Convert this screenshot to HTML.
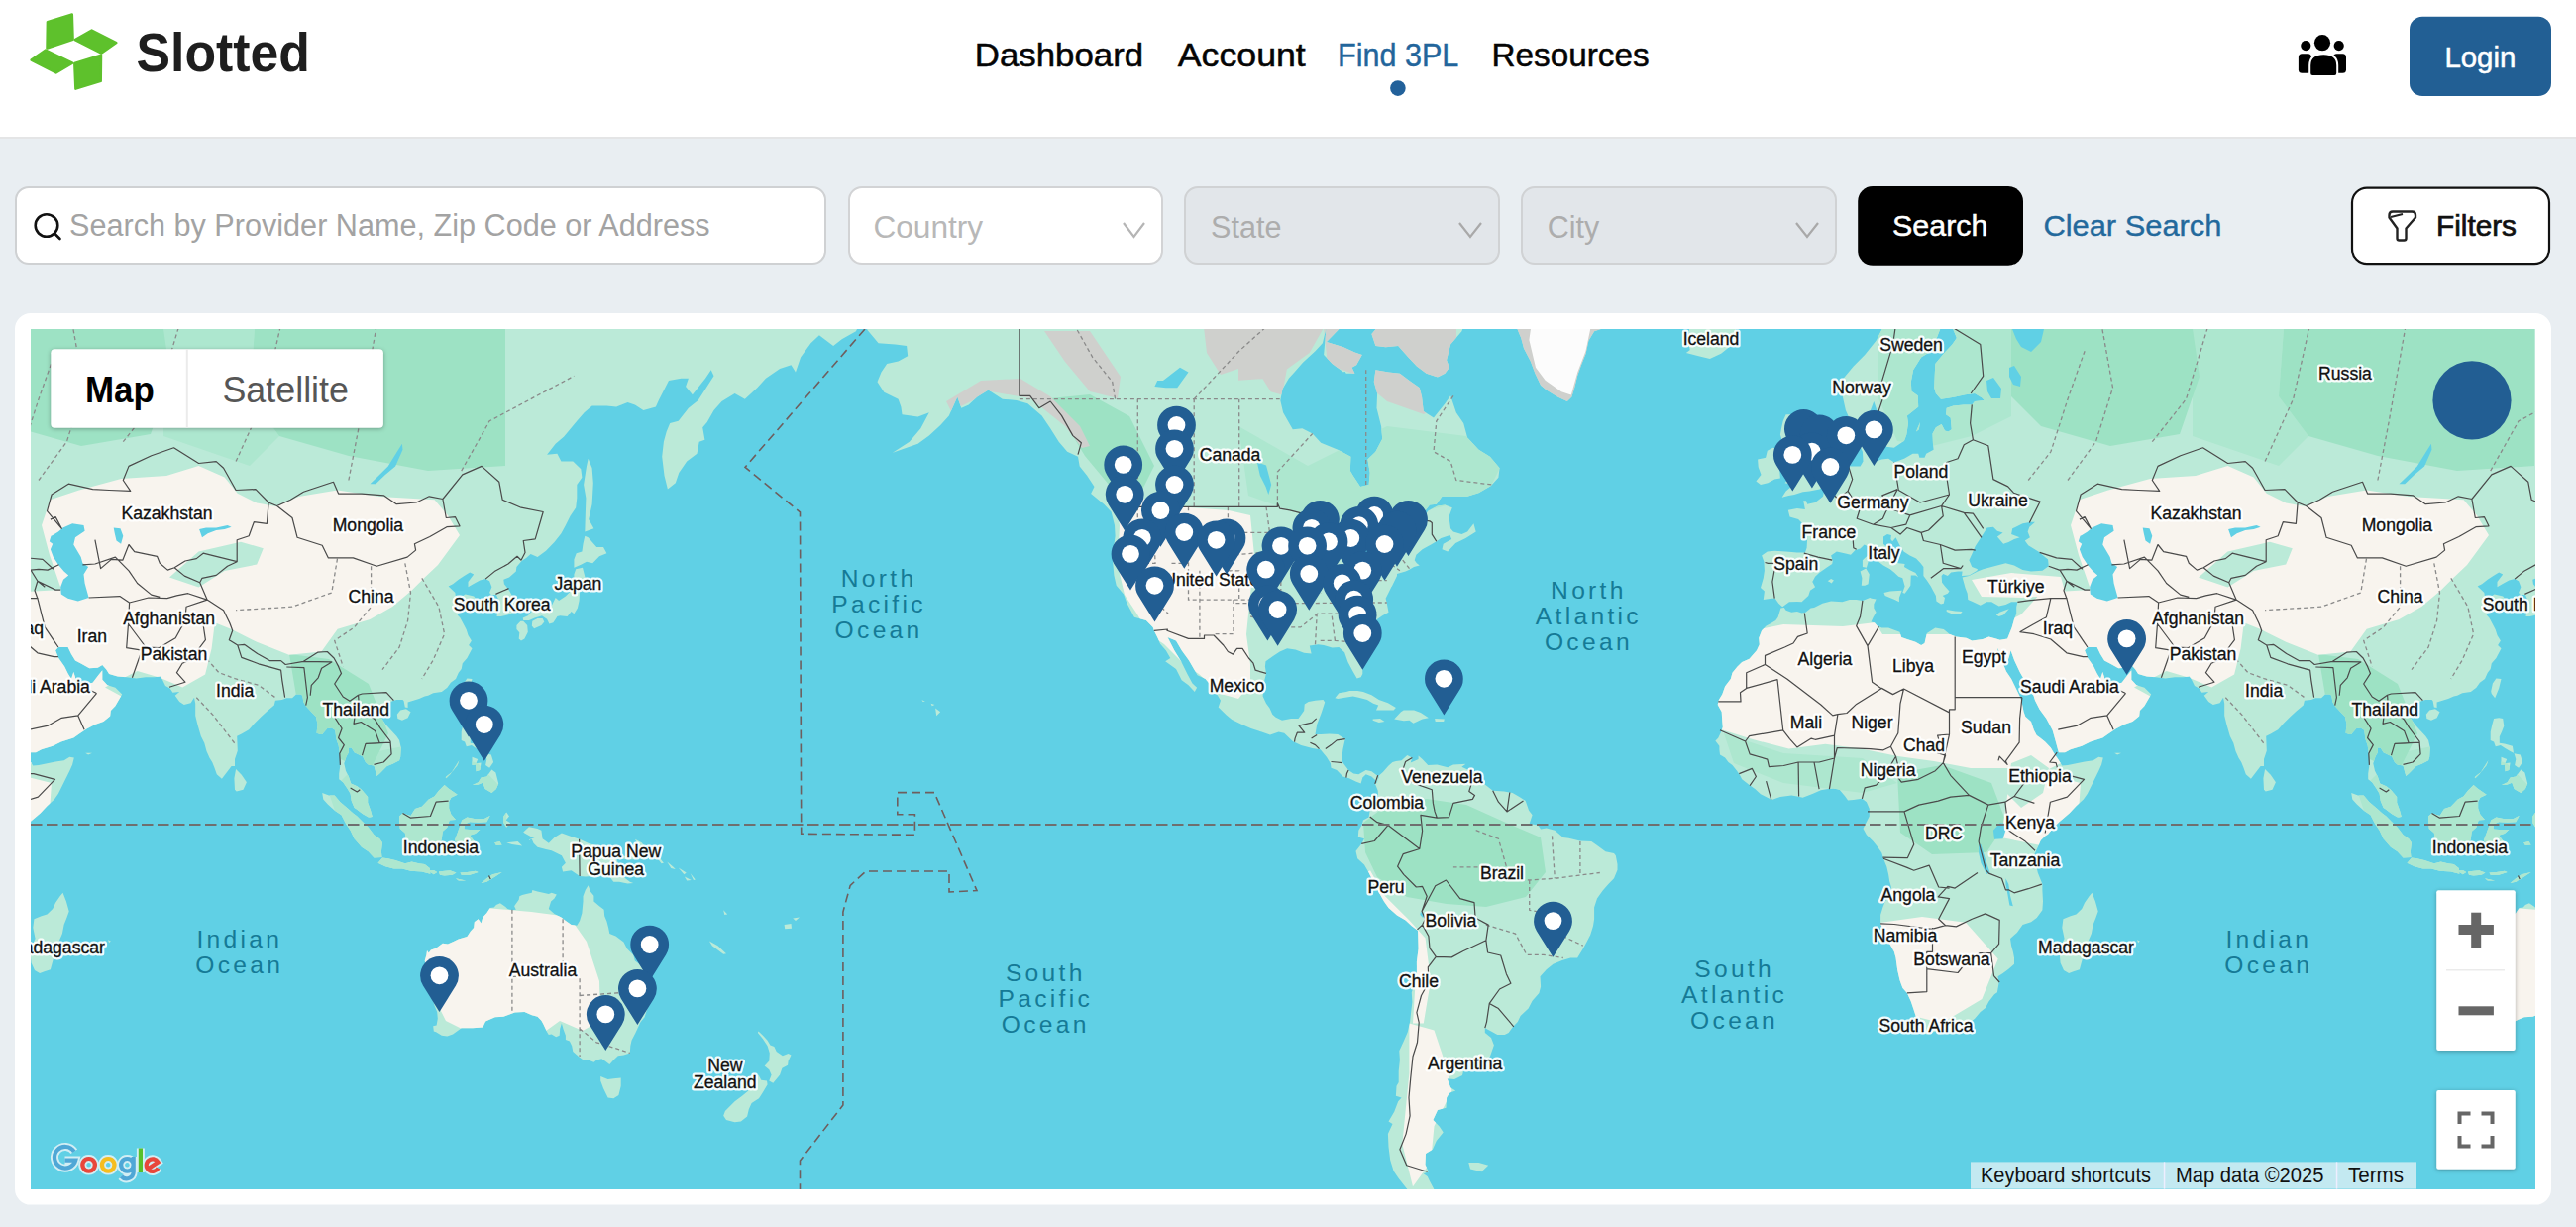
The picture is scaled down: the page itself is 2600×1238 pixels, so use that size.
<!DOCTYPE html>
<html><head><meta charset="utf-8">
<style>
*{box-sizing:border-box;margin:0;padding:0}
html,body{width:2600px;height:1238px;overflow:hidden;background:#e9eef2;font-family:"Liberation Sans",sans-serif}
svg{position:absolute;left:0;top:0}
.map{position:absolute;left:31px;top:332px;width:2528px;height:868px;overflow:hidden;background:#60d0e5}
text{font-family:"Liberation Sans",sans-serif}
@media (max-width:1400px){html{zoom:0.5}}
</style></head><body>
<svg width="2600" height="1238" viewBox="0 0 2600 1238"><rect x="0" y="0" width="2600" height="138" fill="#fff"/><rect x="0" y="138" width="2600" height="2" fill="#e4e5e6"/><g fill="#5ec12c" stroke="#5ec12c" stroke-width="2.5" stroke-linejoin="round"><path d="M47.5 48.5L47.9 22.1L72.8 14.5L73.6 39.8Z"/><path d="M75.8 40.2L92.6 30.6L117.3 43.1L102.4 53.6Z"/><path d="M102.0 55.6L101.7 81.9L76.4 89.6L75.3 63.9Z"/><path d="M73.1 63.6L56.6 73.5L31.6 60.6L46.0 50.6Z"/></g><text x="137.5" y="72.0" font-size="55.0" font-weight="bold" fill="#1e1e1e" textLength="175.5" lengthAdjust="spacingAndGlyphs">Slotted</text><text x="983.8" y="67.0" font-size="33.0" font-weight="normal" fill="#050505" textLength="170.3" lengthAdjust="spacingAndGlyphs" stroke="#050505" stroke-width="0.5">Dashboard</text><text x="1188.8" y="67.0" font-size="33.0" font-weight="normal" fill="#050505" textLength="129.0" lengthAdjust="spacingAndGlyphs" stroke="#050505" stroke-width="0.5">Account</text><text x="1350.0" y="67.0" font-size="33.0" font-weight="normal" fill="#22659b" textLength="122.3" lengthAdjust="spacingAndGlyphs" stroke="#22659b" stroke-width="0.4">Find 3PL</text><text x="1505.6" y="67.0" font-size="33.0" font-weight="normal" fill="#050505" textLength="159.0" lengthAdjust="spacingAndGlyphs" stroke="#050505" stroke-width="0.5">Resources</text><circle cx="1410.9" cy="89.1" r="7.8" fill="#22619a"/><g fill="#000"><circle cx="2344" cy="43.2" r="8.1"/><circle cx="2327.3" cy="46.1" r="5.1"/><circle cx="2360.7" cy="46.1" r="5.1"/><rect x="2319.9" y="54.3" width="13" height="19.5" rx="3.5"/><rect x="2355" y="54.3" width="13" height="19.5" rx="3.5"/><path d="M2331.2 66Q2331.2 54.3 2345.2 54.3Q2359.2 54.3 2359.2 66L2359.2 74Q2359.2 76.9 2356.3 76.9L2334.1 76.9Q2331.2 76.9 2331.2 74Z" stroke="#fff" stroke-width="2"/></g><rect x="2432" y="16.8" width="143" height="80.2" rx="13" fill="#225f94"/><text x="2467.4" y="67.5" font-size="29.0" font-weight="normal" fill="#fff" textLength="72.0" lengthAdjust="spacingAndGlyphs" stroke="#fff" stroke-width="0.5">Login</text><rect x="16" y="189" width="817" height="77" rx="13" fill="#fff" stroke="#cfd1d3" stroke-width="2"/><circle cx="47" cy="227.5" r="11.3" fill="none" stroke="#111" stroke-width="2.6"/><path d="M55.5 236L60.5 241" stroke="#111" stroke-width="2.6" stroke-linecap="round"/><text x="70.0" y="238.3" font-size="31.0" font-weight="normal" fill="#a3a3a3" textLength="646.6" lengthAdjust="spacingAndGlyphs">Search by Provider Name, Zip Code or Address</text><rect x="857" y="189" width="316" height="77" rx="13" fill="#fff" stroke="#d2d3d5" stroke-width="2"/><text x="881.4" y="239.5" font-size="31.0" font-weight="normal" fill="#b8b8b8" textLength="110.8" lengthAdjust="spacingAndGlyphs">Country</text><path d="M1134 225L1144.5 239L1155 225" fill="none" stroke="#b5b5b5" stroke-width="2.2"/><rect x="1196" y="189" width="317" height="77" rx="13" fill="#e2e6ea" stroke="#d0d2d4" stroke-width="2"/><text x="1222.0" y="239.5" font-size="31.0" font-weight="normal" fill="#adadad" textLength="71.4" lengthAdjust="spacingAndGlyphs">State</text><path d="M1473 225L1484 239L1495 225" fill="none" stroke="#a9a9a9" stroke-width="2.2"/><rect x="1536" y="189" width="317" height="77" rx="13" fill="#e2e6ea" stroke="#d0d2d4" stroke-width="2"/><text x="1561.7" y="239.5" font-size="31.0" font-weight="normal" fill="#adadad" textLength="52.5" lengthAdjust="spacingAndGlyphs">City</text><path d="M1813 225L1824 239L1835 225" fill="none" stroke="#a9a9a9" stroke-width="2.2"/><rect x="1875.2" y="188" width="166.8" height="79.8" rx="15" fill="#000"/><text x="1910.0" y="238.0" font-size="30.0" font-weight="normal" fill="#fff" textLength="96.5" lengthAdjust="spacingAndGlyphs" stroke="#fff" stroke-width="0.5">Search</text><text x="2062.4" y="238.0" font-size="30.0" font-weight="normal" fill="#23699c" textLength="180.0" lengthAdjust="spacingAndGlyphs" stroke="#23699c" stroke-width="0.4">Clear Search</text><rect x="2374" y="189.6" width="199" height="76.6" rx="15" fill="#fff" stroke="#111" stroke-width="2.2"/><path d="M2411.5 217Q2411.5 213.5 2415 213.5L2434.5 213.5Q2438 213.5 2438 217L2438 219.5L2428.5 230.5L2428.5 240.5Q2428.5 242.5 2426.5 242.5L2421.5 242.5Q2419.5 242.5 2419.5 240.5L2419.5 230.5L2411.5 219.5Z" fill="none" stroke="#222" stroke-width="2.4" stroke-linejoin="round"/><path d="M2413 219L2425 216" stroke="#222" stroke-width="2"/><text x="2459.0" y="237.7" font-size="29.0" font-weight="normal" fill="#111" textLength="81.0" lengthAdjust="spacingAndGlyphs" stroke="#111" stroke-width="0.7">Filters</text><rect x="15" y="316" width="2560" height="899.6" rx="16" fill="#fff"/></svg>
<div class="map"><svg width="2528" height="868" viewBox="0 0 2528 868" style="position:absolute;left:0;top:0"><defs><clipPath id="lc"><path d="M844.3 0.8L855.6 14.3L872.7 15.6L884.1 17.0L885.2 27.3L875.6 32.4L864.2 34.9L858.5 43.6L854.5 53.3L861.3 63.8L875.6 70.7L878.4 78.6L879.5 86.3L895.5 88.5L906.8 84.2L898.3 100.3L886.9 113.7L869.9 124.8L884.1 119.8L895.5 115.8L906.8 107.6L918.2 97.1L926.8 87.4L935.3 68.5L939.3 79.7L946.7 76.4L955.2 68.5L966.6 61.5L980.8 70.7L995.0 71.9L1006.4 75.3L1020.6 87.4L1029.2 100.3L1037.7 113.7L1046.2 123.8L1057.0 128.7L1058.7 138.4L1066.1 147.8L1073.5 158.9L1070.1 166.1L1083.2 176.7L1090.6 184.5L1094.0 198.0L1094.6 208.7L1091.7 230.1L1093.4 248.4L1095.7 258.7L1103.1 267.4L1106.5 276.7L1113.9 290.7L1125.9 294.1L1132.7 300.9L1133.8 304.3L1137.2 311.0L1140.1 317.7L1145.8 324.2L1150.3 332.0L1145.2 335.3L1156.0 342.9L1161.7 354.3L1168.5 359.3L1174.8 366.1L1177.1 361.8L1172.5 357.4L1167.4 348.0L1161.1 335.3L1154.3 324.2L1147.5 311.0L1156.0 314.4L1161.7 324.2L1169.1 334.6L1177.6 349.3L1185.6 353.0L1194.7 364.3L1201.0 374.7L1198.7 381.4L1206.6 389.3L1212.3 394.1L1222.6 398.9L1231.7 403.0L1242.5 406.6L1251.0 409.5L1259.6 406.6L1265.2 407.8L1273.8 416.0L1282.3 420.1L1293.7 423.1L1301.7 424.2L1307.9 431.8L1311.9 438.2L1312.5 442.8L1318.2 445.1L1324.4 451.5L1330.7 453.2L1337.5 456.6L1342.6 458.4L1344.3 452.6L1347.7 449.2L1353.4 451.5L1356.3 454.3L1359.1 457.2L1360.8 451.5L1358.0 449.7L1353.4 446.3L1347.7 445.1L1340.3 449.2L1335.2 448.6L1330.1 445.1L1324.4 437.6L1323.3 434.1L1324.4 424.2L1326.7 413.7L1319.3 409.0L1310.8 408.4L1302.2 409.0L1296.5 409.0L1298.2 398.9L1300.5 392.9L1302.8 386.9L1306.2 376.5L1304.5 374.1L1296.5 374.7L1289.7 375.9L1285.7 378.4L1285.2 385.0L1279.5 392.9L1272.1 392.9L1263.0 394.7L1256.7 391.7L1253.3 388.7L1250.5 382.6L1247.0 377.8L1243.6 370.4L1244.2 362.4L1245.3 354.3L1247.0 347.4L1245.9 340.4L1246.5 335.3L1253.9 330.1L1260.7 325.5L1268.1 322.3L1276.6 323.6L1285.2 326.8L1292.6 327.5L1290.8 319.6L1299.4 318.3L1305.1 319.0L1313.6 321.6L1320.4 321.0L1326.1 326.2L1329.5 335.9L1334.6 345.5L1338.6 352.4L1342.6 351.2L1344.3 348.0L1344.3 341.7L1341.5 330.7L1337.5 321.0L1336.9 315.0L1339.2 307.7L1345.5 303.0L1350.6 297.5L1356.3 294.8L1364.2 289.3L1370.5 285.8L1368.8 276.7L1367.6 271.7L1370.5 266.0L1373.3 260.2L1373.9 259.4L1379.0 249.1L1379.0 246.9L1387.6 244.6L1391.0 243.1L1396.1 240.1L1401.8 238.5L1398.9 236.3L1396.7 233.2L1398.4 227.8L1404.6 222.3L1413.2 217.5L1418.8 214.3L1423.4 211.1L1432.5 207.9L1434.2 211.9L1425.7 216.7L1424.5 222.3L1430.2 224.6L1438.2 215.9L1448.4 211.1L1458.7 204.6L1456.4 196.3L1450.1 204.6L1444.4 207.1L1435.9 204.6L1433.1 201.3L1431.4 189.6L1434.8 180.2L1427.4 177.6L1420.0 178.5L1410.3 183.6L1402.9 194.7L1398.9 195.5L1404.6 187.1L1412.0 177.6L1418.8 176.7L1424.5 168.8L1435.9 168.8L1450.1 168.8L1461.5 165.2L1474.0 158.0L1481.4 149.7L1482.6 140.3L1472.9 128.7L1461.5 121.8L1450.1 109.6L1446.2 95.0L1438.8 84.2L1433.1 67.3L1427.4 75.3L1416.0 89.6L1405.8 83.1L1404.1 68.5L1401.8 59.2L1391.5 52.1L1381.9 44.8L1370.5 43.6L1357.4 41.2L1355.7 53.3L1359.1 65.0L1358.5 79.7L1363.1 98.2L1364.2 110.7L1357.4 123.8L1349.4 131.6L1351.7 145.0L1350.6 157.1L1342.0 158.9L1334.6 147.8L1331.8 143.1L1332.4 128.7L1319.3 121.8L1302.2 114.7L1293.7 105.5L1283.4 100.3L1273.8 101.3L1264.1 84.2L1261.3 71.9L1263.5 60.4L1269.8 49.7L1275.5 43.6L1284.0 33.7L1296.5 22.2L1303.9 14.3L1309.0 -7.6L1310.8 -65.7L1231.1 -234.3L1003.6 -234.3L832.9 -160.9L844.3 0.8ZM1450.1 -13.2L1444.4 2.2L1433.1 15.6L1429.1 31.2L1431.9 38.7L1427.4 44.8L1420.0 48.5L1408.6 44.8L1398.9 37.4L1390.4 28.6L1380.2 17.0L1367.6 18.3L1357.4 17.0L1353.4 4.9L1367.6 -11.8L1379.0 -33.9L1447.3 -65.7L1450.1 -13.2ZM1307.9 13.0L1325.0 18.3L1336.4 23.5L1343.8 26.1L1338.1 36.2L1325.0 43.6L1313.6 34.9L1305.1 26.1L1307.9 -4.7L1327.8 -7.6L1307.9 13.0ZM1322.1 36.2L1333.5 38.7L1336.4 44.8L1327.8 44.8L1322.1 36.2ZM1487.1 -33.9L1495.6 -19.0L1498.5 -4.7L1504.2 9.0L1507.0 19.6L1513.8 32.4L1518.4 44.8L1524.1 56.8L1529.8 61.5L1541.2 68.5L1550.8 73.0L1555.4 68.5L1558.2 59.2L1561.1 47.3L1565.0 36.2L1569.6 24.8L1572.4 11.7L1578.1 2.2L1586.7 -0.6L1595.2 -3.4L1606.6 -19.0L1629.3 -49.4L1686.2 -160.9L1487.1 -234.3L1487.1 -33.9ZM1674.8 -11.8L1717.5 -11.8L1722.6 6.3L1715.8 17.0L1706.1 24.8L1694.8 29.9L1683.4 27.3L1670.9 24.1L1674.8 20.9L1673.1 14.3L1674.8 -11.8ZM1316.4 372.3L1320.4 367.3L1327.8 366.1L1331.2 364.9L1339.2 364.9L1344.9 366.1L1353.4 369.2L1360.8 374.1L1369.9 377.2L1377.9 382.0L1375.6 384.4L1358.0 384.4L1360.2 379.6L1355.1 377.8L1348.9 374.1L1340.3 371.7L1334.6 370.4L1326.7 371.7L1319.3 372.9L1316.4 372.3ZM1376.2 393.5L1383.0 386.3L1385.8 384.4L1396.1 384.4L1402.9 386.9L1410.9 392.3L1404.6 393.5L1395.5 397.7L1391.5 394.7L1385.8 395.3L1376.2 393.5ZM1354.6 393.5L1362.0 392.9L1366.5 395.9L1360.8 397.1L1354.6 394.7ZM1417.1 392.9L1426.8 393.5L1426.2 395.9L1417.7 395.9ZM1360.2 450.9L1364.8 446.9L1370.5 440.5L1374.5 437.0L1377.9 435.9L1383.6 435.3L1389.3 430.1L1394.4 432.4L1392.7 437.6L1396.1 435.9L1400.6 434.1L1400.6 430.6L1404.6 434.1L1410.3 439.9L1419.4 439.4L1430.2 442.2L1435.9 439.4L1448.4 438.8L1444.4 441.7L1453.0 445.7L1455.8 451.5L1461.5 454.9L1470.0 461.2L1475.7 465.8L1487.1 466.4L1495.6 468.1L1502.5 472.1L1508.7 476.1L1512.1 485.8L1515.6 490.3L1512.7 498.9L1521.2 500.6L1524.1 504.6L1529.8 503.4L1538.3 505.7L1546.8 513.1L1552.5 513.7L1563.9 516.5L1575.3 517.1L1581.0 521.1L1589.5 527.3L1598.0 529.1L1599.8 531.3L1601.5 539.9L1601.5 545.7L1598.0 554.3L1592.4 560.1L1586.7 566.4L1581.0 574.6L1578.1 583.4L1578.1 595.2L1577.0 602.3L1574.2 611.3L1570.7 618.0L1566.8 625.3L1561.1 634.5L1554.2 634.5L1545.7 637.0L1536.6 640.7L1529.8 646.3L1523.5 653.3L1524.1 663.5L1522.4 669.9L1515.6 677.7L1511.6 685.6L1503.6 693.0L1500.8 699.1L1495.6 704.5L1491.7 710.0L1487.7 712.1L1480.3 712.1L1474.0 708.6L1467.8 705.2L1467.8 710.0L1474.0 714.9L1476.9 722.6L1472.9 734.0L1465.5 739.1L1453.0 740.6L1445.6 739.8L1446.2 747.9L1445.0 753.1L1437.0 756.9L1429.7 756.2L1433.1 765.3L1438.2 768.4L1431.9 770.7L1429.1 775.4L1428.5 785.7L1420.0 788.1L1415.4 797.9L1421.7 804.5L1425.7 810.4L1418.8 818.9L1414.9 827.7L1408.0 832.1L1407.5 842.9L1410.9 850.3L1405.8 852.2L1409.7 855.0L1412.0 859.7L1416.6 868.4L1428.5 873.3L1421.7 876.2L1410.3 879.2L1398.9 876.2L1390.4 869.3L1380.7 856.9L1375.6 849.4L1372.2 838.4L1370.5 825.0L1369.9 812.1L1374.5 802.0L1370.5 799.5L1376.2 789.7L1380.2 779.3L1383.6 775.4L1377.9 773.8L1378.5 763.7L1380.7 759.9L1380.7 748.7L1381.9 737.6L1381.3 728.3L1385.8 718.4L1389.8 709.3L1392.1 699.1L1393.2 689.0L1394.4 679.0L1393.8 669.3L1396.7 660.9L1398.9 650.1L1398.9 638.2L1400.6 625.3L1400.1 607.1L1393.8 602.3L1387.6 596.4L1379.0 591.6L1370.5 584.0L1365.9 577.5L1361.4 569.4L1356.3 560.1L1350.6 548.5L1346.0 540.5L1339.2 534.2L1337.5 526.8L1343.2 519.4L1346.0 514.2L1339.8 512.5L1340.3 505.7L1343.8 500.0L1344.9 495.4L1350.6 492.6L1351.7 485.8L1359.1 480.1L1360.2 474.4L1359.7 465.8L1356.8 458.4L1359.1 457.2L1360.2 450.9ZM1451.3 841.1L1461.5 841.1L1471.2 843.8L1464.4 850.3L1453.0 847.5ZM-219.6 -160.9L-171.2 -26.4L-176.9 -4.7L-185.4 11.7L-196.8 26.1L-208.2 37.4L-218.4 49.7L-219.6 66.2L-216.1 81.9L-212.7 89.6L-207.0 92.8L-199.6 89.6L-191.1 81.9L-187.7 73.0L-184.3 83.1L-184.3 88.5L-180.9 96.0L-176.3 108.6L-175.2 118.8L-167.2 119.8L-157.0 112.7L-154.7 106.5L-153.0 95.0L-154.1 87.4L-142.8 78.6L-143.3 67.3L-149.6 62.7L-150.2 53.3L-147.9 41.2L-139.9 28.6L-129.7 22.2L-125.7 13.0L-120.0 -2.0L-108.6 -2.0L-104.1 9.0L-108.6 15.6L-117.2 24.8L-125.7 34.9L-126.3 47.3L-126.8 59.2L-125.1 65.0L-120.0 70.7L-111.5 69.6L-105.8 68.5L-95.5 66.2L-85.9 65.0L-78.5 69.6L-76.2 71.9L-85.9 73.0L-88.7 76.4L-97.2 76.4L-107.5 77.5L-114.3 79.7L-114.9 86.3L-110.3 89.6L-109.2 101.3L-112.6 103.4L-116.0 102.4L-119.4 96.0L-125.1 99.2L-128.5 105.5L-128.0 116.8L-127.4 121.8L-134.8 125.8L-136.5 129.7L-141.6 129.7L-142.8 125.8L-148.4 125.8L-157.0 130.7L-167.2 134.5L-172.9 130.7L-179.7 131.6L-185.4 133.6L-186.6 130.7L-191.1 126.7L-191.1 118.8L-188.3 111.7L-189.4 105.5L-187.7 96.0L-194.0 101.3L-201.4 105.5L-201.9 108.6L-201.4 118.8L-199.1 123.8L-198.5 133.6L-201.4 138.4L-208.2 138.4L-213.9 138.4L-220.7 143.1L-221.8 147.8L-224.7 152.5L-228.7 158.0L-233.8 160.7L-237.8 162.5L-238.9 168.8L-242.3 171.5L-246.9 175.0L-254.8 176.7L-256.0 173.2L-258.8 173.2L-257.1 181.9L-265.1 181.1L-274.2 182.8L-272.5 189.6L-263.9 192.1L-260.5 195.5L-254.8 203.0L-254.8 210.3L-255.4 220.7L-257.1 225.4L-265.1 225.4L-276.4 224.6L-287.8 223.8L-295.2 224.6L-300.9 228.5L-298.6 234.7L-298.1 243.8L-299.2 251.3L-302.0 260.9L-298.1 264.5L-299.2 273.1L-290.7 271.7L-287.3 271.7L-283.8 276.7L-279.9 280.2L-273.0 275.3L-265.1 274.9L-260.5 275.3L-253.7 268.9L-252.0 263.8L-246.9 260.2L-249.7 255.0L-246.9 249.8L-242.9 246.1L-235.5 240.8L-229.8 237.0L-229.2 234.0L-230.9 228.5L-225.2 224.6L-217.3 226.2L-211.0 227.8L-206.5 223.1L-201.4 221.5L-197.4 217.5L-192.2 219.9L-188.3 228.5L-184.9 233.2L-178.0 238.5L-171.2 242.3L-167.2 245.4L-162.7 249.8L-158.7 251.3L-156.4 259.4L-158.7 266.0L-156.4 266.7L-153.6 263.1L-150.7 258.7L-150.2 248.4L-145.6 248.4L-142.8 250.6L-145.6 246.1L-151.9 243.1L-157.0 240.1L-156.4 237.0L-162.7 236.3L-167.2 232.4L-171.2 223.8L-178.0 216.7L-178.0 209.5L-174.0 207.1L-170.1 207.9L-170.6 211.9L-168.9 214.3L-165.5 210.3L-161.5 218.3L-157.5 224.6L-151.3 228.5L-145.0 231.6L-140.5 236.3L-137.6 240.1L-137.6 249.1L-134.2 253.6L-130.2 259.4L-128.0 263.8L-125.1 268.9L-124.6 274.6L-120.0 277.4L-117.2 276.7L-116.0 271.0L-118.3 268.9L-113.2 266.7L-111.5 264.5L-116.0 259.4L-118.9 255.8L-119.4 249.1L-117.7 246.9L-113.2 249.1L-109.8 245.4L-102.9 244.6L-98.4 244.6L-99.0 249.1L-91.6 248.4L-83.6 243.8L-83.0 242.3L-88.7 240.1L-91.6 233.2L-88.7 227.0L-85.3 219.1L-79.6 210.3L-73.4 200.5L-67.1 199.7L-63.1 203.8L-57.4 205.4L-63.1 209.5L-56.9 216.7L-51.7 215.1L-46.0 211.9L-40.4 210.3L-48.9 207.1L-47.8 201.3L-37.5 196.3L-29.0 194.7L-25.0 194.7L-30.7 199.7L-32.4 204.6L-30.1 210.3L-35.2 213.5L-31.8 218.3L-21.6 224.6L-11.9 232.4L-11.3 239.3L-17.6 243.8L-29.0 244.6L-37.5 243.1L-46.0 238.5L-54.6 236.3L-66.0 239.3L-77.3 242.3L-83.0 244.6L-91.6 249.1L-98.4 250.6L-96.7 256.5L-95.5 260.9L-93.3 266.7L-92.7 273.1L-87.6 275.3L-80.2 278.8L-73.9 275.3L-68.8 275.3L-61.4 279.5L-54.6 278.1L-48.9 275.3L-42.6 275.3L-43.8 280.2L-43.8 287.2L-46.0 292.7L-48.3 300.9L-51.2 308.3L-52.9 312.4L-49.5 324.2L-46.0 334.0L-40.4 346.1L-36.4 353.0L-29.0 361.8L-25.0 374.7L-20.4 383.8L-13.6 392.9L-7.4 404.8L-4.5 414.9L-2.2 423.6L-1.1 427.2L5.2 427.2L10.8 424.2L22.2 420.7L30.8 416.6L43.3 412.5L49.0 408.4L56.4 403.6L64.9 398.9L73.4 395.9L80.2 390.5L80.8 385.0L85.4 380.2L92.2 368.6L85.4 361.8L77.4 359.3L72.3 353.7L72.3 344.2L67.7 349.9L62.6 356.8L53.5 358.7L45.5 357.4L45.0 351.2L43.3 346.1L41.0 353.0L37.6 347.4L34.2 340.4L27.9 331.4L25.1 324.2L27.9 321.0L33.6 321.0L37.6 321.0L41.0 328.1L45.0 334.6L51.2 337.8L59.2 342.3L67.7 341.7L72.3 339.1L76.3 343.6L79.1 348.0L87.6 350.5L96.7 351.2L106.4 352.4L116.1 351.2L124.6 351.2L130.9 350.5L133.2 354.3L136.0 359.9L140.6 362.4L143.4 366.7L150.2 366.1L145.7 369.8L150.2 375.9L154.8 379.0L161.6 377.2L165.0 371.7L166.2 377.8L166.2 389.9L168.4 398.9L171.8 410.7L175.3 417.8L177.5 426.0L180.4 432.4L183.2 437.0L185.5 442.8L187.8 449.2L192.9 453.8L196.9 448.6L202.6 441.1L206.0 441.1L206.0 434.1L208.8 425.4L208.2 410.7L212.8 408.4L220.2 404.2L225.9 397.7L232.7 391.1L238.4 385.7L245.8 379.6L246.9 374.7L253.8 374.1L258.3 372.3L264.0 372.3L268.0 368.6L272.5 368.6L274.2 369.8L275.4 376.5L277.7 380.2L283.9 386.9L287.9 391.1L289.6 398.9L288.5 407.8L292.4 409.0L294.2 409.0L299.3 403.0L303.8 402.4L307.2 404.8L308.4 413.7L310.6 420.1L312.4 431.2L312.4 439.9L311.2 448.6L311.2 454.3L315.2 457.2L319.8 464.1L322.6 468.7L323.7 476.1L326.6 482.9L328.9 484.6L335.1 489.2L340.8 492.6L342.5 492.6L344.8 492.0L343.1 485.8L340.2 477.8L340.2 472.1L334.0 464.7L329.4 461.2L323.2 458.4L320.9 451.5L318.0 445.7L316.3 438.2L318.6 431.2L320.9 427.2L320.9 422.5L323.7 422.5L326.6 427.2L332.3 430.1L335.1 431.2L338.0 437.0L340.8 439.4L346.5 440.5L349.3 450.9L352.2 448.6L359.6 441.1L365.3 438.8L372.1 435.3L373.2 431.8L373.8 422.5L372.1 414.9L369.2 410.7L363.6 404.8L358.4 398.9L353.9 392.3L353.3 388.7L356.2 383.8L359.0 379.6L363.6 375.9L366.4 374.7L369.2 374.1L375.5 374.1L376.6 375.3L377.8 381.4L380.6 382.0L380.6 376.5L386.3 374.7L392.0 372.9L397.7 370.4L401.1 369.8L406.2 367.3L414.8 366.1L420.4 361.8L423.9 356.8L429.0 353.0L431.8 346.7L434.7 342.9L435.8 337.2L440.4 332.0L445.5 322.3L442.1 319.0L444.9 314.4L441.5 309.0L439.8 303.6L437.5 298.9L433.5 291.4L430.7 288.6L436.4 280.9L439.8 277.4L448.9 271.7L447.2 269.6L438.6 267.4L431.8 271.7L429.0 271.0L428.4 266.0L421.6 259.4L426.1 257.2L431.8 252.8L437.5 249.1L443.2 245.4L447.2 247.6L441.5 255.0L441.5 260.2L446.6 257.2L453.4 253.6L459.1 252.1L463.1 254.3L465.4 260.2L463.1 266.0L464.8 268.1L469.9 268.1L472.2 273.1L471.6 280.2L470.5 290.0L474.5 290.0L483.0 287.9L487.6 285.8L488.7 280.2L488.1 273.1L483.0 263.8L477.9 257.2L477.3 252.8L483.0 250.6L489.8 244.6L490.4 240.1L495.5 234.0L500.1 230.9L504.6 227.0L511.5 230.1L520.0 223.8L528.5 215.1L535.4 206.2L539.9 198.0L544.5 188.8L550.2 180.2L551.3 170.6L551.3 157.1L556.4 149.7L555.3 141.2L547.3 133.6L535.4 133.6L531.4 125.8L521.1 126.7L529.7 115.8L538.2 108.6L551.3 92.8L558.7 84.2L566.6 77.5L581.4 77.5L591.1 78.6L602.5 74.1L609.9 76.4L618.4 81.9L630.9 78.6L633.8 71.9L644.0 52.1L656.5 49.7L663.9 49.7L661.1 58.0L667.9 66.2L681.0 49.7L686.7 41.2L689.5 47.3L680.4 61.5L673.6 71.9L663.9 79.7L653.7 92.8L645.2 95.0L641.7 103.4L638.9 113.7L637.2 128.7L639.5 147.8L642.9 161.6L650.8 155.2L654.3 145.0L662.2 133.6L672.5 125.8L674.7 113.7L680.4 111.7L678.2 99.2L682.7 93.9L689.5 81.9L697.5 73.0L710.6 65.0L720.8 70.7L733.3 59.2L741.9 49.7L756.1 39.9L767.5 36.2L772.0 43.6L777.1 28.6L787.4 14.3L795.9 6.3L810.1 17.0L818.7 10.3L832.9 2.2L838.6 -9.0L838.6 -160.9L-219.6 -160.9ZM1828.4 -160.9L1876.8 -26.4L1871.1 -4.7L1862.6 11.7L1851.2 26.1L1839.8 37.4L1829.6 49.7L1828.4 66.2L1831.9 81.9L1835.3 89.6L1841.0 92.8L1848.4 89.6L1856.9 81.9L1860.3 73.0L1863.7 83.1L1863.7 88.5L1867.1 96.0L1871.7 108.6L1872.8 118.8L1880.8 119.8L1891.0 112.7L1893.3 106.5L1895.0 95.0L1893.9 87.4L1905.2 78.6L1904.7 67.3L1898.4 62.7L1897.8 53.3L1900.1 41.2L1908.1 28.6L1918.3 22.2L1922.3 13.0L1928.0 -2.0L1939.4 -2.0L1943.9 9.0L1939.4 15.6L1930.8 24.8L1922.3 34.9L1921.7 47.3L1921.2 59.2L1922.9 65.0L1928.0 70.7L1936.5 69.6L1942.2 68.5L1952.5 66.2L1962.1 65.0L1969.5 69.6L1971.8 71.9L1962.1 73.0L1959.3 76.4L1950.8 76.4L1940.5 77.5L1933.7 79.7L1933.1 86.3L1937.7 89.6L1938.8 101.3L1935.4 103.4L1932.0 102.4L1928.6 96.0L1922.9 99.2L1919.5 105.5L1920.0 116.8L1920.6 121.8L1913.2 125.8L1911.5 129.7L1906.4 129.7L1905.2 125.8L1899.6 125.8L1891.0 130.7L1880.8 134.5L1875.1 130.7L1868.3 131.6L1862.6 133.6L1861.4 130.7L1856.9 126.7L1856.9 118.8L1859.7 111.7L1858.6 105.5L1860.3 96.0L1854.0 101.3L1846.6 105.5L1846.1 108.6L1846.6 118.8L1848.9 123.8L1849.5 133.6L1846.6 138.4L1839.8 138.4L1834.1 138.4L1827.3 143.1L1826.2 147.8L1823.3 152.5L1819.3 158.0L1814.2 160.7L1810.2 162.5L1809.1 168.8L1805.7 171.5L1801.1 175.0L1793.2 176.7L1792.0 173.2L1789.2 173.2L1790.9 181.9L1782.9 181.1L1773.8 182.8L1775.5 189.6L1784.1 192.1L1787.5 195.5L1793.2 203.0L1793.2 210.3L1792.6 220.7L1790.9 225.4L1782.9 225.4L1771.6 224.6L1760.2 223.8L1752.8 224.6L1747.1 228.5L1749.4 234.7L1749.9 243.8L1748.8 251.3L1746.0 260.9L1749.9 264.5L1748.8 273.1L1757.3 271.7L1760.7 271.7L1764.2 276.7L1768.1 280.2L1775.0 275.3L1782.9 274.9L1787.5 275.3L1794.3 268.9L1796.0 263.8L1801.1 260.2L1798.3 255.0L1801.1 249.8L1805.1 246.1L1812.5 240.8L1818.2 237.0L1818.8 234.0L1817.1 228.5L1822.8 224.6L1830.7 226.2L1837.0 227.8L1841.5 223.1L1846.6 221.5L1850.6 217.5L1855.8 219.9L1859.7 228.5L1863.1 233.2L1870.0 238.5L1876.8 242.3L1880.8 245.4L1885.3 249.8L1889.3 251.3L1891.6 259.4L1889.3 266.0L1891.6 266.7L1894.4 263.1L1897.3 258.7L1897.8 248.4L1902.4 248.4L1905.2 250.6L1902.4 246.1L1896.1 243.1L1891.0 240.1L1891.6 237.0L1885.3 236.3L1880.8 232.4L1876.8 223.8L1870.0 216.7L1870.0 209.5L1874.0 207.1L1877.9 207.9L1877.4 211.9L1879.1 214.3L1882.5 210.3L1886.5 218.3L1890.5 224.6L1896.7 228.5L1903.0 231.6L1907.5 236.3L1910.4 240.1L1910.4 249.1L1913.8 253.6L1917.8 259.4L1920.0 263.8L1922.9 268.9L1923.4 274.6L1928.0 277.4L1930.8 276.7L1932.0 271.0L1929.7 268.9L1934.8 266.7L1936.5 264.5L1932.0 259.4L1929.1 255.8L1928.6 249.1L1930.3 246.9L1934.8 249.1L1938.2 245.4L1945.1 244.6L1949.6 244.6L1949.0 249.1L1956.4 248.4L1964.4 243.8L1965.0 242.3L1959.3 240.1L1956.4 233.2L1959.3 227.0L1962.7 219.1L1968.4 210.3L1974.6 200.5L1980.9 199.7L1984.9 203.8L1990.6 205.4L1984.9 209.5L1991.1 216.7L1996.3 215.1L2002.0 211.9L2007.6 210.3L1999.1 207.1L2000.2 201.3L2010.5 196.3L2019.0 194.7L2023.0 194.7L2017.3 199.7L2015.6 204.6L2017.9 210.3L2012.8 213.5L2016.2 218.3L2026.4 224.6L2036.1 232.4L2036.7 239.3L2030.4 243.8L2019.0 244.6L2010.5 243.1L2002.0 238.5L1993.4 236.3L1982.0 239.3L1970.7 242.3L1965.0 244.6L1956.4 249.1L1949.6 250.6L1951.3 256.5L1952.5 260.9L1954.7 266.7L1955.3 273.1L1960.4 275.3L1967.8 278.8L1974.1 275.3L1979.2 275.3L1986.6 279.5L1993.4 278.1L1999.1 275.3L2005.4 275.3L2004.2 280.2L2004.2 287.2L2002.0 292.7L1999.7 300.9L1996.8 308.3L1995.1 312.4L1998.5 324.2L2002.0 334.0L2007.6 346.1L2011.6 353.0L2019.0 361.8L2023.0 374.7L2027.6 383.8L2034.4 392.9L2040.6 404.8L2043.5 414.9L2045.8 423.6L2046.9 427.2L2053.2 427.2L2058.8 424.2L2070.2 420.7L2078.8 416.6L2091.3 412.5L2097.0 408.4L2104.4 403.6L2112.9 398.9L2121.4 395.9L2128.2 390.5L2128.8 385.0L2133.4 380.2L2140.2 368.6L2133.4 361.8L2125.4 359.3L2120.3 353.7L2120.3 344.2L2115.7 349.9L2110.6 356.8L2101.5 358.7L2093.5 357.4L2093.0 351.2L2091.3 346.1L2089.0 353.0L2085.6 347.4L2082.2 340.4L2075.9 331.4L2073.1 324.2L2075.9 321.0L2081.6 321.0L2085.6 321.0L2089.0 328.1L2093.0 334.6L2099.2 337.8L2107.2 342.3L2115.7 341.7L2120.3 339.1L2124.3 343.6L2127.1 348.0L2135.6 350.5L2144.7 351.2L2154.4 352.4L2164.1 351.2L2172.6 351.2L2178.9 350.5L2181.2 354.3L2184.0 359.9L2188.6 362.4L2191.4 366.7L2198.2 366.1L2193.7 369.8L2198.2 375.9L2202.8 379.0L2209.6 377.2L2213.0 371.7L2214.2 377.8L2214.2 389.9L2216.4 398.9L2219.8 410.7L2223.3 417.8L2225.5 426.0L2228.4 432.4L2231.2 437.0L2233.5 442.8L2235.8 449.2L2240.9 453.8L2244.9 448.6L2250.6 441.1L2254.0 441.1L2254.0 434.1L2256.8 425.4L2256.2 410.7L2260.8 408.4L2268.2 404.2L2273.9 397.7L2280.7 391.1L2286.4 385.7L2293.8 379.6L2294.9 374.7L2301.8 374.1L2306.3 372.3L2312.0 372.3L2316.0 368.6L2320.5 368.6L2322.2 369.8L2323.4 376.5L2325.7 380.2L2331.9 386.9L2335.9 391.1L2337.6 398.9L2336.5 407.8L2340.4 409.0L2342.2 409.0L2347.3 403.0L2351.8 402.4L2355.2 404.8L2356.4 413.7L2358.6 420.1L2360.4 431.2L2360.4 439.9L2359.2 448.6L2359.2 454.3L2363.2 457.2L2367.8 464.1L2370.6 468.7L2371.7 476.1L2374.6 482.9L2376.9 484.6L2383.1 489.2L2388.8 492.6L2390.5 492.6L2392.8 492.0L2391.1 485.8L2388.2 477.8L2388.2 472.1L2382.0 464.7L2377.4 461.2L2371.2 458.4L2368.9 451.5L2366.0 445.7L2364.3 438.2L2366.6 431.2L2368.9 427.2L2368.9 422.5L2371.7 422.5L2374.6 427.2L2380.3 430.1L2383.1 431.2L2386.0 437.0L2388.8 439.4L2394.5 440.5L2397.3 450.9L2400.2 448.6L2407.6 441.1L2413.3 438.8L2420.1 435.3L2421.2 431.8L2421.8 422.5L2420.1 414.9L2417.2 410.7L2411.6 404.8L2406.4 398.9L2401.9 392.3L2401.3 388.7L2404.2 383.8L2407.0 379.6L2411.6 375.9L2414.4 374.7L2417.2 374.1L2423.5 374.1L2424.6 375.3L2425.8 381.4L2428.6 382.0L2428.6 376.5L2434.3 374.7L2440.0 372.9L2445.7 370.4L2449.1 369.8L2454.2 367.3L2462.8 366.1L2468.4 361.8L2471.9 356.8L2477.0 353.0L2479.8 346.7L2482.7 342.9L2483.8 337.2L2488.4 332.0L2493.5 322.3L2490.1 319.0L2492.9 314.4L2489.5 309.0L2487.8 303.6L2485.5 298.9L2481.5 291.4L2478.7 288.6L2484.4 280.9L2487.8 277.4L2496.9 271.7L2495.2 269.6L2486.6 267.4L2479.8 271.7L2477.0 271.0L2476.4 266.0L2469.6 259.4L2474.1 257.2L2479.8 252.8L2485.5 249.1L2491.2 245.4L2495.2 247.6L2489.5 255.0L2489.5 260.2L2494.6 257.2L2501.4 253.6L2507.1 252.1L2511.1 254.3L2513.4 260.2L2511.1 266.0L2512.8 268.1L2517.9 268.1L2520.2 273.1L2519.6 280.2L2518.5 290.0L2522.5 290.0L2531.0 287.9L2535.6 285.8L2536.7 280.2L2536.1 273.1L2531.0 263.8L2525.9 257.2L2525.3 252.8L2531.0 250.6L2537.8 244.6L2538.4 240.1L2543.5 234.0L2548.1 230.9L2552.6 227.0L2559.5 230.1L2568.0 223.8L2576.5 215.1L2583.4 206.2L2587.9 198.0L2592.5 188.8L2598.2 180.2L2599.3 170.6L2599.3 157.1L2604.4 149.7L2603.3 141.2L2595.3 133.6L2583.4 133.6L2579.4 125.8L2569.1 126.7L2577.7 115.8L2586.2 108.6L2599.3 92.8L2606.7 84.2L2614.6 77.5L2629.4 77.5L2639.1 78.6L2650.5 74.1L2657.9 76.4L2666.4 81.9L2678.9 78.6L2681.8 71.9L2692.0 52.1L2704.5 49.7L2711.9 49.7L2709.1 58.0L2715.9 66.2L2729.0 49.7L2734.7 41.2L2737.5 47.3L2728.4 61.5L2721.6 71.9L2711.9 79.7L2701.7 92.8L2693.2 95.0L2689.7 103.4L2686.9 113.7L2685.2 128.7L2687.5 147.8L2690.9 161.6L2698.8 155.2L2702.3 145.0L2710.2 133.6L2720.5 125.8L2722.7 113.7L2728.4 111.7L2726.2 99.2L2730.7 93.9L2737.5 81.9L2745.5 73.0L2758.6 65.0L2768.8 70.7L2781.3 59.2L2789.9 49.7L2804.1 39.9L2815.5 36.2L2820.0 43.6L2825.1 28.6L2835.4 14.3L2843.9 6.3L2858.1 17.0L2866.7 10.3L2880.9 2.2L2886.6 -9.0L2886.6 -160.9L1828.4 -160.9ZM1767.6 169.7L1774.4 167.9L1780.1 167.0L1788.6 164.3L1795.4 163.4L1805.7 161.6L1808.0 158.9L1804.6 155.2L1809.7 146.9L1807.4 143.1L1801.7 139.3L1799.4 131.6L1796.6 128.7L1792.6 124.8L1790.9 117.8L1785.8 113.7L1784.1 109.6L1788.6 103.4L1789.8 97.1L1781.8 96.0L1777.2 93.9L1782.4 86.3L1771.6 86.3L1768.7 92.8L1767.0 100.3L1765.9 106.5L1768.1 113.7L1772.1 118.8L1771.6 125.8L1779.5 124.8L1781.8 132.6L1782.9 139.3L1777.2 140.3L1773.3 145.0L1776.1 149.7L1770.4 155.2L1776.1 156.2L1782.4 158.0L1776.1 159.8L1771.6 163.4L1767.6 169.7ZM1765.9 150.6L1765.3 143.1L1764.7 134.5L1768.1 128.7L1766.4 121.8L1758.5 119.8L1752.8 122.8L1751.1 129.7L1743.1 131.6L1743.7 139.3L1746.5 146.9L1741.4 153.4L1746.0 157.1L1753.4 155.2L1760.2 151.6L1765.9 150.6ZM1846.6 244.6L1852.3 241.6L1855.8 247.6L1854.6 257.2L1851.2 258.7L1847.8 258.7L1848.4 251.3ZM1848.9 240.1L1852.9 240.8L1854.6 234.7L1854.0 228.5L1848.9 233.2ZM1870.5 266.0L1876.8 264.5L1888.7 263.8L1885.9 271.0L1885.9 275.3L1881.4 273.1L1871.7 268.9ZM1933.7 283.0L1942.2 284.4L1949.6 285.1L1947.9 287.2L1939.4 287.6L1933.7 285.1ZM1983.8 288.6L1987.2 285.8L1996.8 282.3L1992.9 286.5L1991.1 288.6L1986.6 290.0ZM1813.7 254.3L1817.1 252.1L1819.9 253.6L1817.6 256.5L1815.4 255.0ZM1855.8 118.8L1861.4 117.8L1859.7 123.8L1856.3 122.8ZM1862.6 119.8L1865.4 114.7L1871.1 112.7L1870.5 120.8L1867.1 123.8ZM1903.0 103.4L1907.0 93.9L1905.8 101.3ZM559.3 204.6L568.4 201.3L563.2 192.1L566.6 176.7L567.8 155.2L566.6 140.3L562.7 130.7L561.0 138.4L558.1 157.1L560.4 170.6L559.8 187.9ZM548.4 240.8L555.3 237.8L561.0 234.7L567.2 236.3L574.0 229.3L581.4 226.2L578.0 219.9L571.2 219.9L562.7 210.3L559.3 208.7L557.5 216.7L556.4 224.6L550.7 226.2L548.4 232.4L548.4 240.8ZM557.0 240.8L559.3 249.8L559.8 255.0L557.0 261.6L554.1 263.8L553.6 273.9L551.9 281.6L548.4 287.2L545.6 285.1L541.6 290.0L534.2 289.3L531.4 290.0L530.2 292.0L527.4 296.2L523.4 297.5L521.1 292.7L516.0 289.3L508.6 291.4L502.9 294.1L497.2 294.1L496.7 291.4L501.8 289.3L506.9 283.7L514.3 283.7L522.8 283.0L526.3 278.1L529.7 271.0L533.1 273.9L539.9 269.6L545.6 263.8L548.4 255.0L548.4 247.6L550.2 242.3L557.0 240.8ZM505.8 299.6L508.1 302.3L515.4 298.9L518.3 295.5L516.6 292.0L511.5 292.0L506.3 294.8ZM490.4 298.9L494.4 294.8L497.2 294.8L501.2 298.9L501.8 305.7L498.4 312.4L495.0 314.4L492.7 312.4L493.3 306.3L490.4 303.0ZM435.2 365.5L436.9 357.4L440.4 352.4L445.5 353.0L443.2 362.4L439.2 372.3L435.8 368.0ZM2483.2 365.5L2484.9 357.4L2488.4 352.4L2493.5 353.0L2491.2 362.4L2487.2 372.3L2483.8 368.0ZM369.8 388.7L373.2 384.4L378.9 383.2L383.5 386.3L380.6 392.3L374.9 394.7L370.4 392.9ZM2417.8 388.7L2421.2 384.4L2426.9 383.2L2431.5 386.3L2428.6 392.3L2422.9 394.7L2418.4 392.9ZM206.0 464.7L205.4 453.2L207.1 444.0L212.8 449.7L217.9 457.2L214.5 464.7L207.7 466.4ZM2254.0 464.7L2253.4 453.2L2255.1 444.0L2260.8 449.7L2265.9 457.2L2262.5 464.7L2255.7 466.4ZM434.7 406.6L436.4 398.9L438.1 392.9L443.2 392.3L447.2 392.9L448.3 400.6L446.0 406.6L443.8 411.3L443.8 417.8L448.9 418.4L456.9 420.7L458.0 427.7L454.6 426.0L449.5 423.1L444.9 420.1L439.8 421.3L438.1 416.6L434.7 414.9ZM2482.7 406.6L2484.4 398.9L2486.1 392.9L2491.2 392.3L2495.2 392.9L2496.3 400.6L2494.0 406.6L2491.8 411.3L2491.8 417.8L2496.9 418.4L2504.9 420.7L2506.0 427.7L2502.6 426.0L2497.5 423.1L2492.9 420.1L2487.8 421.3L2486.1 416.6L2482.7 414.9ZM446.0 460.1L451.7 457.2L454.6 452.6L460.3 451.5L465.4 444.6L469.4 447.4L472.2 458.4L469.9 464.1L465.4 468.1L458.6 464.1L456.3 457.8L450.6 460.1ZM2494.0 460.1L2499.7 457.2L2502.6 452.6L2508.3 451.5L2513.4 444.6L2517.4 447.4L2520.2 458.4L2517.9 464.1L2513.4 468.1L2506.6 464.1L2504.3 457.8L2498.6 460.1ZM458.6 428.3L464.8 429.5L467.1 437.0L463.1 442.8L459.1 439.9L460.3 434.1ZM2506.6 428.3L2512.8 429.5L2515.1 437.0L2511.1 442.8L2507.1 439.9L2508.3 434.1ZM445.5 431.8L451.2 434.1L448.9 439.4L445.5 439.9ZM2493.5 431.8L2499.2 434.1L2496.9 439.4L2493.5 439.9ZM448.9 438.2L454.6 437.6L453.4 445.1L449.5 446.3ZM2496.9 438.2L2502.6 437.6L2501.4 445.1L2497.5 446.3ZM418.7 452.0L425.0 446.9L432.4 435.3L430.7 439.9L423.3 449.2L419.3 453.2ZM2466.7 452.0L2473.0 446.9L2480.4 435.3L2478.7 439.9L2471.3 449.2L2467.3 453.2ZM372.1 491.5L375.5 488.6L383.5 490.9L388.0 484.1L394.8 481.8L401.7 474.4L407.4 471.5L411.9 465.8L417.6 460.1L421.6 463.5L430.7 469.8L424.4 472.7L422.2 476.7L422.2 483.5L424.4 489.8L429.0 494.9L422.7 495.4L420.4 502.8L415.9 506.8L414.8 514.2L413.0 522.2L403.9 522.8L394.8 518.2L389.2 519.4L383.5 517.1L378.9 516.5L377.8 508.5L372.7 504.0L372.1 497.2ZM2420.1 491.5L2423.5 488.6L2431.5 490.9L2436.0 484.1L2442.8 481.8L2449.7 474.4L2455.4 471.5L2459.9 465.8L2465.6 460.1L2469.6 463.5L2478.7 469.8L2472.4 472.7L2470.2 476.7L2470.2 483.5L2472.4 489.8L2477.0 494.9L2470.7 495.4L2468.4 502.8L2463.9 506.8L2462.8 514.2L2461.0 522.2L2451.9 522.8L2442.8 518.2L2437.2 519.4L2431.5 517.1L2426.9 516.5L2425.8 508.5L2420.7 504.0L2420.1 497.2ZM294.2 468.1L301.0 470.4L306.7 470.4L312.4 477.2L319.8 483.5L325.4 488.6L329.4 491.5L335.1 497.2L340.8 502.8L346.5 510.2L352.2 514.2L355.0 518.2L353.9 527.3L354.5 533.1L346.5 533.6L340.8 527.3L334.0 522.8L326.6 514.2L322.6 505.7L318.0 498.9L313.5 490.3L306.7 485.8L299.8 479.5L295.3 474.4ZM2342.2 468.1L2349.0 470.4L2354.7 470.4L2360.4 477.2L2367.8 483.5L2373.4 488.6L2377.4 491.5L2383.1 497.2L2388.8 502.8L2394.5 510.2L2400.2 514.2L2403.0 518.2L2401.9 527.3L2402.5 533.1L2394.5 533.6L2388.8 527.3L2382.0 522.8L2374.6 514.2L2370.6 505.7L2366.0 498.9L2361.5 490.3L2354.7 485.8L2347.8 479.5L2343.3 474.4ZM350.5 538.8L355.0 533.6L360.7 534.2L368.1 535.9L377.8 539.3L384.6 537.6L392.0 539.3L397.7 539.9L402.8 543.9L403.4 549.7L394.8 547.4L383.5 546.8L374.9 544.5L366.4 544.5L357.9 542.2L351.6 539.3ZM2398.5 538.8L2403.0 533.6L2408.7 534.2L2416.1 535.9L2425.8 539.3L2432.6 537.6L2440.0 539.3L2445.7 539.9L2450.8 543.9L2451.4 549.7L2442.8 547.4L2431.5 546.8L2422.9 544.5L2414.4 544.5L2405.9 542.2L2399.6 539.3ZM402.8 546.2L407.4 546.2L410.2 548.0L406.8 550.3L403.4 548.0ZM2450.8 546.2L2455.4 546.2L2458.2 548.0L2454.8 550.3L2451.4 548.0ZM411.9 547.4L417.6 546.8L423.3 546.2L429.5 548.5L425.6 550.8L417.6 551.4L413.0 550.8ZM2459.9 547.4L2465.6 546.8L2471.3 546.2L2477.5 548.5L2473.6 550.8L2465.6 551.4L2461.0 550.8ZM433.5 548.5L440.4 548.0L448.9 546.8L451.7 548.0L443.2 550.8L434.7 550.8ZM2481.5 548.5L2488.4 548.0L2496.9 546.8L2499.7 548.0L2491.2 550.8L2482.7 550.8ZM429.0 554.3L439.2 556.6L431.8 556.6ZM2477.0 554.3L2487.2 556.6L2479.8 556.6ZM454.6 558.9L460.3 554.3L466.0 550.3L475.6 548.0L468.8 552.6L460.3 557.8ZM2502.6 558.9L2508.3 554.3L2514.0 550.3L2523.6 548.0L2516.8 552.6L2508.3 557.8ZM431.3 531.3L432.4 522.8L431.3 519.4L427.8 515.9L430.7 508.5L433.5 500.6L435.2 495.4L440.4 492.6L448.9 494.3L457.4 494.3L463.7 490.9L460.3 497.2L451.7 497.7L443.2 497.2L438.1 499.4L437.5 504.6L443.2 505.1L453.4 505.1L448.9 509.1L443.2 510.8L447.8 517.1L448.9 526.8L444.3 527.3L440.4 517.1L437.5 515.9L437.5 531.3ZM2479.3 531.3L2480.4 522.8L2479.3 519.4L2475.8 515.9L2478.7 508.5L2481.5 500.6L2483.2 495.4L2488.4 492.6L2496.9 494.3L2505.4 494.3L2511.7 490.9L2508.3 497.2L2499.7 497.7L2491.2 497.2L2486.1 499.4L2485.5 504.6L2491.2 505.1L2501.4 505.1L2496.9 509.1L2491.2 510.8L2495.8 517.1L2496.9 526.8L2492.3 527.3L2488.4 517.1L2485.5 515.9L2485.5 531.3ZM477.3 491.5L480.2 487.5L483.0 491.5L479.6 495.4L484.2 498.3L480.2 502.8L477.3 498.3ZM2525.3 491.5L2528.2 487.5L2531.0 491.5L2527.6 495.4L2532.2 498.3L2528.2 502.8L2525.3 498.3ZM480.2 518.2L491.6 517.1L496.1 521.6L485.9 519.9ZM2528.2 518.2L2539.6 517.1L2544.1 521.6L2533.9 519.9ZM468.2 518.2L473.4 517.1L475.6 520.5L469.9 521.1ZM2516.2 518.2L2521.4 517.1L2523.6 520.5L2517.9 521.1ZM497.2 507.4L502.9 502.3L511.5 504.0L515.4 505.7L516.6 514.2L522.8 518.8L528.5 513.1L535.9 508.5L545.6 511.9L554.1 514.8L562.7 518.8L571.2 521.6L576.9 526.2L581.4 529.6L585.4 534.2L591.1 534.8L592.8 538.8L588.3 541.6L585.4 544.5L591.1 548.5L595.1 550.3L599.6 553.7L604.8 557.8L608.2 558.9L602.5 559.5L594.0 557.8L588.3 557.8L582.6 550.3L574.0 543.9L568.4 546.8L567.2 552.0L559.8 552.6L554.1 552.0L545.6 546.2L537.1 547.4L535.9 542.8L539.9 538.8L535.9 531.3L525.7 526.2L520.0 525.1L511.5 522.8L507.5 518.8L505.8 514.8L501.2 515.9L509.8 512.5L504.6 511.9L498.4 508.5ZM595.7 532.5L602.5 531.3L608.2 529.6L613.9 527.3L618.4 523.9L616.7 531.3L609.9 535.3L602.5 535.3L596.2 534.2ZM609.9 514.8L616.7 518.2L622.4 525.6L619.6 526.8L612.7 519.4ZM631.5 529.6L638.9 538.8L636.6 539.3L632.1 533.6ZM642.3 537.6L648.0 542.2L650.8 545.1L646.3 543.9ZM653.7 543.4L661.7 548.5L659.4 550.3ZM659.9 552.6L666.8 556.0L662.2 556.6ZM665.6 549.1L670.8 555.4L669.0 556.0ZM699.2 586.3L703.2 590.5L700.3 591.0ZM685.0 617.4L693.5 622.2L702.0 630.2L699.2 630.8L687.8 622.2ZM760.6 601.1L767.5 599.9L768.0 604.7L761.2 605.3ZM769.2 594.6L776.0 593.4L772.0 597.0ZM400.0 627.1L401.7 629.6L403.9 626.5L409.1 624.7L415.9 619.8L421.0 620.4L426.7 618.0L431.8 615.6L440.4 613.1L443.8 607.7L447.2 604.1L447.8 598.2L451.7 595.2L454.6 599.4L456.3 593.4L460.3 589.3L463.7 584.0L467.7 583.4L469.9 581.0L473.9 579.3L479.0 582.8L481.3 585.1L485.9 586.3L489.8 585.7L488.1 582.2L492.7 575.8L493.3 572.3L496.1 571.1L500.1 569.9L505.8 568.8L506.3 565.9L511.5 567.6L517.2 568.8L522.8 569.9L525.7 568.8L530.8 570.5L528.5 574.6L525.1 577.5L522.8 585.1L528.5 589.9L535.4 593.4L539.9 597.0L545.6 601.1L551.3 601.7L554.1 597.0L556.4 589.3L557.5 577.5L557.5 572.3L559.8 565.9L562.7 561.2L564.9 567.6L568.4 571.7L568.4 577.5L574.0 582.2L578.6 585.7L579.2 592.2L581.4 597.6L583.1 604.1L584.3 610.1L590.5 612.5L598.5 618.6L601.9 625.3L608.2 631.4L609.9 637.6L615.0 641.3L619.6 647.0L623.0 650.1L623.0 656.4L623.5 662.8L625.8 669.9L625.2 675.8L623.0 681.0L622.4 685.6L619.6 694.3L615.6 699.1L612.7 705.2L610.5 710.0L606.5 717.7L605.3 723.3L604.8 730.4L598.5 732.6L592.8 733.3L588.3 737.6L584.3 742.0L579.7 738.4L576.3 736.2L571.2 737.6L568.4 739.8L561.5 736.9L557.0 736.9L553.0 734.0L547.3 729.0L546.2 723.3L543.9 718.4L539.9 717.0L539.9 712.8L537.6 706.6L535.9 700.4L534.2 705.9L533.7 712.8L530.2 714.2L525.7 711.4L522.8 712.1L521.1 709.3L517.2 701.1L515.4 697.7L511.5 693.7L505.8 692.3L498.4 689.0L488.7 689.6L477.3 693.7L468.8 694.3L459.1 698.4L456.3 704.5L446.0 705.2L434.7 705.2L426.1 711.4L420.4 713.5L414.8 712.8L409.1 709.3L406.8 708.6L406.2 703.2L409.6 702.5L410.8 695.7L410.2 689.0L407.4 682.3L405.7 675.8L403.9 670.6L401.1 662.8L397.7 657.1L396.6 652.0L399.4 643.8L397.7 637.6L399.4 631.4ZM2448.0 627.1L2449.7 629.6L2451.9 626.5L2457.1 624.7L2463.9 619.8L2469.0 620.4L2474.7 618.0L2479.8 615.6L2488.4 613.1L2491.8 607.7L2495.2 604.1L2495.8 598.2L2499.7 595.2L2502.6 599.4L2504.3 593.4L2508.3 589.3L2511.7 584.0L2515.7 583.4L2517.9 581.0L2521.9 579.3L2527.0 582.8L2529.3 585.1L2533.9 586.3L2537.8 585.7L2536.1 582.2L2540.7 575.8L2541.3 572.3L2544.1 571.1L2548.1 569.9L2553.8 568.8L2554.3 565.9L2559.5 567.6L2565.2 568.8L2570.8 569.9L2573.7 568.8L2578.8 570.5L2576.5 574.6L2573.1 577.5L2570.8 585.1L2576.5 589.9L2583.4 593.4L2587.9 597.0L2593.6 601.1L2599.3 601.7L2602.1 597.0L2604.4 589.3L2605.5 577.5L2605.5 572.3L2607.8 565.9L2610.7 561.2L2612.9 567.6L2616.4 571.7L2616.4 577.5L2622.0 582.2L2626.6 585.7L2627.2 592.2L2629.4 597.6L2631.1 604.1L2632.3 610.1L2638.5 612.5L2646.5 618.6L2649.9 625.3L2656.2 631.4L2657.9 637.6L2663.0 641.3L2667.6 647.0L2671.0 650.1L2671.0 656.4L2671.5 662.8L2673.8 669.9L2673.2 675.8L2671.0 681.0L2670.4 685.6L2667.6 694.3L2663.6 699.1L2660.7 705.2L2658.5 710.0L2654.5 717.7L2653.3 723.3L2652.8 730.4L2646.5 732.6L2640.8 733.3L2636.3 737.6L2632.3 742.0L2627.7 738.4L2624.3 736.2L2619.2 737.6L2616.4 739.8L2609.5 736.9L2605.0 736.9L2601.0 734.0L2595.3 729.0L2594.2 723.3L2591.9 718.4L2587.9 717.0L2587.9 712.8L2585.6 706.6L2583.9 700.4L2582.2 705.9L2581.7 712.8L2578.2 714.2L2573.7 711.4L2570.8 712.1L2569.1 709.3L2565.2 701.1L2563.4 697.7L2559.5 693.7L2553.8 692.3L2546.4 689.0L2536.7 689.6L2525.3 693.7L2516.8 694.3L2507.1 698.4L2504.3 704.5L2494.0 705.2L2482.7 705.2L2474.1 711.4L2468.4 713.5L2462.8 712.8L2457.1 709.3L2454.8 708.6L2454.2 703.2L2457.6 702.5L2458.8 695.7L2458.2 689.0L2455.4 682.3L2453.7 675.8L2451.9 670.6L2449.1 662.8L2445.7 657.1L2444.6 652.0L2447.4 643.8L2445.7 637.6L2447.4 631.4ZM575.2 753.9L582.6 756.9L588.3 756.2L595.7 755.4L595.7 763.7L593.4 773.0L588.3 776.2L582.6 775.4L578.0 766.0L575.2 758.4ZM734.5 708.6L739.0 712.8L743.6 717.7L746.4 722.6L750.4 724.0L752.7 729.0L758.9 733.3L764.6 731.1L767.5 732.6L764.6 738.4L764.1 742.8L758.4 745.7L756.1 752.4L749.3 760.7L745.3 758.4L747.6 752.4L745.3 747.2L740.7 743.5L745.3 738.4L745.8 730.4L743.6 723.3L739.0 716.3L733.9 710.0ZM734.5 752.4L737.3 757.7L743.0 758.4L743.6 762.2L739.0 769.9L735.0 776.2L727.6 780.9L724.8 787.3L723.1 794.6L716.8 799.5L710.6 800.3L702.0 797.9L699.2 793.8L700.9 788.9L706.6 783.3L710.6 779.3L718.0 773.8L723.7 769.1L727.1 762.2L731.1 755.4ZM-281.6 281.6L-284.4 290.7L-286.7 294.1L-291.2 296.8L-296.4 299.6L-300.9 304.3L-303.8 311.7L-303.2 318.3L-306.0 324.2L-313.4 332.7L-320.8 335.9L-325.4 340.4L-330.5 346.7L-332.2 353.0L-337.9 360.5L-340.7 368.6L-344.1 374.1L-345.3 379.0L-341.3 386.3L-340.7 395.9L-340.2 401.8L-341.9 406.6L-344.7 412.5L-347.6 415.4L-343.6 420.7L-343.6 424.2L-343.0 429.5L-337.9 432.4L-334.5 437.0L-330.5 439.9L-325.9 445.7L-323.1 449.7L-320.8 454.3L-313.4 460.1L-307.7 464.1L-302.0 469.2L-290.7 474.9L-282.1 472.1L-270.8 470.4L-265.1 471.5L-259.4 472.7L-249.1 468.7L-241.2 465.2L-233.8 464.1L-228.7 463.5L-222.4 464.7L-216.7 471.5L-213.9 475.5L-208.2 474.9L-199.6 473.8L-195.1 477.2L-192.2 484.1L-192.2 491.5L-195.1 497.2L-197.4 501.7L-198.5 504.0L-195.1 510.2L-188.3 517.1L-183.7 522.8L-179.7 528.5L-178.0 534.2L-174.6 542.8L-172.9 550.3L-171.8 557.2L-170.1 563.0L-170.6 567.6L-171.8 572.3L-176.3 577.5L-178.6 583.4L-180.9 591.0L-180.9 599.9L-176.9 608.9L-172.3 619.2L-167.2 628.3L-165.5 634.5L-163.8 647.0L-161.5 657.1L-158.7 664.7L-154.1 669.9L-150.2 678.4L-146.7 689.0L-143.9 697.7L-143.3 705.2L-142.8 708.0L-138.2 710.0L-134.2 711.4L-125.7 708.6L-120.0 705.9L-111.5 706.6L-102.4 705.9L-97.2 704.5L-91.6 700.4L-85.9 695.7L-80.2 689.0L-75.1 685.0L-71.6 678.4L-66.0 671.2L-63.1 669.3L-61.4 659.6L-62.5 653.3L-57.4 650.1L-51.7 645.7L-46.0 640.7L-46.0 634.5L-47.2 628.3L-48.9 622.2L-50.0 615.0L-43.2 608.9L-37.5 601.1L-29.0 598.2L-23.3 594.0L-17.6 586.3L-17.0 577.5L-17.6 565.9L-17.6 560.1L-22.2 548.5L-24.4 538.8L-26.1 531.3L-22.2 522.8L-19.3 515.9L-14.8 511.4L-11.9 509.7L-6.2 502.8L-0.5 497.2L9.7 488.6L16.5 481.2L23.9 474.4L27.9 468.7L33.6 457.2L39.3 445.7L42.1 439.4L43.8 432.4L39.3 431.8L33.6 435.3L25.1 436.5L16.5 438.2L8.0 439.9L2.3 440.5L-1.7 434.1L-5.7 428.3L-9.1 422.5L-14.8 416.6L-20.4 411.9L-23.3 410.1L-26.1 404.8L-29.0 395.9L-34.7 391.1L-36.4 386.3L-38.1 377.8L-40.4 370.4L-45.5 359.9L-48.9 353.0L-54.0 345.5L-56.9 338.5L-62.0 328.8L-63.1 321.6L-59.1 330.1L-56.3 335.3L-52.9 335.9L-51.2 330.7L-49.5 324.2L-52.9 312.4L-60.3 313.7L-64.2 312.4L-71.6 310.4L-77.9 313.0L-88.7 314.4L-94.4 311.7L-104.6 310.4L-111.5 307.7L-117.2 303.0L-125.7 301.6L-134.2 307.0L-136.5 317.0L-139.9 319.0L-145.6 315.7L-154.1 313.0L-159.8 311.0L-161.5 305.7L-172.9 301.6L-179.7 301.6L-184.3 299.6L-187.1 296.2L-190.5 295.5L-188.3 290.7L-185.4 285.8L-187.7 281.6L-187.7 277.4L-185.4 272.4L-190.0 271.7L-191.7 271.0L-199.1 273.9L-205.3 273.1L-212.2 273.1L-219.6 275.3L-230.9 274.6L-239.5 276.7L-248.0 280.9L-251.4 281.6L-256.5 285.8L-260.5 286.5L-265.1 285.1L-270.8 285.8L-276.4 283.7L-278.2 280.9ZM1766.4 281.6L1763.6 290.7L1761.3 294.1L1756.8 296.8L1751.6 299.6L1747.1 304.3L1744.2 311.7L1744.8 318.3L1742.0 324.2L1734.6 332.7L1727.2 335.9L1722.6 340.4L1717.5 346.7L1715.8 353.0L1710.1 360.5L1707.3 368.6L1703.9 374.1L1702.7 379.0L1706.7 386.3L1707.3 395.9L1707.8 401.8L1706.1 406.6L1703.3 412.5L1700.4 415.4L1704.4 420.7L1704.4 424.2L1705.0 429.5L1710.1 432.4L1713.5 437.0L1717.5 439.9L1722.1 445.7L1724.9 449.7L1727.2 454.3L1734.6 460.1L1740.3 464.1L1746.0 469.2L1757.3 474.9L1765.9 472.1L1777.2 470.4L1782.9 471.5L1788.6 472.7L1798.9 468.7L1806.8 465.2L1814.2 464.1L1819.3 463.5L1825.6 464.7L1831.3 471.5L1834.1 475.5L1839.8 474.9L1848.4 473.8L1852.9 477.2L1855.8 484.1L1855.8 491.5L1852.9 497.2L1850.6 501.7L1849.5 504.0L1852.9 510.2L1859.7 517.1L1864.3 522.8L1868.3 528.5L1870.0 534.2L1873.4 542.8L1875.1 550.3L1876.2 557.2L1877.9 563.0L1877.4 567.6L1876.2 572.3L1871.7 577.5L1869.4 583.4L1867.1 591.0L1867.1 599.9L1871.1 608.9L1875.7 619.2L1880.8 628.3L1882.5 634.5L1884.2 647.0L1886.5 657.1L1889.3 664.7L1893.9 669.9L1897.8 678.4L1901.3 689.0L1904.1 697.7L1904.7 705.2L1905.2 708.0L1909.8 710.0L1913.8 711.4L1922.3 708.6L1928.0 705.9L1936.5 706.6L1945.6 705.9L1950.8 704.5L1956.4 700.4L1962.1 695.7L1967.8 689.0L1972.9 685.0L1976.4 678.4L1982.0 671.2L1984.9 669.3L1986.6 659.6L1985.5 653.3L1990.6 650.1L1996.3 645.7L2002.0 640.7L2002.0 634.5L2000.8 628.3L1999.1 622.2L1998.0 615.0L2004.8 608.9L2010.5 601.1L2019.0 598.2L2024.7 594.0L2030.4 586.3L2031.0 577.5L2030.4 565.9L2030.4 560.1L2025.8 548.5L2023.6 538.8L2021.9 531.3L2025.8 522.8L2028.7 515.9L2033.2 511.4L2036.1 509.7L2041.8 502.8L2047.5 497.2L2057.7 488.6L2064.5 481.2L2071.9 474.4L2075.9 468.7L2081.6 457.2L2087.3 445.7L2090.1 439.4L2091.8 432.4L2087.3 431.8L2081.6 435.3L2073.1 436.5L2064.5 438.2L2056.0 439.9L2050.3 440.5L2046.3 434.1L2042.3 428.3L2038.9 422.5L2033.2 416.6L2027.6 411.9L2024.7 410.1L2021.9 404.8L2019.0 395.9L2013.3 391.1L2011.6 386.3L2009.9 377.8L2007.6 370.4L2002.5 359.9L1999.1 353.0L1994.0 345.5L1991.1 338.5L1986.0 328.8L1984.9 321.6L1988.9 330.1L1991.7 335.3L1995.1 335.9L1996.8 330.7L1998.5 324.2L1995.1 312.4L1987.7 313.7L1983.8 312.4L1976.4 310.4L1970.1 313.0L1959.3 314.4L1953.6 311.7L1943.4 310.4L1936.5 307.7L1930.8 303.0L1922.3 301.6L1913.8 307.0L1911.5 317.0L1908.1 319.0L1902.4 315.7L1893.9 313.0L1888.2 311.0L1886.5 305.7L1875.1 301.6L1868.3 301.6L1863.7 299.6L1860.9 296.2L1857.5 295.5L1859.7 290.7L1862.6 285.8L1860.3 281.6L1860.3 277.4L1862.6 272.4L1858.0 271.7L1856.3 271.0L1848.9 273.9L1842.7 273.1L1835.8 273.1L1828.4 275.3L1817.1 274.6L1808.5 276.7L1800.0 280.9L1796.6 281.6L1791.5 285.8L1787.5 286.5L1782.9 285.1L1777.2 285.8L1771.6 283.7L1769.8 280.9ZM32.5 568.8L35.9 577.5L38.7 587.5L36.4 594.0L33.6 601.1L31.9 610.1L27.9 619.2L23.9 631.4L19.9 646.3L13.7 648.2L9.1 650.1L4.0 647.0L0.6 639.5L-0.5 628.3L1.2 622.2L4.6 615.0L2.3 604.1L3.4 595.2L10.8 592.2L16.5 590.5L22.2 585.1L25.1 578.7L29.6 572.3ZM2080.5 568.8L2083.9 577.5L2086.7 587.5L2084.4 594.0L2081.6 601.1L2079.9 610.1L2075.9 619.2L2071.9 631.4L2067.9 646.3L2061.7 648.2L2057.1 650.1L2052.0 647.0L2048.6 639.5L2047.5 628.3L2049.2 622.2L2052.6 615.0L2050.3 604.1L2051.4 595.2L2058.8 592.2L2064.5 590.5L2070.2 585.1L2073.1 578.7L2077.6 572.3ZM55.2 427.7L62.0 427.7L58.1 429.5ZM2103.2 427.7L2110.0 427.7L2106.1 429.5ZM78.0 616.2L80.8 617.4L79.1 619.2ZM2126.0 616.2L2128.8 617.4L2127.1 619.2ZM66.0 622.2L69.4 622.8L67.7 624.7ZM2114.0 622.2L2117.4 622.8L2115.7 624.7ZM913.1 382.6L918.2 386.3L914.2 390.2ZM908.6 377.8L912.5 379.0L909.7 380.2ZM899.4 374.1L902.9 375.9L900.6 375.9Z"/></clipPath></defs><path fill="#bbead8" d="M844.3 0.8L855.6 14.3L872.7 15.6L884.1 17.0L885.2 27.3L875.6 32.4L864.2 34.9L858.5 43.6L854.5 53.3L861.3 63.8L875.6 70.7L878.4 78.6L879.5 86.3L895.5 88.5L906.8 84.2L898.3 100.3L886.9 113.7L869.9 124.8L884.1 119.8L895.5 115.8L906.8 107.6L918.2 97.1L926.8 87.4L935.3 68.5L939.3 79.7L946.7 76.4L955.2 68.5L966.6 61.5L980.8 70.7L995.0 71.9L1006.4 75.3L1020.6 87.4L1029.2 100.3L1037.7 113.7L1046.2 123.8L1057.0 128.7L1058.7 138.4L1066.1 147.8L1073.5 158.9L1070.1 166.1L1083.2 176.7L1090.6 184.5L1094.0 198.0L1094.6 208.7L1091.7 230.1L1093.4 248.4L1095.7 258.7L1103.1 267.4L1106.5 276.7L1113.9 290.7L1125.9 294.1L1132.7 300.9L1133.8 304.3L1137.2 311.0L1140.1 317.7L1145.8 324.2L1150.3 332.0L1145.2 335.3L1156.0 342.9L1161.7 354.3L1168.5 359.3L1174.8 366.1L1177.1 361.8L1172.5 357.4L1167.4 348.0L1161.1 335.3L1154.3 324.2L1147.5 311.0L1156.0 314.4L1161.7 324.2L1169.1 334.6L1177.6 349.3L1185.6 353.0L1194.7 364.3L1201.0 374.7L1198.7 381.4L1206.6 389.3L1212.3 394.1L1222.6 398.9L1231.7 403.0L1242.5 406.6L1251.0 409.5L1259.6 406.6L1265.2 407.8L1273.8 416.0L1282.3 420.1L1293.7 423.1L1301.7 424.2L1307.9 431.8L1311.9 438.2L1312.5 442.8L1318.2 445.1L1324.4 451.5L1330.7 453.2L1337.5 456.6L1342.6 458.4L1344.3 452.6L1347.7 449.2L1353.4 451.5L1356.3 454.3L1359.1 457.2L1360.8 451.5L1358.0 449.7L1353.4 446.3L1347.7 445.1L1340.3 449.2L1335.2 448.6L1330.1 445.1L1324.4 437.6L1323.3 434.1L1324.4 424.2L1326.7 413.7L1319.3 409.0L1310.8 408.4L1302.2 409.0L1296.5 409.0L1298.2 398.9L1300.5 392.9L1302.8 386.9L1306.2 376.5L1304.5 374.1L1296.5 374.7L1289.7 375.9L1285.7 378.4L1285.2 385.0L1279.5 392.9L1272.1 392.9L1263.0 394.7L1256.7 391.7L1253.3 388.7L1250.5 382.6L1247.0 377.8L1243.6 370.4L1244.2 362.4L1245.3 354.3L1247.0 347.4L1245.9 340.4L1246.5 335.3L1253.9 330.1L1260.7 325.5L1268.1 322.3L1276.6 323.6L1285.2 326.8L1292.6 327.5L1290.8 319.6L1299.4 318.3L1305.1 319.0L1313.6 321.6L1320.4 321.0L1326.1 326.2L1329.5 335.9L1334.6 345.5L1338.6 352.4L1342.6 351.2L1344.3 348.0L1344.3 341.7L1341.5 330.7L1337.5 321.0L1336.9 315.0L1339.2 307.7L1345.5 303.0L1350.6 297.5L1356.3 294.8L1364.2 289.3L1370.5 285.8L1368.8 276.7L1367.6 271.7L1370.5 266.0L1373.3 260.2L1373.9 259.4L1379.0 249.1L1379.0 246.9L1387.6 244.6L1391.0 243.1L1396.1 240.1L1401.8 238.5L1398.9 236.3L1396.7 233.2L1398.4 227.8L1404.6 222.3L1413.2 217.5L1418.8 214.3L1423.4 211.1L1432.5 207.9L1434.2 211.9L1425.7 216.7L1424.5 222.3L1430.2 224.6L1438.2 215.9L1448.4 211.1L1458.7 204.6L1456.4 196.3L1450.1 204.6L1444.4 207.1L1435.9 204.6L1433.1 201.3L1431.4 189.6L1434.8 180.2L1427.4 177.6L1420.0 178.5L1410.3 183.6L1402.9 194.7L1398.9 195.5L1404.6 187.1L1412.0 177.6L1418.8 176.7L1424.5 168.8L1435.9 168.8L1450.1 168.8L1461.5 165.2L1474.0 158.0L1481.4 149.7L1482.6 140.3L1472.9 128.7L1461.5 121.8L1450.1 109.6L1446.2 95.0L1438.8 84.2L1433.1 67.3L1427.4 75.3L1416.0 89.6L1405.8 83.1L1404.1 68.5L1401.8 59.2L1391.5 52.1L1381.9 44.8L1370.5 43.6L1357.4 41.2L1355.7 53.3L1359.1 65.0L1358.5 79.7L1363.1 98.2L1364.2 110.7L1357.4 123.8L1349.4 131.6L1351.7 145.0L1350.6 157.1L1342.0 158.9L1334.6 147.8L1331.8 143.1L1332.4 128.7L1319.3 121.8L1302.2 114.7L1293.7 105.5L1283.4 100.3L1273.8 101.3L1264.1 84.2L1261.3 71.9L1263.5 60.4L1269.8 49.7L1275.5 43.6L1284.0 33.7L1296.5 22.2L1303.9 14.3L1309.0 -7.6L1310.8 -65.7L1231.1 -234.3L1003.6 -234.3L832.9 -160.9L844.3 0.8ZM1450.1 -13.2L1444.4 2.2L1433.1 15.6L1429.1 31.2L1431.9 38.7L1427.4 44.8L1420.0 48.5L1408.6 44.8L1398.9 37.4L1390.4 28.6L1380.2 17.0L1367.6 18.3L1357.4 17.0L1353.4 4.9L1367.6 -11.8L1379.0 -33.9L1447.3 -65.7L1450.1 -13.2ZM1307.9 13.0L1325.0 18.3L1336.4 23.5L1343.8 26.1L1338.1 36.2L1325.0 43.6L1313.6 34.9L1305.1 26.1L1307.9 -4.7L1327.8 -7.6L1307.9 13.0ZM1322.1 36.2L1333.5 38.7L1336.4 44.8L1327.8 44.8L1322.1 36.2ZM1487.1 -33.9L1495.6 -19.0L1498.5 -4.7L1504.2 9.0L1507.0 19.6L1513.8 32.4L1518.4 44.8L1524.1 56.8L1529.8 61.5L1541.2 68.5L1550.8 73.0L1555.4 68.5L1558.2 59.2L1561.1 47.3L1565.0 36.2L1569.6 24.8L1572.4 11.7L1578.1 2.2L1586.7 -0.6L1595.2 -3.4L1606.6 -19.0L1629.3 -49.4L1686.2 -160.9L1487.1 -234.3L1487.1 -33.9ZM1674.8 -11.8L1717.5 -11.8L1722.6 6.3L1715.8 17.0L1706.1 24.8L1694.8 29.9L1683.4 27.3L1670.9 24.1L1674.8 20.9L1673.1 14.3L1674.8 -11.8ZM1316.4 372.3L1320.4 367.3L1327.8 366.1L1331.2 364.9L1339.2 364.9L1344.9 366.1L1353.4 369.2L1360.8 374.1L1369.9 377.2L1377.9 382.0L1375.6 384.4L1358.0 384.4L1360.2 379.6L1355.1 377.8L1348.9 374.1L1340.3 371.7L1334.6 370.4L1326.7 371.7L1319.3 372.9L1316.4 372.3ZM1376.2 393.5L1383.0 386.3L1385.8 384.4L1396.1 384.4L1402.9 386.9L1410.9 392.3L1404.6 393.5L1395.5 397.7L1391.5 394.7L1385.8 395.3L1376.2 393.5ZM1354.6 393.5L1362.0 392.9L1366.5 395.9L1360.8 397.1L1354.6 394.7ZM1417.1 392.9L1426.8 393.5L1426.2 395.9L1417.7 395.9ZM1360.2 450.9L1364.8 446.9L1370.5 440.5L1374.5 437.0L1377.9 435.9L1383.6 435.3L1389.3 430.1L1394.4 432.4L1392.7 437.6L1396.1 435.9L1400.6 434.1L1400.6 430.6L1404.6 434.1L1410.3 439.9L1419.4 439.4L1430.2 442.2L1435.9 439.4L1448.4 438.8L1444.4 441.7L1453.0 445.7L1455.8 451.5L1461.5 454.9L1470.0 461.2L1475.7 465.8L1487.1 466.4L1495.6 468.1L1502.5 472.1L1508.7 476.1L1512.1 485.8L1515.6 490.3L1512.7 498.9L1521.2 500.6L1524.1 504.6L1529.8 503.4L1538.3 505.7L1546.8 513.1L1552.5 513.7L1563.9 516.5L1575.3 517.1L1581.0 521.1L1589.5 527.3L1598.0 529.1L1599.8 531.3L1601.5 539.9L1601.5 545.7L1598.0 554.3L1592.4 560.1L1586.7 566.4L1581.0 574.6L1578.1 583.4L1578.1 595.2L1577.0 602.3L1574.2 611.3L1570.7 618.0L1566.8 625.3L1561.1 634.5L1554.2 634.5L1545.7 637.0L1536.6 640.7L1529.8 646.3L1523.5 653.3L1524.1 663.5L1522.4 669.9L1515.6 677.7L1511.6 685.6L1503.6 693.0L1500.8 699.1L1495.6 704.5L1491.7 710.0L1487.7 712.1L1480.3 712.1L1474.0 708.6L1467.8 705.2L1467.8 710.0L1474.0 714.9L1476.9 722.6L1472.9 734.0L1465.5 739.1L1453.0 740.6L1445.6 739.8L1446.2 747.9L1445.0 753.1L1437.0 756.9L1429.7 756.2L1433.1 765.3L1438.2 768.4L1431.9 770.7L1429.1 775.4L1428.5 785.7L1420.0 788.1L1415.4 797.9L1421.7 804.5L1425.7 810.4L1418.8 818.9L1414.9 827.7L1408.0 832.1L1407.5 842.9L1410.9 850.3L1405.8 852.2L1409.7 855.0L1412.0 859.7L1416.6 868.4L1428.5 873.3L1421.7 876.2L1410.3 879.2L1398.9 876.2L1390.4 869.3L1380.7 856.9L1375.6 849.4L1372.2 838.4L1370.5 825.0L1369.9 812.1L1374.5 802.0L1370.5 799.5L1376.2 789.7L1380.2 779.3L1383.6 775.4L1377.9 773.8L1378.5 763.7L1380.7 759.9L1380.7 748.7L1381.9 737.6L1381.3 728.3L1385.8 718.4L1389.8 709.3L1392.1 699.1L1393.2 689.0L1394.4 679.0L1393.8 669.3L1396.7 660.9L1398.9 650.1L1398.9 638.2L1400.6 625.3L1400.1 607.1L1393.8 602.3L1387.6 596.4L1379.0 591.6L1370.5 584.0L1365.9 577.5L1361.4 569.4L1356.3 560.1L1350.6 548.5L1346.0 540.5L1339.2 534.2L1337.5 526.8L1343.2 519.4L1346.0 514.2L1339.8 512.5L1340.3 505.7L1343.8 500.0L1344.9 495.4L1350.6 492.6L1351.7 485.8L1359.1 480.1L1360.2 474.4L1359.7 465.8L1356.8 458.4L1359.1 457.2L1360.2 450.9ZM1451.3 841.1L1461.5 841.1L1471.2 843.8L1464.4 850.3L1453.0 847.5ZM-219.6 -160.9L-171.2 -26.4L-176.9 -4.7L-185.4 11.7L-196.8 26.1L-208.2 37.4L-218.4 49.7L-219.6 66.2L-216.1 81.9L-212.7 89.6L-207.0 92.8L-199.6 89.6L-191.1 81.9L-187.7 73.0L-184.3 83.1L-184.3 88.5L-180.9 96.0L-176.3 108.6L-175.2 118.8L-167.2 119.8L-157.0 112.7L-154.7 106.5L-153.0 95.0L-154.1 87.4L-142.8 78.6L-143.3 67.3L-149.6 62.7L-150.2 53.3L-147.9 41.2L-139.9 28.6L-129.7 22.2L-125.7 13.0L-120.0 -2.0L-108.6 -2.0L-104.1 9.0L-108.6 15.6L-117.2 24.8L-125.7 34.9L-126.3 47.3L-126.8 59.2L-125.1 65.0L-120.0 70.7L-111.5 69.6L-105.8 68.5L-95.5 66.2L-85.9 65.0L-78.5 69.6L-76.2 71.9L-85.9 73.0L-88.7 76.4L-97.2 76.4L-107.5 77.5L-114.3 79.7L-114.9 86.3L-110.3 89.6L-109.2 101.3L-112.6 103.4L-116.0 102.4L-119.4 96.0L-125.1 99.2L-128.5 105.5L-128.0 116.8L-127.4 121.8L-134.8 125.8L-136.5 129.7L-141.6 129.7L-142.8 125.8L-148.4 125.8L-157.0 130.7L-167.2 134.5L-172.9 130.7L-179.7 131.6L-185.4 133.6L-186.6 130.7L-191.1 126.7L-191.1 118.8L-188.3 111.7L-189.4 105.5L-187.7 96.0L-194.0 101.3L-201.4 105.5L-201.9 108.6L-201.4 118.8L-199.1 123.8L-198.5 133.6L-201.4 138.4L-208.2 138.4L-213.9 138.4L-220.7 143.1L-221.8 147.8L-224.7 152.5L-228.7 158.0L-233.8 160.7L-237.8 162.5L-238.9 168.8L-242.3 171.5L-246.9 175.0L-254.8 176.7L-256.0 173.2L-258.8 173.2L-257.1 181.9L-265.1 181.1L-274.2 182.8L-272.5 189.6L-263.9 192.1L-260.5 195.5L-254.8 203.0L-254.8 210.3L-255.4 220.7L-257.1 225.4L-265.1 225.4L-276.4 224.6L-287.8 223.8L-295.2 224.6L-300.9 228.5L-298.6 234.7L-298.1 243.8L-299.2 251.3L-302.0 260.9L-298.1 264.5L-299.2 273.1L-290.7 271.7L-287.3 271.7L-283.8 276.7L-279.9 280.2L-273.0 275.3L-265.1 274.9L-260.5 275.3L-253.7 268.9L-252.0 263.8L-246.9 260.2L-249.7 255.0L-246.9 249.8L-242.9 246.1L-235.5 240.8L-229.8 237.0L-229.2 234.0L-230.9 228.5L-225.2 224.6L-217.3 226.2L-211.0 227.8L-206.5 223.1L-201.4 221.5L-197.4 217.5L-192.2 219.9L-188.3 228.5L-184.9 233.2L-178.0 238.5L-171.2 242.3L-167.2 245.4L-162.7 249.8L-158.7 251.3L-156.4 259.4L-158.7 266.0L-156.4 266.7L-153.6 263.1L-150.7 258.7L-150.2 248.4L-145.6 248.4L-142.8 250.6L-145.6 246.1L-151.9 243.1L-157.0 240.1L-156.4 237.0L-162.7 236.3L-167.2 232.4L-171.2 223.8L-178.0 216.7L-178.0 209.5L-174.0 207.1L-170.1 207.9L-170.6 211.9L-168.9 214.3L-165.5 210.3L-161.5 218.3L-157.5 224.6L-151.3 228.5L-145.0 231.6L-140.5 236.3L-137.6 240.1L-137.6 249.1L-134.2 253.6L-130.2 259.4L-128.0 263.8L-125.1 268.9L-124.6 274.6L-120.0 277.4L-117.2 276.7L-116.0 271.0L-118.3 268.9L-113.2 266.7L-111.5 264.5L-116.0 259.4L-118.9 255.8L-119.4 249.1L-117.7 246.9L-113.2 249.1L-109.8 245.4L-102.9 244.6L-98.4 244.6L-99.0 249.1L-91.6 248.4L-83.6 243.8L-83.0 242.3L-88.7 240.1L-91.6 233.2L-88.7 227.0L-85.3 219.1L-79.6 210.3L-73.4 200.5L-67.1 199.7L-63.1 203.8L-57.4 205.4L-63.1 209.5L-56.9 216.7L-51.7 215.1L-46.0 211.9L-40.4 210.3L-48.9 207.1L-47.8 201.3L-37.5 196.3L-29.0 194.7L-25.0 194.7L-30.7 199.7L-32.4 204.6L-30.1 210.3L-35.2 213.5L-31.8 218.3L-21.6 224.6L-11.9 232.4L-11.3 239.3L-17.6 243.8L-29.0 244.6L-37.5 243.1L-46.0 238.5L-54.6 236.3L-66.0 239.3L-77.3 242.3L-83.0 244.6L-91.6 249.1L-98.4 250.6L-96.7 256.5L-95.5 260.9L-93.3 266.7L-92.7 273.1L-87.6 275.3L-80.2 278.8L-73.9 275.3L-68.8 275.3L-61.4 279.5L-54.6 278.1L-48.9 275.3L-42.6 275.3L-43.8 280.2L-43.8 287.2L-46.0 292.7L-48.3 300.9L-51.2 308.3L-52.9 312.4L-49.5 324.2L-46.0 334.0L-40.4 346.1L-36.4 353.0L-29.0 361.8L-25.0 374.7L-20.4 383.8L-13.6 392.9L-7.4 404.8L-4.5 414.9L-2.2 423.6L-1.1 427.2L5.2 427.2L10.8 424.2L22.2 420.7L30.8 416.6L43.3 412.5L49.0 408.4L56.4 403.6L64.9 398.9L73.4 395.9L80.2 390.5L80.8 385.0L85.4 380.2L92.2 368.6L85.4 361.8L77.4 359.3L72.3 353.7L72.3 344.2L67.7 349.9L62.6 356.8L53.5 358.7L45.5 357.4L45.0 351.2L43.3 346.1L41.0 353.0L37.6 347.4L34.2 340.4L27.9 331.4L25.1 324.2L27.9 321.0L33.6 321.0L37.6 321.0L41.0 328.1L45.0 334.6L51.2 337.8L59.2 342.3L67.7 341.7L72.3 339.1L76.3 343.6L79.1 348.0L87.6 350.5L96.7 351.2L106.4 352.4L116.1 351.2L124.6 351.2L130.9 350.5L133.2 354.3L136.0 359.9L140.6 362.4L143.4 366.7L150.2 366.1L145.7 369.8L150.2 375.9L154.8 379.0L161.6 377.2L165.0 371.7L166.2 377.8L166.2 389.9L168.4 398.9L171.8 410.7L175.3 417.8L177.5 426.0L180.4 432.4L183.2 437.0L185.5 442.8L187.8 449.2L192.9 453.8L196.9 448.6L202.6 441.1L206.0 441.1L206.0 434.1L208.8 425.4L208.2 410.7L212.8 408.4L220.2 404.2L225.9 397.7L232.7 391.1L238.4 385.7L245.8 379.6L246.9 374.7L253.8 374.1L258.3 372.3L264.0 372.3L268.0 368.6L272.5 368.6L274.2 369.8L275.4 376.5L277.7 380.2L283.9 386.9L287.9 391.1L289.6 398.9L288.5 407.8L292.4 409.0L294.2 409.0L299.3 403.0L303.8 402.4L307.2 404.8L308.4 413.7L310.6 420.1L312.4 431.2L312.4 439.9L311.2 448.6L311.2 454.3L315.2 457.2L319.8 464.1L322.6 468.7L323.7 476.1L326.6 482.9L328.9 484.6L335.1 489.2L340.8 492.6L342.5 492.6L344.8 492.0L343.1 485.8L340.2 477.8L340.2 472.1L334.0 464.7L329.4 461.2L323.2 458.4L320.9 451.5L318.0 445.7L316.3 438.2L318.6 431.2L320.9 427.2L320.9 422.5L323.7 422.5L326.6 427.2L332.3 430.1L335.1 431.2L338.0 437.0L340.8 439.4L346.5 440.5L349.3 450.9L352.2 448.6L359.6 441.1L365.3 438.8L372.1 435.3L373.2 431.8L373.8 422.5L372.1 414.9L369.2 410.7L363.6 404.8L358.4 398.9L353.9 392.3L353.3 388.7L356.2 383.8L359.0 379.6L363.6 375.9L366.4 374.7L369.2 374.1L375.5 374.1L376.6 375.3L377.8 381.4L380.6 382.0L380.6 376.5L386.3 374.7L392.0 372.9L397.7 370.4L401.1 369.8L406.2 367.3L414.8 366.1L420.4 361.8L423.9 356.8L429.0 353.0L431.8 346.7L434.7 342.9L435.8 337.2L440.4 332.0L445.5 322.3L442.1 319.0L444.9 314.4L441.5 309.0L439.8 303.6L437.5 298.9L433.5 291.4L430.7 288.6L436.4 280.9L439.8 277.4L448.9 271.7L447.2 269.6L438.6 267.4L431.8 271.7L429.0 271.0L428.4 266.0L421.6 259.4L426.1 257.2L431.8 252.8L437.5 249.1L443.2 245.4L447.2 247.6L441.5 255.0L441.5 260.2L446.6 257.2L453.4 253.6L459.1 252.1L463.1 254.3L465.4 260.2L463.1 266.0L464.8 268.1L469.9 268.1L472.2 273.1L471.6 280.2L470.5 290.0L474.5 290.0L483.0 287.9L487.6 285.8L488.7 280.2L488.1 273.1L483.0 263.8L477.9 257.2L477.3 252.8L483.0 250.6L489.8 244.6L490.4 240.1L495.5 234.0L500.1 230.9L504.6 227.0L511.5 230.1L520.0 223.8L528.5 215.1L535.4 206.2L539.9 198.0L544.5 188.8L550.2 180.2L551.3 170.6L551.3 157.1L556.4 149.7L555.3 141.2L547.3 133.6L535.4 133.6L531.4 125.8L521.1 126.7L529.7 115.8L538.2 108.6L551.3 92.8L558.7 84.2L566.6 77.5L581.4 77.5L591.1 78.6L602.5 74.1L609.9 76.4L618.4 81.9L630.9 78.6L633.8 71.9L644.0 52.1L656.5 49.7L663.9 49.7L661.1 58.0L667.9 66.2L681.0 49.7L686.7 41.2L689.5 47.3L680.4 61.5L673.6 71.9L663.9 79.7L653.7 92.8L645.2 95.0L641.7 103.4L638.9 113.7L637.2 128.7L639.5 147.8L642.9 161.6L650.8 155.2L654.3 145.0L662.2 133.6L672.5 125.8L674.7 113.7L680.4 111.7L678.2 99.2L682.7 93.9L689.5 81.9L697.5 73.0L710.6 65.0L720.8 70.7L733.3 59.2L741.9 49.7L756.1 39.9L767.5 36.2L772.0 43.6L777.1 28.6L787.4 14.3L795.9 6.3L810.1 17.0L818.7 10.3L832.9 2.2L838.6 -9.0L838.6 -160.9L-219.6 -160.9ZM1828.4 -160.9L1876.8 -26.4L1871.1 -4.7L1862.6 11.7L1851.2 26.1L1839.8 37.4L1829.6 49.7L1828.4 66.2L1831.9 81.9L1835.3 89.6L1841.0 92.8L1848.4 89.6L1856.9 81.9L1860.3 73.0L1863.7 83.1L1863.7 88.5L1867.1 96.0L1871.7 108.6L1872.8 118.8L1880.8 119.8L1891.0 112.7L1893.3 106.5L1895.0 95.0L1893.9 87.4L1905.2 78.6L1904.7 67.3L1898.4 62.7L1897.8 53.3L1900.1 41.2L1908.1 28.6L1918.3 22.2L1922.3 13.0L1928.0 -2.0L1939.4 -2.0L1943.9 9.0L1939.4 15.6L1930.8 24.8L1922.3 34.9L1921.7 47.3L1921.2 59.2L1922.9 65.0L1928.0 70.7L1936.5 69.6L1942.2 68.5L1952.5 66.2L1962.1 65.0L1969.5 69.6L1971.8 71.9L1962.1 73.0L1959.3 76.4L1950.8 76.4L1940.5 77.5L1933.7 79.7L1933.1 86.3L1937.7 89.6L1938.8 101.3L1935.4 103.4L1932.0 102.4L1928.6 96.0L1922.9 99.2L1919.5 105.5L1920.0 116.8L1920.6 121.8L1913.2 125.8L1911.5 129.7L1906.4 129.7L1905.2 125.8L1899.6 125.8L1891.0 130.7L1880.8 134.5L1875.1 130.7L1868.3 131.6L1862.6 133.6L1861.4 130.7L1856.9 126.7L1856.9 118.8L1859.7 111.7L1858.6 105.5L1860.3 96.0L1854.0 101.3L1846.6 105.5L1846.1 108.6L1846.6 118.8L1848.9 123.8L1849.5 133.6L1846.6 138.4L1839.8 138.4L1834.1 138.4L1827.3 143.1L1826.2 147.8L1823.3 152.5L1819.3 158.0L1814.2 160.7L1810.2 162.5L1809.1 168.8L1805.7 171.5L1801.1 175.0L1793.2 176.7L1792.0 173.2L1789.2 173.2L1790.9 181.9L1782.9 181.1L1773.8 182.8L1775.5 189.6L1784.1 192.1L1787.5 195.5L1793.2 203.0L1793.2 210.3L1792.6 220.7L1790.9 225.4L1782.9 225.4L1771.6 224.6L1760.2 223.8L1752.8 224.6L1747.1 228.5L1749.4 234.7L1749.9 243.8L1748.8 251.3L1746.0 260.9L1749.9 264.5L1748.8 273.1L1757.3 271.7L1760.7 271.7L1764.2 276.7L1768.1 280.2L1775.0 275.3L1782.9 274.9L1787.5 275.3L1794.3 268.9L1796.0 263.8L1801.1 260.2L1798.3 255.0L1801.1 249.8L1805.1 246.1L1812.5 240.8L1818.2 237.0L1818.8 234.0L1817.1 228.5L1822.8 224.6L1830.7 226.2L1837.0 227.8L1841.5 223.1L1846.6 221.5L1850.6 217.5L1855.8 219.9L1859.7 228.5L1863.1 233.2L1870.0 238.5L1876.8 242.3L1880.8 245.4L1885.3 249.8L1889.3 251.3L1891.6 259.4L1889.3 266.0L1891.6 266.7L1894.4 263.1L1897.3 258.7L1897.8 248.4L1902.4 248.4L1905.2 250.6L1902.4 246.1L1896.1 243.1L1891.0 240.1L1891.6 237.0L1885.3 236.3L1880.8 232.4L1876.8 223.8L1870.0 216.7L1870.0 209.5L1874.0 207.1L1877.9 207.9L1877.4 211.9L1879.1 214.3L1882.5 210.3L1886.5 218.3L1890.5 224.6L1896.7 228.5L1903.0 231.6L1907.5 236.3L1910.4 240.1L1910.4 249.1L1913.8 253.6L1917.8 259.4L1920.0 263.8L1922.9 268.9L1923.4 274.6L1928.0 277.4L1930.8 276.7L1932.0 271.0L1929.7 268.9L1934.8 266.7L1936.5 264.5L1932.0 259.4L1929.1 255.8L1928.6 249.1L1930.3 246.9L1934.8 249.1L1938.2 245.4L1945.1 244.6L1949.6 244.6L1949.0 249.1L1956.4 248.4L1964.4 243.8L1965.0 242.3L1959.3 240.1L1956.4 233.2L1959.3 227.0L1962.7 219.1L1968.4 210.3L1974.6 200.5L1980.9 199.7L1984.9 203.8L1990.6 205.4L1984.9 209.5L1991.1 216.7L1996.3 215.1L2002.0 211.9L2007.6 210.3L1999.1 207.1L2000.2 201.3L2010.5 196.3L2019.0 194.7L2023.0 194.7L2017.3 199.7L2015.6 204.6L2017.9 210.3L2012.8 213.5L2016.2 218.3L2026.4 224.6L2036.1 232.4L2036.7 239.3L2030.4 243.8L2019.0 244.6L2010.5 243.1L2002.0 238.5L1993.4 236.3L1982.0 239.3L1970.7 242.3L1965.0 244.6L1956.4 249.1L1949.6 250.6L1951.3 256.5L1952.5 260.9L1954.7 266.7L1955.3 273.1L1960.4 275.3L1967.8 278.8L1974.1 275.3L1979.2 275.3L1986.6 279.5L1993.4 278.1L1999.1 275.3L2005.4 275.3L2004.2 280.2L2004.2 287.2L2002.0 292.7L1999.7 300.9L1996.8 308.3L1995.1 312.4L1998.5 324.2L2002.0 334.0L2007.6 346.1L2011.6 353.0L2019.0 361.8L2023.0 374.7L2027.6 383.8L2034.4 392.9L2040.6 404.8L2043.5 414.9L2045.8 423.6L2046.9 427.2L2053.2 427.2L2058.8 424.2L2070.2 420.7L2078.8 416.6L2091.3 412.5L2097.0 408.4L2104.4 403.6L2112.9 398.9L2121.4 395.9L2128.2 390.5L2128.8 385.0L2133.4 380.2L2140.2 368.6L2133.4 361.8L2125.4 359.3L2120.3 353.7L2120.3 344.2L2115.7 349.9L2110.6 356.8L2101.5 358.7L2093.5 357.4L2093.0 351.2L2091.3 346.1L2089.0 353.0L2085.6 347.4L2082.2 340.4L2075.9 331.4L2073.1 324.2L2075.9 321.0L2081.6 321.0L2085.6 321.0L2089.0 328.1L2093.0 334.6L2099.2 337.8L2107.2 342.3L2115.7 341.7L2120.3 339.1L2124.3 343.6L2127.1 348.0L2135.6 350.5L2144.7 351.2L2154.4 352.4L2164.1 351.2L2172.6 351.2L2178.9 350.5L2181.2 354.3L2184.0 359.9L2188.6 362.4L2191.4 366.7L2198.2 366.1L2193.7 369.8L2198.2 375.9L2202.8 379.0L2209.6 377.2L2213.0 371.7L2214.2 377.8L2214.2 389.9L2216.4 398.9L2219.8 410.7L2223.3 417.8L2225.5 426.0L2228.4 432.4L2231.2 437.0L2233.5 442.8L2235.8 449.2L2240.9 453.8L2244.9 448.6L2250.6 441.1L2254.0 441.1L2254.0 434.1L2256.8 425.4L2256.2 410.7L2260.8 408.4L2268.2 404.2L2273.9 397.7L2280.7 391.1L2286.4 385.7L2293.8 379.6L2294.9 374.7L2301.8 374.1L2306.3 372.3L2312.0 372.3L2316.0 368.6L2320.5 368.6L2322.2 369.8L2323.4 376.5L2325.7 380.2L2331.9 386.9L2335.9 391.1L2337.6 398.9L2336.5 407.8L2340.4 409.0L2342.2 409.0L2347.3 403.0L2351.8 402.4L2355.2 404.8L2356.4 413.7L2358.6 420.1L2360.4 431.2L2360.4 439.9L2359.2 448.6L2359.2 454.3L2363.2 457.2L2367.8 464.1L2370.6 468.7L2371.7 476.1L2374.6 482.9L2376.9 484.6L2383.1 489.2L2388.8 492.6L2390.5 492.6L2392.8 492.0L2391.1 485.8L2388.2 477.8L2388.2 472.1L2382.0 464.7L2377.4 461.2L2371.2 458.4L2368.9 451.5L2366.0 445.7L2364.3 438.2L2366.6 431.2L2368.9 427.2L2368.9 422.5L2371.7 422.5L2374.6 427.2L2380.3 430.1L2383.1 431.2L2386.0 437.0L2388.8 439.4L2394.5 440.5L2397.3 450.9L2400.2 448.6L2407.6 441.1L2413.3 438.8L2420.1 435.3L2421.2 431.8L2421.8 422.5L2420.1 414.9L2417.2 410.7L2411.6 404.8L2406.4 398.9L2401.9 392.3L2401.3 388.7L2404.2 383.8L2407.0 379.6L2411.6 375.9L2414.4 374.7L2417.2 374.1L2423.5 374.1L2424.6 375.3L2425.8 381.4L2428.6 382.0L2428.6 376.5L2434.3 374.7L2440.0 372.9L2445.7 370.4L2449.1 369.8L2454.2 367.3L2462.8 366.1L2468.4 361.8L2471.9 356.8L2477.0 353.0L2479.8 346.7L2482.7 342.9L2483.8 337.2L2488.4 332.0L2493.5 322.3L2490.1 319.0L2492.9 314.4L2489.5 309.0L2487.8 303.6L2485.5 298.9L2481.5 291.4L2478.7 288.6L2484.4 280.9L2487.8 277.4L2496.9 271.7L2495.2 269.6L2486.6 267.4L2479.8 271.7L2477.0 271.0L2476.4 266.0L2469.6 259.4L2474.1 257.2L2479.8 252.8L2485.5 249.1L2491.2 245.4L2495.2 247.6L2489.5 255.0L2489.5 260.2L2494.6 257.2L2501.4 253.6L2507.1 252.1L2511.1 254.3L2513.4 260.2L2511.1 266.0L2512.8 268.1L2517.9 268.1L2520.2 273.1L2519.6 280.2L2518.5 290.0L2522.5 290.0L2531.0 287.9L2535.6 285.8L2536.7 280.2L2536.1 273.1L2531.0 263.8L2525.9 257.2L2525.3 252.8L2531.0 250.6L2537.8 244.6L2538.4 240.1L2543.5 234.0L2548.1 230.9L2552.6 227.0L2559.5 230.1L2568.0 223.8L2576.5 215.1L2583.4 206.2L2587.9 198.0L2592.5 188.8L2598.2 180.2L2599.3 170.6L2599.3 157.1L2604.4 149.7L2603.3 141.2L2595.3 133.6L2583.4 133.6L2579.4 125.8L2569.1 126.7L2577.7 115.8L2586.2 108.6L2599.3 92.8L2606.7 84.2L2614.6 77.5L2629.4 77.5L2639.1 78.6L2650.5 74.1L2657.9 76.4L2666.4 81.9L2678.9 78.6L2681.8 71.9L2692.0 52.1L2704.5 49.7L2711.9 49.7L2709.1 58.0L2715.9 66.2L2729.0 49.7L2734.7 41.2L2737.5 47.3L2728.4 61.5L2721.6 71.9L2711.9 79.7L2701.7 92.8L2693.2 95.0L2689.7 103.4L2686.9 113.7L2685.2 128.7L2687.5 147.8L2690.9 161.6L2698.8 155.2L2702.3 145.0L2710.2 133.6L2720.5 125.8L2722.7 113.7L2728.4 111.7L2726.2 99.2L2730.7 93.9L2737.5 81.9L2745.5 73.0L2758.6 65.0L2768.8 70.7L2781.3 59.2L2789.9 49.7L2804.1 39.9L2815.5 36.2L2820.0 43.6L2825.1 28.6L2835.4 14.3L2843.9 6.3L2858.1 17.0L2866.7 10.3L2880.9 2.2L2886.6 -9.0L2886.6 -160.9L1828.4 -160.9ZM1767.6 169.7L1774.4 167.9L1780.1 167.0L1788.6 164.3L1795.4 163.4L1805.7 161.6L1808.0 158.9L1804.6 155.2L1809.7 146.9L1807.4 143.1L1801.7 139.3L1799.4 131.6L1796.6 128.7L1792.6 124.8L1790.9 117.8L1785.8 113.7L1784.1 109.6L1788.6 103.4L1789.8 97.1L1781.8 96.0L1777.2 93.9L1782.4 86.3L1771.6 86.3L1768.7 92.8L1767.0 100.3L1765.9 106.5L1768.1 113.7L1772.1 118.8L1771.6 125.8L1779.5 124.8L1781.8 132.6L1782.9 139.3L1777.2 140.3L1773.3 145.0L1776.1 149.7L1770.4 155.2L1776.1 156.2L1782.4 158.0L1776.1 159.8L1771.6 163.4L1767.6 169.7ZM1765.9 150.6L1765.3 143.1L1764.7 134.5L1768.1 128.7L1766.4 121.8L1758.5 119.8L1752.8 122.8L1751.1 129.7L1743.1 131.6L1743.7 139.3L1746.5 146.9L1741.4 153.4L1746.0 157.1L1753.4 155.2L1760.2 151.6L1765.9 150.6ZM1846.6 244.6L1852.3 241.6L1855.8 247.6L1854.6 257.2L1851.2 258.7L1847.8 258.7L1848.4 251.3ZM1848.9 240.1L1852.9 240.8L1854.6 234.7L1854.0 228.5L1848.9 233.2ZM1870.5 266.0L1876.8 264.5L1888.7 263.8L1885.9 271.0L1885.9 275.3L1881.4 273.1L1871.7 268.9ZM1933.7 283.0L1942.2 284.4L1949.6 285.1L1947.9 287.2L1939.4 287.6L1933.7 285.1ZM1983.8 288.6L1987.2 285.8L1996.8 282.3L1992.9 286.5L1991.1 288.6L1986.6 290.0ZM1813.7 254.3L1817.1 252.1L1819.9 253.6L1817.6 256.5L1815.4 255.0ZM1855.8 118.8L1861.4 117.8L1859.7 123.8L1856.3 122.8ZM1862.6 119.8L1865.4 114.7L1871.1 112.7L1870.5 120.8L1867.1 123.8ZM1903.0 103.4L1907.0 93.9L1905.8 101.3ZM559.3 204.6L568.4 201.3L563.2 192.1L566.6 176.7L567.8 155.2L566.6 140.3L562.7 130.7L561.0 138.4L558.1 157.1L560.4 170.6L559.8 187.9ZM548.4 240.8L555.3 237.8L561.0 234.7L567.2 236.3L574.0 229.3L581.4 226.2L578.0 219.9L571.2 219.9L562.7 210.3L559.3 208.7L557.5 216.7L556.4 224.6L550.7 226.2L548.4 232.4L548.4 240.8ZM557.0 240.8L559.3 249.8L559.8 255.0L557.0 261.6L554.1 263.8L553.6 273.9L551.9 281.6L548.4 287.2L545.6 285.1L541.6 290.0L534.2 289.3L531.4 290.0L530.2 292.0L527.4 296.2L523.4 297.5L521.1 292.7L516.0 289.3L508.6 291.4L502.9 294.1L497.2 294.1L496.7 291.4L501.8 289.3L506.9 283.7L514.3 283.7L522.8 283.0L526.3 278.1L529.7 271.0L533.1 273.9L539.9 269.6L545.6 263.8L548.4 255.0L548.4 247.6L550.2 242.3L557.0 240.8ZM505.8 299.6L508.1 302.3L515.4 298.9L518.3 295.5L516.6 292.0L511.5 292.0L506.3 294.8ZM490.4 298.9L494.4 294.8L497.2 294.8L501.2 298.9L501.8 305.7L498.4 312.4L495.0 314.4L492.7 312.4L493.3 306.3L490.4 303.0ZM435.2 365.5L436.9 357.4L440.4 352.4L445.5 353.0L443.2 362.4L439.2 372.3L435.8 368.0ZM2483.2 365.5L2484.9 357.4L2488.4 352.4L2493.5 353.0L2491.2 362.4L2487.2 372.3L2483.8 368.0ZM369.8 388.7L373.2 384.4L378.9 383.2L383.5 386.3L380.6 392.3L374.9 394.7L370.4 392.9ZM2417.8 388.7L2421.2 384.4L2426.9 383.2L2431.5 386.3L2428.6 392.3L2422.9 394.7L2418.4 392.9ZM206.0 464.7L205.4 453.2L207.1 444.0L212.8 449.7L217.9 457.2L214.5 464.7L207.7 466.4ZM2254.0 464.7L2253.4 453.2L2255.1 444.0L2260.8 449.7L2265.9 457.2L2262.5 464.7L2255.7 466.4ZM434.7 406.6L436.4 398.9L438.1 392.9L443.2 392.3L447.2 392.9L448.3 400.6L446.0 406.6L443.8 411.3L443.8 417.8L448.9 418.4L456.9 420.7L458.0 427.7L454.6 426.0L449.5 423.1L444.9 420.1L439.8 421.3L438.1 416.6L434.7 414.9ZM2482.7 406.6L2484.4 398.9L2486.1 392.9L2491.2 392.3L2495.2 392.9L2496.3 400.6L2494.0 406.6L2491.8 411.3L2491.8 417.8L2496.9 418.4L2504.9 420.7L2506.0 427.7L2502.6 426.0L2497.5 423.1L2492.9 420.1L2487.8 421.3L2486.1 416.6L2482.7 414.9ZM446.0 460.1L451.7 457.2L454.6 452.6L460.3 451.5L465.4 444.6L469.4 447.4L472.2 458.4L469.9 464.1L465.4 468.1L458.6 464.1L456.3 457.8L450.6 460.1ZM2494.0 460.1L2499.7 457.2L2502.6 452.6L2508.3 451.5L2513.4 444.6L2517.4 447.4L2520.2 458.4L2517.9 464.1L2513.4 468.1L2506.6 464.1L2504.3 457.8L2498.6 460.1ZM458.6 428.3L464.8 429.5L467.1 437.0L463.1 442.8L459.1 439.9L460.3 434.1ZM2506.6 428.3L2512.8 429.5L2515.1 437.0L2511.1 442.8L2507.1 439.9L2508.3 434.1ZM445.5 431.8L451.2 434.1L448.9 439.4L445.5 439.9ZM2493.5 431.8L2499.2 434.1L2496.9 439.4L2493.5 439.9ZM448.9 438.2L454.6 437.6L453.4 445.1L449.5 446.3ZM2496.9 438.2L2502.6 437.6L2501.4 445.1L2497.5 446.3ZM418.7 452.0L425.0 446.9L432.4 435.3L430.7 439.9L423.3 449.2L419.3 453.2ZM2466.7 452.0L2473.0 446.9L2480.4 435.3L2478.7 439.9L2471.3 449.2L2467.3 453.2ZM372.1 491.5L375.5 488.6L383.5 490.9L388.0 484.1L394.8 481.8L401.7 474.4L407.4 471.5L411.9 465.8L417.6 460.1L421.6 463.5L430.7 469.8L424.4 472.7L422.2 476.7L422.2 483.5L424.4 489.8L429.0 494.9L422.7 495.4L420.4 502.8L415.9 506.8L414.8 514.2L413.0 522.2L403.9 522.8L394.8 518.2L389.2 519.4L383.5 517.1L378.9 516.5L377.8 508.5L372.7 504.0L372.1 497.2ZM2420.1 491.5L2423.5 488.6L2431.5 490.9L2436.0 484.1L2442.8 481.8L2449.7 474.4L2455.4 471.5L2459.9 465.8L2465.6 460.1L2469.6 463.5L2478.7 469.8L2472.4 472.7L2470.2 476.7L2470.2 483.5L2472.4 489.8L2477.0 494.9L2470.7 495.4L2468.4 502.8L2463.9 506.8L2462.8 514.2L2461.0 522.2L2451.9 522.8L2442.8 518.2L2437.2 519.4L2431.5 517.1L2426.9 516.5L2425.8 508.5L2420.7 504.0L2420.1 497.2ZM294.2 468.1L301.0 470.4L306.7 470.4L312.4 477.2L319.8 483.5L325.4 488.6L329.4 491.5L335.1 497.2L340.8 502.8L346.5 510.2L352.2 514.2L355.0 518.2L353.9 527.3L354.5 533.1L346.5 533.6L340.8 527.3L334.0 522.8L326.6 514.2L322.6 505.7L318.0 498.9L313.5 490.3L306.7 485.8L299.8 479.5L295.3 474.4ZM2342.2 468.1L2349.0 470.4L2354.7 470.4L2360.4 477.2L2367.8 483.5L2373.4 488.6L2377.4 491.5L2383.1 497.2L2388.8 502.8L2394.5 510.2L2400.2 514.2L2403.0 518.2L2401.9 527.3L2402.5 533.1L2394.5 533.6L2388.8 527.3L2382.0 522.8L2374.6 514.2L2370.6 505.7L2366.0 498.9L2361.5 490.3L2354.7 485.8L2347.8 479.5L2343.3 474.4ZM350.5 538.8L355.0 533.6L360.7 534.2L368.1 535.9L377.8 539.3L384.6 537.6L392.0 539.3L397.7 539.9L402.8 543.9L403.4 549.7L394.8 547.4L383.5 546.8L374.9 544.5L366.4 544.5L357.9 542.2L351.6 539.3ZM2398.5 538.8L2403.0 533.6L2408.7 534.2L2416.1 535.9L2425.8 539.3L2432.6 537.6L2440.0 539.3L2445.7 539.9L2450.8 543.9L2451.4 549.7L2442.8 547.4L2431.5 546.8L2422.9 544.5L2414.4 544.5L2405.9 542.2L2399.6 539.3ZM402.8 546.2L407.4 546.2L410.2 548.0L406.8 550.3L403.4 548.0ZM2450.8 546.2L2455.4 546.2L2458.2 548.0L2454.8 550.3L2451.4 548.0ZM411.9 547.4L417.6 546.8L423.3 546.2L429.5 548.5L425.6 550.8L417.6 551.4L413.0 550.8ZM2459.9 547.4L2465.6 546.8L2471.3 546.2L2477.5 548.5L2473.6 550.8L2465.6 551.4L2461.0 550.8ZM433.5 548.5L440.4 548.0L448.9 546.8L451.7 548.0L443.2 550.8L434.7 550.8ZM2481.5 548.5L2488.4 548.0L2496.9 546.8L2499.7 548.0L2491.2 550.8L2482.7 550.8ZM429.0 554.3L439.2 556.6L431.8 556.6ZM2477.0 554.3L2487.2 556.6L2479.8 556.6ZM454.6 558.9L460.3 554.3L466.0 550.3L475.6 548.0L468.8 552.6L460.3 557.8ZM2502.6 558.9L2508.3 554.3L2514.0 550.3L2523.6 548.0L2516.8 552.6L2508.3 557.8ZM431.3 531.3L432.4 522.8L431.3 519.4L427.8 515.9L430.7 508.5L433.5 500.6L435.2 495.4L440.4 492.6L448.9 494.3L457.4 494.3L463.7 490.9L460.3 497.2L451.7 497.7L443.2 497.2L438.1 499.4L437.5 504.6L443.2 505.1L453.4 505.1L448.9 509.1L443.2 510.8L447.8 517.1L448.9 526.8L444.3 527.3L440.4 517.1L437.5 515.9L437.5 531.3ZM2479.3 531.3L2480.4 522.8L2479.3 519.4L2475.8 515.9L2478.7 508.5L2481.5 500.6L2483.2 495.4L2488.4 492.6L2496.9 494.3L2505.4 494.3L2511.7 490.9L2508.3 497.2L2499.7 497.7L2491.2 497.2L2486.1 499.4L2485.5 504.6L2491.2 505.1L2501.4 505.1L2496.9 509.1L2491.2 510.8L2495.8 517.1L2496.9 526.8L2492.3 527.3L2488.4 517.1L2485.5 515.9L2485.5 531.3ZM477.3 491.5L480.2 487.5L483.0 491.5L479.6 495.4L484.2 498.3L480.2 502.8L477.3 498.3ZM2525.3 491.5L2528.2 487.5L2531.0 491.5L2527.6 495.4L2532.2 498.3L2528.2 502.8L2525.3 498.3ZM480.2 518.2L491.6 517.1L496.1 521.6L485.9 519.9ZM2528.2 518.2L2539.6 517.1L2544.1 521.6L2533.9 519.9ZM468.2 518.2L473.4 517.1L475.6 520.5L469.9 521.1ZM2516.2 518.2L2521.4 517.1L2523.6 520.5L2517.9 521.1ZM497.2 507.4L502.9 502.3L511.5 504.0L515.4 505.7L516.6 514.2L522.8 518.8L528.5 513.1L535.9 508.5L545.6 511.9L554.1 514.8L562.7 518.8L571.2 521.6L576.9 526.2L581.4 529.6L585.4 534.2L591.1 534.8L592.8 538.8L588.3 541.6L585.4 544.5L591.1 548.5L595.1 550.3L599.6 553.7L604.8 557.8L608.2 558.9L602.5 559.5L594.0 557.8L588.3 557.8L582.6 550.3L574.0 543.9L568.4 546.8L567.2 552.0L559.8 552.6L554.1 552.0L545.6 546.2L537.1 547.4L535.9 542.8L539.9 538.8L535.9 531.3L525.7 526.2L520.0 525.1L511.5 522.8L507.5 518.8L505.8 514.8L501.2 515.9L509.8 512.5L504.6 511.9L498.4 508.5ZM595.7 532.5L602.5 531.3L608.2 529.6L613.9 527.3L618.4 523.9L616.7 531.3L609.9 535.3L602.5 535.3L596.2 534.2ZM609.9 514.8L616.7 518.2L622.4 525.6L619.6 526.8L612.7 519.4ZM631.5 529.6L638.9 538.8L636.6 539.3L632.1 533.6ZM642.3 537.6L648.0 542.2L650.8 545.1L646.3 543.9ZM653.7 543.4L661.7 548.5L659.4 550.3ZM659.9 552.6L666.8 556.0L662.2 556.6ZM665.6 549.1L670.8 555.4L669.0 556.0ZM699.2 586.3L703.2 590.5L700.3 591.0ZM685.0 617.4L693.5 622.2L702.0 630.2L699.2 630.8L687.8 622.2ZM760.6 601.1L767.5 599.9L768.0 604.7L761.2 605.3ZM769.2 594.6L776.0 593.4L772.0 597.0ZM400.0 627.1L401.7 629.6L403.9 626.5L409.1 624.7L415.9 619.8L421.0 620.4L426.7 618.0L431.8 615.6L440.4 613.1L443.8 607.7L447.2 604.1L447.8 598.2L451.7 595.2L454.6 599.4L456.3 593.4L460.3 589.3L463.7 584.0L467.7 583.4L469.9 581.0L473.9 579.3L479.0 582.8L481.3 585.1L485.9 586.3L489.8 585.7L488.1 582.2L492.7 575.8L493.3 572.3L496.1 571.1L500.1 569.9L505.8 568.8L506.3 565.9L511.5 567.6L517.2 568.8L522.8 569.9L525.7 568.8L530.8 570.5L528.5 574.6L525.1 577.5L522.8 585.1L528.5 589.9L535.4 593.4L539.9 597.0L545.6 601.1L551.3 601.7L554.1 597.0L556.4 589.3L557.5 577.5L557.5 572.3L559.8 565.9L562.7 561.2L564.9 567.6L568.4 571.7L568.4 577.5L574.0 582.2L578.6 585.7L579.2 592.2L581.4 597.6L583.1 604.1L584.3 610.1L590.5 612.5L598.5 618.6L601.9 625.3L608.2 631.4L609.9 637.6L615.0 641.3L619.6 647.0L623.0 650.1L623.0 656.4L623.5 662.8L625.8 669.9L625.2 675.8L623.0 681.0L622.4 685.6L619.6 694.3L615.6 699.1L612.7 705.2L610.5 710.0L606.5 717.7L605.3 723.3L604.8 730.4L598.5 732.6L592.8 733.3L588.3 737.6L584.3 742.0L579.7 738.4L576.3 736.2L571.2 737.6L568.4 739.8L561.5 736.9L557.0 736.9L553.0 734.0L547.3 729.0L546.2 723.3L543.9 718.4L539.9 717.0L539.9 712.8L537.6 706.6L535.9 700.4L534.2 705.9L533.7 712.8L530.2 714.2L525.7 711.4L522.8 712.1L521.1 709.3L517.2 701.1L515.4 697.7L511.5 693.7L505.8 692.3L498.4 689.0L488.7 689.6L477.3 693.7L468.8 694.3L459.1 698.4L456.3 704.5L446.0 705.2L434.7 705.2L426.1 711.4L420.4 713.5L414.8 712.8L409.1 709.3L406.8 708.6L406.2 703.2L409.6 702.5L410.8 695.7L410.2 689.0L407.4 682.3L405.7 675.8L403.9 670.6L401.1 662.8L397.7 657.1L396.6 652.0L399.4 643.8L397.7 637.6L399.4 631.4ZM2448.0 627.1L2449.7 629.6L2451.9 626.5L2457.1 624.7L2463.9 619.8L2469.0 620.4L2474.7 618.0L2479.8 615.6L2488.4 613.1L2491.8 607.7L2495.2 604.1L2495.8 598.2L2499.7 595.2L2502.6 599.4L2504.3 593.4L2508.3 589.3L2511.7 584.0L2515.7 583.4L2517.9 581.0L2521.9 579.3L2527.0 582.8L2529.3 585.1L2533.9 586.3L2537.8 585.7L2536.1 582.2L2540.7 575.8L2541.3 572.3L2544.1 571.1L2548.1 569.9L2553.8 568.8L2554.3 565.9L2559.5 567.6L2565.2 568.8L2570.8 569.9L2573.7 568.8L2578.8 570.5L2576.5 574.6L2573.1 577.5L2570.8 585.1L2576.5 589.9L2583.4 593.4L2587.9 597.0L2593.6 601.1L2599.3 601.7L2602.1 597.0L2604.4 589.3L2605.5 577.5L2605.5 572.3L2607.8 565.9L2610.7 561.2L2612.9 567.6L2616.4 571.7L2616.4 577.5L2622.0 582.2L2626.6 585.7L2627.2 592.2L2629.4 597.6L2631.1 604.1L2632.3 610.1L2638.5 612.5L2646.5 618.6L2649.9 625.3L2656.2 631.4L2657.9 637.6L2663.0 641.3L2667.6 647.0L2671.0 650.1L2671.0 656.4L2671.5 662.8L2673.8 669.9L2673.2 675.8L2671.0 681.0L2670.4 685.6L2667.6 694.3L2663.6 699.1L2660.7 705.2L2658.5 710.0L2654.5 717.7L2653.3 723.3L2652.8 730.4L2646.5 732.6L2640.8 733.3L2636.3 737.6L2632.3 742.0L2627.7 738.4L2624.3 736.2L2619.2 737.6L2616.4 739.8L2609.5 736.9L2605.0 736.9L2601.0 734.0L2595.3 729.0L2594.2 723.3L2591.9 718.4L2587.9 717.0L2587.9 712.8L2585.6 706.6L2583.9 700.4L2582.2 705.9L2581.7 712.8L2578.2 714.2L2573.7 711.4L2570.8 712.1L2569.1 709.3L2565.2 701.1L2563.4 697.7L2559.5 693.7L2553.8 692.3L2546.4 689.0L2536.7 689.6L2525.3 693.7L2516.8 694.3L2507.1 698.4L2504.3 704.5L2494.0 705.2L2482.7 705.2L2474.1 711.4L2468.4 713.5L2462.8 712.8L2457.1 709.3L2454.8 708.6L2454.2 703.2L2457.6 702.5L2458.8 695.7L2458.2 689.0L2455.4 682.3L2453.7 675.8L2451.9 670.6L2449.1 662.8L2445.7 657.1L2444.6 652.0L2447.4 643.8L2445.7 637.6L2447.4 631.4ZM575.2 753.9L582.6 756.9L588.3 756.2L595.7 755.4L595.7 763.7L593.4 773.0L588.3 776.2L582.6 775.4L578.0 766.0L575.2 758.4ZM734.5 708.6L739.0 712.8L743.6 717.7L746.4 722.6L750.4 724.0L752.7 729.0L758.9 733.3L764.6 731.1L767.5 732.6L764.6 738.4L764.1 742.8L758.4 745.7L756.1 752.4L749.3 760.7L745.3 758.4L747.6 752.4L745.3 747.2L740.7 743.5L745.3 738.4L745.8 730.4L743.6 723.3L739.0 716.3L733.9 710.0ZM734.5 752.4L737.3 757.7L743.0 758.4L743.6 762.2L739.0 769.9L735.0 776.2L727.6 780.9L724.8 787.3L723.1 794.6L716.8 799.5L710.6 800.3L702.0 797.9L699.2 793.8L700.9 788.9L706.6 783.3L710.6 779.3L718.0 773.8L723.7 769.1L727.1 762.2L731.1 755.4ZM-281.6 281.6L-284.4 290.7L-286.7 294.1L-291.2 296.8L-296.4 299.6L-300.9 304.3L-303.8 311.7L-303.2 318.3L-306.0 324.2L-313.4 332.7L-320.8 335.9L-325.4 340.4L-330.5 346.7L-332.2 353.0L-337.9 360.5L-340.7 368.6L-344.1 374.1L-345.3 379.0L-341.3 386.3L-340.7 395.9L-340.2 401.8L-341.9 406.6L-344.7 412.5L-347.6 415.4L-343.6 420.7L-343.6 424.2L-343.0 429.5L-337.9 432.4L-334.5 437.0L-330.5 439.9L-325.9 445.7L-323.1 449.7L-320.8 454.3L-313.4 460.1L-307.7 464.1L-302.0 469.2L-290.7 474.9L-282.1 472.1L-270.8 470.4L-265.1 471.5L-259.4 472.7L-249.1 468.7L-241.2 465.2L-233.8 464.1L-228.7 463.5L-222.4 464.7L-216.7 471.5L-213.9 475.5L-208.2 474.9L-199.6 473.8L-195.1 477.2L-192.2 484.1L-192.2 491.5L-195.1 497.2L-197.4 501.7L-198.5 504.0L-195.1 510.2L-188.3 517.1L-183.7 522.8L-179.7 528.5L-178.0 534.2L-174.6 542.8L-172.9 550.3L-171.8 557.2L-170.1 563.0L-170.6 567.6L-171.8 572.3L-176.3 577.5L-178.6 583.4L-180.9 591.0L-180.9 599.9L-176.9 608.9L-172.3 619.2L-167.2 628.3L-165.5 634.5L-163.8 647.0L-161.5 657.1L-158.7 664.7L-154.1 669.9L-150.2 678.4L-146.7 689.0L-143.9 697.7L-143.3 705.2L-142.8 708.0L-138.2 710.0L-134.2 711.4L-125.7 708.6L-120.0 705.9L-111.5 706.6L-102.4 705.9L-97.2 704.5L-91.6 700.4L-85.9 695.7L-80.2 689.0L-75.1 685.0L-71.6 678.4L-66.0 671.2L-63.1 669.3L-61.4 659.6L-62.5 653.3L-57.4 650.1L-51.7 645.7L-46.0 640.7L-46.0 634.5L-47.2 628.3L-48.9 622.2L-50.0 615.0L-43.2 608.9L-37.5 601.1L-29.0 598.2L-23.3 594.0L-17.6 586.3L-17.0 577.5L-17.6 565.9L-17.6 560.1L-22.2 548.5L-24.4 538.8L-26.1 531.3L-22.2 522.8L-19.3 515.9L-14.8 511.4L-11.9 509.7L-6.2 502.8L-0.5 497.2L9.7 488.6L16.5 481.2L23.9 474.4L27.9 468.7L33.6 457.2L39.3 445.7L42.1 439.4L43.8 432.4L39.3 431.8L33.6 435.3L25.1 436.5L16.5 438.2L8.0 439.9L2.3 440.5L-1.7 434.1L-5.7 428.3L-9.1 422.5L-14.8 416.6L-20.4 411.9L-23.3 410.1L-26.1 404.8L-29.0 395.9L-34.7 391.1L-36.4 386.3L-38.1 377.8L-40.4 370.4L-45.5 359.9L-48.9 353.0L-54.0 345.5L-56.9 338.5L-62.0 328.8L-63.1 321.6L-59.1 330.1L-56.3 335.3L-52.9 335.9L-51.2 330.7L-49.5 324.2L-52.9 312.4L-60.3 313.7L-64.2 312.4L-71.6 310.4L-77.9 313.0L-88.7 314.4L-94.4 311.7L-104.6 310.4L-111.5 307.7L-117.2 303.0L-125.7 301.6L-134.2 307.0L-136.5 317.0L-139.9 319.0L-145.6 315.7L-154.1 313.0L-159.8 311.0L-161.5 305.7L-172.9 301.6L-179.7 301.6L-184.3 299.6L-187.1 296.2L-190.5 295.5L-188.3 290.7L-185.4 285.8L-187.7 281.6L-187.7 277.4L-185.4 272.4L-190.0 271.7L-191.7 271.0L-199.1 273.9L-205.3 273.1L-212.2 273.1L-219.6 275.3L-230.9 274.6L-239.5 276.7L-248.0 280.9L-251.4 281.6L-256.5 285.8L-260.5 286.5L-265.1 285.1L-270.8 285.8L-276.4 283.7L-278.2 280.9ZM1766.4 281.6L1763.6 290.7L1761.3 294.1L1756.8 296.8L1751.6 299.6L1747.1 304.3L1744.2 311.7L1744.8 318.3L1742.0 324.2L1734.6 332.7L1727.2 335.9L1722.6 340.4L1717.5 346.7L1715.8 353.0L1710.1 360.5L1707.3 368.6L1703.9 374.1L1702.7 379.0L1706.7 386.3L1707.3 395.9L1707.8 401.8L1706.1 406.6L1703.3 412.5L1700.4 415.4L1704.4 420.7L1704.4 424.2L1705.0 429.5L1710.1 432.4L1713.5 437.0L1717.5 439.9L1722.1 445.7L1724.9 449.7L1727.2 454.3L1734.6 460.1L1740.3 464.1L1746.0 469.2L1757.3 474.9L1765.9 472.1L1777.2 470.4L1782.9 471.5L1788.6 472.7L1798.9 468.7L1806.8 465.2L1814.2 464.1L1819.3 463.5L1825.6 464.7L1831.3 471.5L1834.1 475.5L1839.8 474.9L1848.4 473.8L1852.9 477.2L1855.8 484.1L1855.8 491.5L1852.9 497.2L1850.6 501.7L1849.5 504.0L1852.9 510.2L1859.7 517.1L1864.3 522.8L1868.3 528.5L1870.0 534.2L1873.4 542.8L1875.1 550.3L1876.2 557.2L1877.9 563.0L1877.4 567.6L1876.2 572.3L1871.7 577.5L1869.4 583.4L1867.1 591.0L1867.1 599.9L1871.1 608.9L1875.7 619.2L1880.8 628.3L1882.5 634.5L1884.2 647.0L1886.5 657.1L1889.3 664.7L1893.9 669.9L1897.8 678.4L1901.3 689.0L1904.1 697.7L1904.7 705.2L1905.2 708.0L1909.8 710.0L1913.8 711.4L1922.3 708.6L1928.0 705.9L1936.5 706.6L1945.6 705.9L1950.8 704.5L1956.4 700.4L1962.1 695.7L1967.8 689.0L1972.9 685.0L1976.4 678.4L1982.0 671.2L1984.9 669.3L1986.6 659.6L1985.5 653.3L1990.6 650.1L1996.3 645.7L2002.0 640.7L2002.0 634.5L2000.8 628.3L1999.1 622.2L1998.0 615.0L2004.8 608.9L2010.5 601.1L2019.0 598.2L2024.7 594.0L2030.4 586.3L2031.0 577.5L2030.4 565.9L2030.4 560.1L2025.8 548.5L2023.6 538.8L2021.9 531.3L2025.8 522.8L2028.7 515.9L2033.2 511.4L2036.1 509.7L2041.8 502.8L2047.5 497.2L2057.7 488.6L2064.5 481.2L2071.9 474.4L2075.9 468.7L2081.6 457.2L2087.3 445.7L2090.1 439.4L2091.8 432.4L2087.3 431.8L2081.6 435.3L2073.1 436.5L2064.5 438.2L2056.0 439.9L2050.3 440.5L2046.3 434.1L2042.3 428.3L2038.9 422.5L2033.2 416.6L2027.6 411.9L2024.7 410.1L2021.9 404.8L2019.0 395.9L2013.3 391.1L2011.6 386.3L2009.9 377.8L2007.6 370.4L2002.5 359.9L1999.1 353.0L1994.0 345.5L1991.1 338.5L1986.0 328.8L1984.9 321.6L1988.9 330.1L1991.7 335.3L1995.1 335.9L1996.8 330.7L1998.5 324.2L1995.1 312.4L1987.7 313.7L1983.8 312.4L1976.4 310.4L1970.1 313.0L1959.3 314.4L1953.6 311.7L1943.4 310.4L1936.5 307.7L1930.8 303.0L1922.3 301.6L1913.8 307.0L1911.5 317.0L1908.1 319.0L1902.4 315.7L1893.9 313.0L1888.2 311.0L1886.5 305.7L1875.1 301.6L1868.3 301.6L1863.7 299.6L1860.9 296.2L1857.5 295.5L1859.7 290.7L1862.6 285.8L1860.3 281.6L1860.3 277.4L1862.6 272.4L1858.0 271.7L1856.3 271.0L1848.9 273.9L1842.7 273.1L1835.8 273.1L1828.4 275.3L1817.1 274.6L1808.5 276.7L1800.0 280.9L1796.6 281.6L1791.5 285.8L1787.5 286.5L1782.9 285.1L1777.2 285.8L1771.6 283.7L1769.8 280.9ZM32.5 568.8L35.9 577.5L38.7 587.5L36.4 594.0L33.6 601.1L31.9 610.1L27.9 619.2L23.9 631.4L19.9 646.3L13.7 648.2L9.1 650.1L4.0 647.0L0.6 639.5L-0.5 628.3L1.2 622.2L4.6 615.0L2.3 604.1L3.4 595.2L10.8 592.2L16.5 590.5L22.2 585.1L25.1 578.7L29.6 572.3ZM2080.5 568.8L2083.9 577.5L2086.7 587.5L2084.4 594.0L2081.6 601.1L2079.9 610.1L2075.9 619.2L2071.9 631.4L2067.9 646.3L2061.7 648.2L2057.1 650.1L2052.0 647.0L2048.6 639.5L2047.5 628.3L2049.2 622.2L2052.6 615.0L2050.3 604.1L2051.4 595.2L2058.8 592.2L2064.5 590.5L2070.2 585.1L2073.1 578.7L2077.6 572.3ZM55.2 427.7L62.0 427.7L58.1 429.5ZM2103.2 427.7L2110.0 427.7L2106.1 429.5ZM78.0 616.2L80.8 617.4L79.1 619.2ZM2126.0 616.2L2128.8 617.4L2127.1 619.2ZM66.0 622.2L69.4 622.8L67.7 624.7ZM2114.0 622.2L2117.4 622.8L2115.7 624.7ZM913.1 382.6L918.2 386.3L914.2 390.2ZM908.6 377.8L912.5 379.0L909.7 380.2ZM899.4 374.1L902.9 375.9L900.6 375.9Z"/><g clip-path="url(#lc)"><path fill="#ade7cf" d="M1864.0 0.0L1999.0 0.0L1999.0 88.0L1959.0 108.0L1919.0 118.0L1884.0 113.0L1864.0 68.0ZM1219.0 98.0L1289.0 138.0L1369.0 98.0L1449.0 108.0L1484.0 138.0L1469.0 168.0L1389.0 188.0L1299.0 193.0L1229.0 168.0ZM2389.0 428.0L2439.0 418.0L2499.0 438.0L2528.0 468.0L2528.0 568.0L2439.0 558.0L2369.0 528.0L2349.0 468.0ZM341.0 428.0L391.0 418.0L451.0 438.0L480.0 468.0L480.0 568.0L391.0 558.0L321.0 528.0L301.0 468.0ZM4437.0 428.0L4487.0 418.0L4547.0 438.0L4576.0 468.0L4576.0 568.0L4487.0 558.0L4417.0 528.0L4397.0 468.0ZM2182.0 0.0L2274.0 0.0L2269.0 68.0L2299.0 108.0L2269.0 138.0L2182.0 108.0ZM134.0 0.0L226.0 0.0L221.0 68.0L251.0 108.0L221.0 138.0L134.0 108.0ZM4230.0 0.0L4322.0 0.0L4317.0 68.0L4347.0 108.0L4317.0 138.0L4230.0 108.0ZM1709.0 408.0L1769.0 428.0L1849.0 433.0L1884.0 458.0L1849.0 468.0L1769.0 458.0L1719.0 438.0Z"/><path fill="#9de2c4" d="M1345.0 498.0L1369.0 480.0L1409.0 474.0L1449.0 480.0L1489.0 498.0L1524.0 513.0L1529.0 548.0L1509.0 573.0L1469.0 583.0L1429.0 580.0L1389.0 573.0L1359.0 553.0L1347.0 528.0ZM1999.0 0.0L2182.0 0.0L2189.0 48.0L2169.0 106.0L2099.0 118.0L2029.0 98.0L1999.0 68.0ZM-49.0 0.0L134.0 0.0L141.0 48.0L121.0 106.0L51.0 118.0L-19.0 98.0L-49.0 68.0ZM4047.0 0.0L4230.0 0.0L4237.0 48.0L4217.0 106.0L4147.0 118.0L4077.0 98.0L4047.0 68.0ZM2274.0 0.0L2527.0 0.0L2527.0 138.0L2449.0 143.0L2369.0 128.0L2299.0 108.0L2269.0 68.0ZM226.0 0.0L479.0 0.0L479.0 138.0L401.0 143.0L321.0 128.0L251.0 108.0L221.0 68.0ZM4322.0 0.0L4575.0 0.0L4575.0 138.0L4497.0 143.0L4417.0 128.0L4347.0 108.0L4317.0 68.0ZM1884.0 448.0L1929.0 440.0L1979.0 458.0L1994.0 498.0L1974.0 528.0L1919.0 530.0L1887.0 508.0ZM1029.0 70.0L1069.0 66.0L1109.0 88.0L1134.0 138.0L1119.0 168.0L1089.0 158.0L1064.0 128.0ZM2309.0 328.0L2349.0 333.0L2389.0 358.0L2409.0 408.0L2389.0 448.0L2349.0 428.0L2319.0 388.0ZM261.0 328.0L301.0 333.0L341.0 358.0L361.0 408.0L341.0 448.0L301.0 428.0L271.0 388.0ZM4357.0 328.0L4397.0 333.0L4437.0 358.0L4457.0 408.0L4437.0 448.0L4397.0 428.0L4367.0 388.0Z"/><path fill="#f8f4ee" d="M2067.6 172.3L2096.9 162.6L2139.3 151.1L2185.0 147.9L2217.5 138.1L2243.6 149.5L2256.7 165.8L2276.2 175.6L2295.8 178.9L2318.6 169.1L2357.7 162.6L2400.1 169.1L2455.6 172.3L2469.0 188.0L2481.0 208.0L2459.0 238.0L2445.8 250.6L2432.7 263.6L2413.2 279.9L2390.4 293.0L2357.7 302.8L2341.4 325.6L2308.8 328.8L2276.2 315.8L2250.2 302.8L2233.8 296.2L2230.6 322.3L2224.1 348.4L2201.2 361.4L2178.4 351.7L2155.6 345.1L2123.0 361.4L2144.0 373.0L2109.0 413.0L2059.0 433.0L2029.0 448.0L2069.0 458.0L2064.0 528.0L1989.0 513.0L1999.0 443.0L1958.0 443.0L1921.0 436.0L1884.6 431.0L1848.0 423.6L1811.3 418.8L1774.6 423.6L1738.0 414.0L1706.0 404.0L1669.0 398.0L1669.0 348.0L1709.0 323.0L1744.0 303.0L1769.0 298.0L1829.0 300.0L1862.0 296.0L1869.0 308.0L1969.0 308.0L2009.0 288.0L2029.0 266.0L2079.0 263.0L2067.0 228.0L2059.0 198.0ZM19.6 172.3L48.9 162.6L91.3 151.1L137.0 147.9L169.5 138.1L195.6 149.5L208.7 165.8L228.2 175.6L247.8 178.9L270.6 169.1L309.7 162.6L352.1 169.1L407.6 172.3L421.0 188.0L433.0 208.0L411.0 238.0L397.8 250.6L384.7 263.6L365.2 279.9L342.4 293.0L309.7 302.8L293.4 325.6L260.8 328.8L228.2 315.8L202.2 302.8L185.8 296.2L182.6 322.3L176.1 348.4L153.2 361.4L130.4 351.7L107.6 345.1L75.0 361.4L96.0 373.0L61.0 413.0L11.0 433.0L-19.0 448.0L21.0 458.0L16.0 528.0L-59.0 513.0L-49.0 443.0L-90.0 443.0L-127.0 436.0L-163.4 431.0L-200.0 423.6L-236.7 418.8L-273.4 423.6L-310.0 414.0L-342.0 404.0L-379.0 398.0L-379.0 348.0L-339.0 323.0L-304.0 303.0L-279.0 298.0L-219.0 300.0L-186.0 296.0L-179.0 308.0L-79.0 308.0L-39.0 288.0L-19.0 266.0L31.0 263.0L19.0 228.0L11.0 198.0ZM4115.6 172.3L4144.9 162.6L4187.3 151.1L4233.0 147.9L4265.5 138.1L4291.6 149.5L4304.7 165.8L4324.2 175.6L4343.8 178.9L4366.6 169.1L4405.7 162.6L4448.1 169.1L4503.6 172.3L4517.0 188.0L4529.0 208.0L4507.0 238.0L4493.8 250.6L4480.7 263.6L4461.2 279.9L4438.4 293.0L4405.7 302.8L4389.4 325.6L4356.8 328.8L4324.2 315.8L4298.2 302.8L4281.8 296.2L4278.6 322.3L4272.1 348.4L4249.2 361.4L4226.4 351.7L4203.6 345.1L4171.0 361.4L4192.0 373.0L4157.0 413.0L4107.0 433.0L4077.0 448.0L4117.0 458.0L4112.0 528.0L4037.0 513.0L4047.0 443.0L4006.0 443.0L3969.0 436.0L3932.6 431.0L3896.0 423.6L3859.3 418.8L3822.6 423.6L3786.0 414.0L3754.0 404.0L3717.0 398.0L3717.0 348.0L3757.0 323.0L3792.0 303.0L3817.0 298.0L3877.0 300.0L3910.0 296.0L3917.0 308.0L4017.0 308.0L4057.0 288.0L4077.0 266.0L4127.0 263.0L4115.0 228.0L4107.0 198.0ZM1097.0 168.0L1134.0 173.0L1169.0 180.0L1209.0 183.0L1231.0 188.0L1235.0 228.0L1231.0 268.0L1227.0 308.0L1231.0 338.0L1231.0 358.0L1219.0 373.0L1201.0 368.0L1179.0 348.0L1164.0 338.0L1144.0 318.0L1129.0 308.0L1117.0 288.0L1104.0 268.0L1097.0 238.0L1099.0 198.0L1094.0 168.0ZM1868.0 598.8L1909.0 593.0L1953.0 598.8L1985.7 635.4L1969.4 676.0L1928.8 700.3L1896.4 692.2L1872.0 635.4L1859.0 608.0ZM394.0 618.0L447.7 583.0L505.2 588.0L543.5 593.0L561.0 618.0L574.0 658.0L575.0 698.0L557.0 708.0L534.0 698.0L509.0 716.0L469.0 713.0L439.0 708.0L419.0 698.0L409.0 678.0L397.0 653.0ZM-1654.0 618.0L-1600.3 583.0L-1542.8 588.0L-1504.5 593.0L-1487.0 618.0L-1474.0 658.0L-1473.0 698.0L-1491.0 708.0L-1514.0 698.0L-1539.0 716.0L-1579.0 713.0L-1609.0 708.0L-1629.0 698.0L-1639.0 678.0L-1651.0 653.0ZM2442.0 618.0L2495.7 583.0L2553.2 588.0L2591.5 593.0L2609.0 618.0L2622.0 658.0L2623.0 698.0L2605.0 708.0L2582.0 698.0L2557.0 716.0L2517.0 713.0L2487.0 708.0L2467.0 698.0L2457.0 678.0L2445.0 653.0ZM1391.4 700.4L1416.5 707.6L1430.9 750.6L1434.4 768.5L1416.5 804.3L1413.0 840.2L1395.0 865.3L1384.3 822.3L1391.4 750.6ZM1352.0 546.3L1366.3 571.4L1391.4 596.5L1407.6 614.4L1413.0 657.4L1405.8 700.4L1395.0 700.4L1398.6 643.0L1380.7 600.0L1359.2 578.5L1344.8 549.9ZM1959.0 253.0L1999.0 246.0L2049.0 250.0L2054.0 268.0L2009.0 271.0L1969.0 270.0Z"/><path fill="#bbead8" d="M2188.0 250.6L2217.5 224.5L2260.0 214.7L2282.8 221.2L2276.2 237.5L2243.6 244.0L2217.5 260.4ZM140.0 250.6L169.5 224.5L212.0 214.7L234.8 221.2L228.2 237.5L195.6 244.0L169.5 260.4ZM4236.0 250.6L4265.5 224.5L4308.0 214.7L4330.8 221.2L4324.2 237.5L4291.6 244.0L4265.5 260.4ZM1999.0 438.0L2019.0 430.0L2037.0 443.0L2031.0 468.0L2009.0 483.0L1994.0 468.0Z"/><path fill="#cfd0cd" d="M1489.0 -12.0L1594.0 -12.0L1594.0 80.0L1489.0 80.0ZM1219.0 -2.0L1305.4 -2.0L1290.7 24.1L1267.9 40.4L1263.0 66.5L1251.6 63.2L1243.5 50.2L1219.0 51.8ZM1184.0 -2.0L1219.0 -2.0L1219.0 40.0L1201.0 46.0L1187.0 24.0ZM1023.0 2.0L1069.0 2.0L1100.0 48.0L1097.0 70.0L1069.0 63.0L1044.0 33.0ZM1305.0 -2.0L1439.0 -2.0L1439.0 48.0L1349.0 50.0L1309.0 36.0ZM1354.0 38.0L1409.0 40.0L1419.0 78.0L1406.0 86.0L1369.0 73.0L1357.0 63.0ZM924.0 73.0L959.0 52.0L999.0 50.0L1029.0 68.0L1059.0 98.0L1069.0 118.0L1061.0 120.0L1044.0 98.0L1009.0 70.0L969.0 63.0L929.0 83.0Z"/><path fill="#fcfcfc" d="M1514.0 -0.4L1574.3 -0.4L1569.4 22.5L1561.3 43.6L1554.8 66.5L1545.0 63.2L1528.7 51.8L1519.0 38.7L1512.4 11.0Z"/></g><path fill="#60d0e5" d="M22.2 207.9L27.9 204.6L32.5 200.5L42.1 196.3L53.5 198.0L54.6 203.8L45.0 210.3L43.3 217.5L50.7 230.1L52.4 236.3L58.1 240.1L53.5 247.6L54.6 256.5L58.6 271.0L47.8 274.6L37.6 271.7L30.8 267.4L30.2 260.2L33.0 252.8L38.2 248.4L33.6 244.6L27.9 237.8L22.8 230.1L19.9 222.3L22.2 216.7L18.8 214.3L20.5 208.7ZM2070.2 207.9L2075.9 204.6L2080.5 200.5L2090.1 196.3L2101.5 198.0L2102.6 203.8L2093.0 210.3L2091.3 217.5L2098.7 230.1L2100.4 236.3L2106.1 240.1L2101.5 247.6L2102.6 256.5L2106.6 271.0L2095.8 274.6L2085.6 271.7L2078.8 267.4L2078.2 260.2L2081.0 252.8L2086.2 248.4L2081.6 244.6L2075.9 237.8L2070.8 230.1L2067.9 222.3L2070.2 216.7L2066.8 214.3L2068.5 208.7ZM83.7 200.5L90.5 201.3L93.3 208.7L91.1 216.7L86.5 213.5L84.8 206.2ZM2131.7 200.5L2138.5 201.3L2141.3 208.7L2139.1 216.7L2134.5 213.5L2132.8 206.2ZM170.1 202.1L177.0 200.5L187.2 200.5L198.6 198.0L202.6 199.7L195.7 202.1L187.2 203.0L178.7 206.2L173.0 210.3ZM2218.1 202.1L2225.0 200.5L2235.2 200.5L2246.6 198.0L2250.6 199.7L2243.7 202.1L2235.2 203.0L2226.7 206.2L2221.0 210.3ZM342.5 156.2L348.2 156.2L357.9 146.9L368.1 138.4L375.5 121.8L374.9 115.8L369.8 123.8L360.7 138.4L349.3 149.7ZM2390.5 156.2L2396.2 156.2L2405.9 146.9L2416.1 138.4L2423.5 121.8L2422.9 115.8L2417.8 123.8L2408.7 138.4L2397.3 149.7ZM1276.1 198.8L1285.2 199.7L1297.7 193.8L1300.5 193.0L1307.9 200.5L1318.7 200.5L1317.0 192.1L1310.8 183.6L1296.5 184.5L1289.1 188.8ZM1300.5 238.5L1303.9 239.3L1308.5 231.6L1309.6 222.3L1314.2 212.7L1317.6 206.2L1307.9 205.4L1300.5 215.1L1300.5 228.5ZM1318.2 205.4L1325.5 206.2L1336.4 204.6L1342.0 208.7L1344.9 216.7L1337.5 214.3L1335.2 223.8L1331.2 228.5L1325.0 220.7L1326.1 212.7ZM1325.5 238.5L1336.4 238.5L1344.9 234.7L1351.1 229.3L1342.0 231.6L1330.7 236.3ZM1346.0 226.2L1356.3 225.4L1366.5 224.6L1364.8 219.1L1353.4 221.5L1347.7 223.1ZM1237.9 134.5L1247.0 137.4L1252.2 157.1L1249.3 167.0L1246.5 158.9L1240.8 147.8ZM1134.4 58.0L1145.8 59.2L1157.2 59.2L1168.5 43.6L1160.0 38.7L1142.9 52.1L1137.2 52.1ZM1980.9 505.7L1987.7 498.3L1994.0 498.9L1993.4 505.7L1990.6 514.2L1982.0 514.8ZM1966.1 519.4L1968.4 519.9L1973.5 537.1L1977.5 548.5L1974.1 549.7L1968.4 538.8L1966.1 528.5ZM1993.4 554.3L1996.3 560.1L1998.0 571.7L2000.8 582.2L1997.4 581.6L1995.1 568.8L1993.4 560.1ZM1402.9 588.1L1407.5 591.0L1405.2 594.0L1402.3 591.0ZM2000.0 0.0L2032.0 0.0L2029.0 13.0L2019.0 23.0L2009.0 18.0L2004.0 10.0ZM1974.0 52.0L1981.0 49.0L1989.0 60.0L1988.0 70.0L1979.0 70.0L1975.0 63.0ZM1997.0 39.0L2002.0 37.0L2009.0 48.0L2008.0 58.0L2001.0 56.0L1997.0 48.0Z"/><path d="M1117.3 179.3L1117.3 258.7L1148.1 287.2M1134.4 179.3L1134.4 218.3L1135.0 236.3L1093.4 236.3M1168.5 179.3L1168.5 273.1L1179.9 273.1L1214.0 273.1L1261.8 273.1M1151.5 236.3L1168.5 236.3L1168.5 212.7L1208.4 212.7L1208.4 243.8L1219.7 243.8L1219.7 273.1M1179.9 243.8L1179.9 312.4M1214.0 273.1L1214.0 307.7L1193.6 307.7M1208.4 179.3L1208.4 205.4L1250.5 205.4L1251.0 224.6L1208.4 228.5M1247.0 179.3L1250.5 205.4M1261.8 273.1L1261.8 246.9L1253.9 246.9L1219.7 251.3M1262.4 296.8L1231.1 290.0L1231.1 276.7L1214.0 276.7M1261.8 276.7L1288.0 276.7L1335.2 276.0L1368.8 276.0M1281.2 224.6L1251.0 224.6M1265.2 300.9L1281.7 300.9L1298.8 287.2L1320.4 287.2L1327.3 287.2M1296.5 318.3L1298.2 287.2M1316.4 314.4L1313.0 287.2M1301.7 314.4L1316.4 314.4L1339.2 316.3M1288.0 276.7L1281.2 246.9L1281.2 224.6M1302.2 238.5L1302.2 266.7M1317.6 238.5L1317.6 258.0M1342.0 236.3L1342.0 253.6L1368.8 253.6M1346.0 234.0L1371.6 236.3L1381.9 243.8M1383.0 212.7L1383.0 230.9L1391.5 241.6M1117.3 179.3L1117.3 70.7M1174.2 179.3L1174.2 70.7M1219.7 179.3L1219.7 70.7M1258.4 179.3L1258.4 144.1L1293.7 105.5M997.9 70.7L1219.7 70.7L1260.7 70.7M1094.6 70.7L1091.7 53.3L1071.8 28.6L1049.1 -11.8M1347.7 157.1L1347.7 41.2M1435.9 67.3L1418.8 92.8L1416.0 123.8L1433.1 133.6L1438.8 152.5L1475.2 157.1M1174.2 70.7L1219.7 22.2L1299.4 -49.4M485.9 585.7L485.9 690.3M537.1 595.2L537.1 653.3L554.1 653.3L554.1 734.0M485.9 653.3L537.1 653.3M554.1 672.5L599.6 669.3L625.2 667.3M554.1 705.9L571.2 719.8L594.0 726.9L604.8 730.4M1458.7 505.7L1481.4 514.2L1492.8 554.3L1512.7 556.0L1538.3 554.3L1561.1 551.4L1583.8 548.5M1492.8 554.3L1470.0 542.8L1435.9 542.8M1512.7 556.0L1512.7 586.3L1529.8 589.3L1541.2 610.1L1566.8 622.2M1468.9 601.1L1498.5 610.1L1509.9 631.4L1526.9 631.4L1546.8 634.5M1535.5 511.4L1538.3 554.3M1563.9 517.1L1563.9 551.4M93.3 113.7L127.5 70.7L150.2 -4.7M2141.3 113.7L2175.5 70.7L2198.2 -4.7M207.1 133.6L235.6 70.7L252.6 -4.7M2255.1 133.6L2283.6 70.7L2300.6 -4.7M320.9 152.5L332.3 92.8L349.3 -4.7M2368.9 152.5L2380.3 92.8L2397.3 -4.7M434.7 143.1L463.1 92.8L548.4 47.3M2482.7 143.1L2511.1 92.8L2596.4 47.3M8.0 152.5L36.4 113.7L53.5 59.2L42.1 -4.7M2056.0 152.5L2084.4 113.7L2101.5 59.2L2090.1 -4.7M-31.8 152.5L-9.1 123.8L8.0 70.7L25.1 22.2M2016.2 152.5L2038.9 123.8L2056.0 70.7L2073.1 22.2M309.5 231.6L303.8 266.0L264.0 280.2L207.1 283.7M2357.5 231.6L2351.8 266.0L2312.0 280.2L2255.1 283.7M343.6 239.3L343.6 280.2L326.6 300.9L306.7 314.4L315.2 340.4M2391.6 239.3L2391.6 280.2L2374.6 300.9L2354.7 314.4L2363.2 340.4M377.8 236.3L383.5 266.0L380.6 294.1L372.1 321.0L355.0 343.6M2425.8 236.3L2431.5 266.0L2428.6 294.1L2420.1 321.0L2403.0 343.6M394.8 251.3L411.9 280.2L417.6 307.7L406.2 334.0L394.8 353.0M2442.8 251.3L2459.9 280.2L2465.6 307.7L2454.2 334.0L2442.8 353.0M173.0 327.5L190.0 346.7L207.1 353.0L229.9 359.3L246.9 371.7M2221.0 327.5L2238.0 346.7L2255.1 353.0L2277.9 359.3L2294.9 371.7M167.3 371.7L184.4 389.9L195.7 404.8L207.1 419.6M2215.3 371.7L2232.4 389.9L2243.7 404.8L2255.1 419.6" stroke="#8a8a8a" stroke-width="1.3" stroke-dasharray="4 3" fill="none"/><path d="M1098.6 179.3L1258.4 179.3L1258.4 175.8L1260.7 181.1L1270.9 182.8L1290.3 187.9L1297.1 185.4L1317.0 197.2L1319.3 200.5L1324.4 203.8L1330.7 210.3L1331.2 228.5L1327.3 236.3L1330.7 238.5L1350.0 229.3L1349.4 225.4L1363.1 223.8L1366.5 219.1L1375.0 212.7L1393.2 212.7L1397.8 208.7L1401.8 198.8L1406.3 193.0L1412.0 193.8L1414.3 195.5L1414.3 207.1L1418.8 214.3M997.9 -100.6L997.9 67.3L1008.7 67.3L1017.8 79.7L1029.2 73.0L1040.5 87.4L1051.9 107.6L1060.4 114.7L1057.0 126.7M1133.8 304.3L1147.5 303.0L1146.9 304.3L1168.5 312.4L1184.5 312.4L1184.5 309.0L1194.1 309.0L1203.8 319.0L1208.4 325.5L1213.5 328.1L1217.5 322.3L1223.1 322.3L1229.4 332.0L1234.0 337.2L1236.2 344.2L1247.0 347.4M1275.5 416.6L1276.1 413.1L1278.3 407.2L1285.7 407.2L1280.0 400.1L1293.1 397.1L1297.7 392.9M1292.6 413.1L1298.2 409.5M1291.4 417.2L1296.5 419.6L1300.5 423.6M1306.8 423.6L1312.5 419.6L1318.2 414.9L1326.7 413.7M1312.5 436.5L1318.2 437.0L1323.8 437.6M1327.8 452.6L1328.4 448.6L1330.1 445.1M1356.8 458.9L1359.7 450.3M1394.4 432.4L1387.6 436.5L1385.3 443.4L1388.1 454.3L1401.2 460.1L1414.3 464.7L1415.4 478.4L1417.1 486.9L1419.4 493.2M1458.7 451.5L1454.7 457.2L1451.8 466.4L1457.5 470.4L1455.3 474.4L1435.9 478.4L1431.4 492.6L1419.4 493.2L1402.9 490.3L1404.6 506.3L1401.8 524.5L1385.3 529.6L1379.6 542.2L1385.8 550.3L1398.4 563.0L1404.6 562.4L1409.2 572.3L1404.1 587.5L1407.5 595.2L1404.6 601.1L1399.5 605.9M1404.6 601.1L1410.9 612.5L1412.0 624.7L1418.3 633.3L1410.3 643.8L1410.9 659.0L1403.5 672.5L1398.9 689.6L1401.2 699.7L1399.5 719.8L1395.0 734.0L1392.7 756.2L1391.0 775.4L1392.1 793.8L1388.1 812.1L1381.9 827.7L1388.7 843.8L1409.7 850.3M1404.1 587.5L1417.7 561.8L1428.5 556.0L1442.7 574.6L1457.0 578.7L1458.1 594.0L1471.2 601.1L1468.9 616.8L1470.6 629.0L1483.7 632.0L1489.4 650.7L1493.9 660.3L1482.6 666.0L1472.3 680.4L1481.4 685.6L1496.8 703.8M1468.9 616.8L1445.6 627.7L1434.2 633.9L1418.3 633.3M1472.3 680.4L1469.5 699.1L1467.8 705.2M1343.2 519.4L1356.3 516.5L1369.9 500.6L1359.1 497.7L1351.7 492.0M1401.8 524.5L1369.9 500.6M1475.7 465.8L1481.4 477.2L1490.0 486.9L1506.5 476.1M1492.8 467.5L1490.0 486.9M1750.5 335.9L1750.5 338.5L1772.7 353.0L1806.8 379.0L1818.8 389.9L1823.9 388.7L1833.0 387.5L1842.7 378.4L1868.3 362.4L1879.6 368.6L1890.5 363.0L1936.5 386.9L1936.5 383.8L1942.2 383.8L1942.2 371.7L2009.9 371.7M1942.2 371.7L1942.2 310.4M1854.0 319.6L1858.6 356.2L1867.7 362.4M1854.0 319.6L1865.4 300.3M1848.9 273.9L1846.6 290.0L1842.7 299.6L1854.0 319.6M1790.3 286.5L1793.2 307.0L1783.5 310.4L1779.0 317.0L1770.4 321.0L1750.5 329.4L1750.5 335.9M1703.3 375.9L1726.0 375.9L1725.5 366.7L1731.7 362.4L1731.7 346.7L1750.5 338.5M1731.7 362.4L1763.0 353.7L1768.7 404.8L1734.6 410.7L1730.6 416.0L1705.0 404.8M1768.7 404.8L1775.5 413.7M1823.9 388.7L1820.5 410.1L1801.1 414.3L1797.2 413.1L1782.9 421.9L1775.5 413.7M1820.5 410.1L1820.5 433.0L1805.1 437.0L1800.0 437.0L1784.1 437.0L1769.3 440.5L1754.5 441.7L1752.8 434.1L1735.1 428.9L1730.6 416.0M1890.5 363.0L1887.0 377.8L1884.8 407.8L1877.4 421.3L1870.0 424.8L1856.9 423.6L1844.4 423.1L1823.3 422.5L1820.5 433.0M1877.4 421.3L1882.5 431.2L1885.3 442.8L1879.6 445.7L1888.2 457.2L1905.2 454.3L1922.3 445.7L1930.3 437.6L1932.6 430.1L1924.6 427.7L1926.9 417.8L1924.6 410.1L1936.5 409.0L1936.5 386.9M1936.5 409.0L1930.3 437.6M2009.9 371.7L2007.6 392.9L2007.1 417.2L1993.4 435.9L1995.1 439.4L1987.2 431.2L1986.0 435.3M-117.7 437.6L-110.3 450.3L-91.6 470.4L-72.2 480.1L-55.1 477.2L-46.0 471.5L-37.5 460.1L-31.8 454.3L-20.4 451.5L-3.4 448.6L2.9 448.6L24.5 454.3L7.4 472.1L-9.6 477.2L-14.8 508.5M1930.3 437.6L1937.7 450.3L1956.4 470.4L1975.8 480.1L1992.9 477.2L2002.0 471.5L2010.5 460.1L2016.2 454.3L2027.6 451.5L2044.6 448.6L2050.9 448.6L2072.5 454.3L2055.4 472.1L2038.4 477.2L2033.2 508.5M-2.8 427.2L-10.2 437.0L-3.9 437.6L-1.7 445.7M2045.2 427.2L2037.8 437.0L2044.1 437.6L2046.3 445.7M2022.4 478.4L2002.0 471.5M1891.0 486.9L1905.8 480.1L1925.2 476.1L1937.7 472.1L1956.4 470.4M1854.0 486.9L1864.3 486.9L1891.0 486.9L1900.7 519.9L1894.4 533.6L1869.4 533.1M1975.8 480.1L1968.4 502.8L1966.1 517.1L1973.5 545.7L1976.4 549.1L1989.4 554.3L1993.4 565.9L1996.8 565.9L2002.0 568.8L2016.2 564.7L2029.8 560.1M1992.9 477.2L1996.3 505.7L2013.3 517.1L2023.0 526.2M1965.0 548.5L1942.2 564.1L1934.8 562.4L1925.2 572.8L1936.5 574.6L1925.7 595.2L1932.6 601.7M1870.0 534.2L1893.9 543.4L1900.7 546.2L1916.1 541.1L1925.7 563.0L1936.5 564.1M1867.1 599.9L1880.8 600.5L1918.9 605.3L1932.6 601.7L1943.4 602.9L1959.3 595.2L1972.9 589.9L1987.2 596.4L1986.6 620.4L1978.6 629.6L1967.3 629.6M1893.9 669.9L1913.8 668.6L1913.8 645.7L1913.8 628.3L1919.5 628.3L1919.5 604.1M1913.8 645.7L1945.1 649.5L1954.2 638.2L1967.3 629.6L1978.6 629.6L1981.5 652.6L1987.2 659.0M1724.3 448.6L1737.4 443.4L1741.4 451.5L1735.1 460.7M1751.6 456.1L1756.8 474.9M1784.1 437.0L1784.6 471.5M1800.0 437.0L1805.1 464.1M1815.4 464.1L1820.5 433.0M1848.4 473.8L1851.2 462.9L1862.6 460.1L1871.1 451.5L1877.4 439.9L1882.5 431.2M-40.4 305.7L-26.1 307.7L-9.1 313.0L6.9 326.8L23.4 330.7L27.9 330.7M2007.6 305.7L2021.9 307.7L2038.9 313.0L2054.9 326.8L2071.4 330.7L2075.9 330.7M2038.9 271.7L2034.4 290.7L2020.7 298.2L2007.6 305.7M-42.6 275.3L-31.8 273.9L-9.1 271.7L6.9 271.7L4.0 263.8L6.9 254.3M2005.4 275.3L2016.2 273.9L2038.9 271.7L2054.9 271.7L2052.0 263.8L2054.9 254.3M6.9 271.7L10.8 287.2L14.3 300.9L23.4 314.4L27.9 321.0M2054.9 271.7L2058.8 287.2L2062.3 300.9L2071.4 314.4L2075.9 321.0M66.6 367.3L47.8 389.9L31.3 392.3L17.7 400.1L-1.7 404.2M2114.6 367.3L2095.8 389.9L2079.3 392.3L2065.7 400.1L2046.3 404.2M47.8 389.9L54.1 404.2M2095.8 389.9L2102.1 404.2M45.5 357.4L66.0 367.3M2093.5 357.4L2114.0 367.3M6.9 254.3L25.1 263.1L30.2 263.1M2054.9 254.3L2073.1 263.1L2078.2 263.1M58.6 271.0L89.9 269.6L99.6 276.0L98.5 297.5L96.7 321.6L112.1 324.2L102.4 351.8M2106.6 271.0L2137.9 269.6L2147.6 276.0L2146.5 297.5L2144.7 321.6L2160.1 324.2L2150.4 351.8M99.6 276.0L118.9 271.0L137.7 271.7L147.4 268.9L158.8 266.7L178.1 273.1M2147.6 276.0L2166.9 271.0L2185.7 271.7L2195.4 268.9L2206.8 266.7L2226.1 273.1M98.5 297.5L116.1 321.0L129.7 321.6L146.2 311.7L155.9 294.1L157.0 280.2L178.1 273.1M2146.5 297.5L2164.1 321.0L2177.7 321.6L2194.2 311.7L2203.9 294.1L2205.0 280.2L2226.1 273.1M155.9 294.1L173.0 290.7L174.7 302.3L176.4 313.7L161.0 334.0L153.1 337.2L147.4 346.7L155.9 356.2L140.0 361.2M2203.9 294.1L2221.0 290.7L2222.7 302.3L2224.4 313.7L2209.0 334.0L2201.1 337.2L2195.4 346.7L2203.9 356.2L2188.0 361.2M1959.3 76.4L1957.6 95.0L1960.4 111.7L1975.8 117.8L1980.9 151.6L1995.7 158.9L2001.4 165.2L2017.3 170.6L2028.1 174.1L2017.3 195.5M1934.3 152.5L1933.7 134.5L1945.1 130.7L1951.3 116.8L1960.4 111.7M1934.3 152.5L1936.5 167.0L1928.6 178.5L1951.3 185.4L1960.4 186.2L1970.7 201.3M1936.5 167.0L1907.0 175.0L1885.3 162.5L1880.8 134.5M1884.2 161.6L1868.8 167.9L1878.5 181.9L1896.7 187.9L1928.6 178.5M1834.7 138.4L1838.7 151.6L1834.1 163.4L1823.9 171.5L1814.2 160.7M1834.1 163.4L1843.2 177.6L1846.6 180.2L1843.2 191.3L1859.7 197.2L1869.4 191.3L1874.0 181.1L1884.2 161.6M1859.7 197.2L1877.9 200.5L1892.7 197.2L1896.7 187.9M1838.7 204.6L1839.8 220.7L1842.7 222.3M1789.8 226.2L1804.0 230.1L1818.2 233.2M1760.2 271.7L1757.9 255.0L1761.3 236.3L1753.4 236.3L1750.5 235.5M1877.9 200.5L1887.0 207.1L1893.9 200.5L1908.1 205.4L1915.5 203.0L1930.3 188.8L1928.6 178.5M1951.3 185.4L1969.0 210.3M1927.4 217.5L1942.2 223.1L1958.7 222.3L1962.7 223.1M1908.1 205.4L1910.4 213.5L1927.4 217.5L1930.3 236.3L1947.9 241.6M1917.8 251.3L1930.8 241.6L1947.9 241.6L1950.2 238.5M1868.3 113.7L1865.4 81.9L1871.1 65.0L1868.3 53.3L1879.6 15.6L1882.5 -4.7M1920.6 -4.7L1934.8 -4.7L1967.8 15.6L1970.7 47.3L1958.2 65.0M-11.3 239.3L-0.5 243.1L8.0 242.3L17.1 243.1L28.5 237.8M2036.7 239.3L2047.5 243.1L2056.0 242.3L2065.1 243.1L2076.5 237.8M-20.4 225.4L-3.4 230.9L12.0 232.4L22.8 242.3M2027.6 225.4L2044.6 230.9L2060.0 232.4L2070.8 242.3M14.3 260.2L6.9 254.3L0.0 243.1M2062.3 260.2L2054.9 254.3L2048.0 243.1M19.9 192.1L25.1 189.6L31.3 201.3L16.5 183.6L21.1 167.0L38.2 156.2L62.6 161.6L79.1 162.5L100.7 163.4L93.3 152.5L99.0 138.4L121.8 127.7L144.5 119.8L169.6 135.5L187.2 133.6L194.6 140.3L207.1 162.5L227.0 161.6L240.1 175.0L248.6 178.5M2067.9 192.1L2073.1 189.6L2079.3 201.3L2064.5 183.6L2069.1 167.0L2086.2 156.2L2110.6 161.6L2127.1 162.5L2148.7 163.4L2141.3 152.5L2147.0 138.4L2169.8 127.7L2192.5 119.8L2217.6 135.5L2235.2 133.6L2242.6 140.3L2255.1 162.5L2275.0 161.6L2288.1 175.0L2296.6 178.5M248.6 178.5L262.3 172.3L275.4 164.3L305.5 154.3L310.6 166.1L334.0 166.1L356.7 167.9L369.2 176.7L389.2 175.0L402.2 168.8L415.9 171.5M2296.6 178.5L2310.3 172.3L2323.4 164.3L2353.5 154.3L2358.6 166.1L2382.0 166.1L2404.7 167.9L2417.2 176.7L2437.2 175.0L2450.2 168.8L2463.9 171.5M248.6 178.5L264.0 190.5L269.1 210.3L294.2 218.3L300.4 230.9L325.4 230.9L349.3 239.3L380.1 230.1L388.6 223.1L387.4 216.7L402.8 209.5L419.9 199.7L433.0 198.8L428.4 189.6L419.3 190.5L415.9 171.5M2296.6 178.5L2312.0 190.5L2317.1 210.3L2342.2 218.3L2348.4 230.9L2373.4 230.9L2397.3 239.3L2428.1 230.1L2436.6 223.1L2435.4 216.7L2450.8 209.5L2467.9 199.7L2481.0 198.8L2476.4 189.6L2467.3 190.5L2463.9 171.5M415.9 171.5L435.8 146.9L455.1 138.4L472.8 154.3L476.2 172.3L495.0 180.2L517.2 184.5L509.2 211.9L497.2 213.5L499.0 225.4L495.0 233.2M2463.9 171.5L2483.8 146.9L2503.1 138.4L2520.8 154.3L2524.2 172.3L2543.0 180.2L2565.2 184.5L2557.2 211.9L2545.2 213.5L2547.0 225.4L2543.0 233.2M459.1 252.1L468.2 244.6L481.9 237.0L491.0 229.3L495.0 233.2M2507.1 252.1L2516.2 244.6L2529.9 237.0L2539.0 229.3L2543.0 233.2M469.4 267.4L482.5 261.6M2517.4 267.4L2530.5 261.6M240.1 175.0L238.4 196.3L225.3 194.7L220.2 208.7L208.2 212.7L208.2 234.7L198.6 239.3L187.2 248.4L173.0 251.3L170.7 255.8L178.1 273.1M2288.1 175.0L2286.4 196.3L2273.3 194.7L2268.2 208.7L2256.2 212.7L2256.2 234.7L2246.6 239.3L2235.2 248.4L2221.0 251.3L2218.7 255.8L2226.1 273.1M64.9 212.7L70.6 241.6L81.4 232.4L92.8 233.2L99.0 217.5L104.7 224.6L127.5 229.3L130.3 236.3L138.3 243.1L145.1 240.8L155.9 234.0L167.3 231.6L174.1 226.2L208.2 234.7M2112.9 212.7L2118.6 241.6L2129.4 232.4L2140.8 233.2L2147.0 217.5L2152.7 224.6L2175.5 229.3L2178.3 236.3L2186.3 243.1L2193.1 240.8L2203.9 234.0L2215.3 231.6L2222.1 226.2L2256.2 234.7M52.4 237.8L64.9 237.0L85.4 230.1L99.0 243.8L107.6 256.5L121.8 268.1L130.3 270.3M2100.4 237.8L2112.9 237.0L2133.4 230.1L2147.0 243.8L2155.6 256.5L2169.8 268.1L2178.3 270.3M145.1 240.8L155.3 249.1L170.7 255.8M2193.1 240.8L2203.3 249.1L2218.7 255.8M178.1 273.1L194.6 283.7L200.9 296.8L203.7 304.3L200.3 313.7L208.8 319.0L215.6 318.3L228.7 327.5L241.2 334.6L252.6 334.6L257.2 338.5L275.4 335.3L289.6 326.2L299.3 325.5L306.1 332.0L310.6 340.4L313.5 347.4L306.7 358.0L315.2 371.0L322.0 375.3L330.6 369.2L334.5 368.0L359.0 366.7L366.4 374.7M2226.1 273.1L2242.6 283.7L2248.9 296.8L2251.7 304.3L2248.3 313.7L2256.8 319.0L2263.6 318.3L2276.7 327.5L2289.2 334.6L2300.6 334.6L2305.2 338.5L2323.4 335.3L2337.6 326.2L2347.3 325.5L2354.1 332.0L2358.6 340.4L2361.5 347.4L2354.7 358.0L2363.2 371.0L2370.0 375.3L2378.6 369.2L2382.5 368.0L2407.0 366.7L2414.4 374.7M208.8 319.0L212.8 331.4L229.9 337.8L252.6 344.2L253.8 354.3L256.6 371.7M2256.8 319.0L2260.8 331.4L2277.9 337.8L2300.6 344.2L2301.8 354.3L2304.6 371.7M258.3 341.0L275.9 341.7L279.4 371.7L277.7 379.6M2306.3 341.0L2323.9 341.7L2327.4 371.7L2325.7 379.6M275.4 335.3L303.8 335.9L293.6 342.3L290.2 351.8L283.3 359.3L282.2 369.8M2323.4 335.3L2351.8 335.9L2341.6 342.3L2338.2 351.8L2331.3 359.3L2330.2 369.8M309.5 382.6L321.5 381.4L327.7 386.9L326.0 398.3L333.4 396.5L347.6 405.4L352.2 417.8L338.0 418.4L334.5 430.1M2357.5 382.6L2369.5 381.4L2375.7 386.9L2374.0 398.3L2381.4 396.5L2395.6 405.4L2400.2 417.8L2386.0 418.4L2382.5 430.1M330.6 369.2L331.1 376.5L335.1 385.0L347.6 394.1L352.7 402.4L363.0 416.0L364.1 428.9L356.2 437.0L346.5 439.4M2378.6 369.2L2379.1 376.5L2383.1 385.0L2395.6 394.1L2400.7 402.4L2411.0 416.0L2412.1 428.9L2404.2 437.0L2394.5 439.4M338.0 418.4L363.6 417.2M2386.0 418.4L2411.6 417.2M312.4 439.9L311.8 428.3L316.3 419.6L310.6 412.5L314.1 403.0L307.2 392.3L309.5 382.6M2360.4 439.9L2359.8 428.3L2364.3 419.6L2358.6 412.5L2362.1 403.0L2355.2 392.3L2357.5 382.6M322.6 462.9L329.4 466.9L332.3 464.7M2370.6 462.9L2377.4 466.9L2380.3 464.7M375.5 488.6L383.5 493.2L403.4 491.5L409.1 477.2L421.6 476.1M2423.5 488.6L2431.5 493.2L2451.4 491.5L2457.1 477.2L2469.6 476.1M553.6 514.8L554.1 552.0M462.5 551.4L464.2 554.9M2510.5 551.4L2512.2 554.9" stroke="#4a4a4a" stroke-width="1.2" fill="none" stroke-linejoin="round"/><path d="M0 500.0H2528" stroke="#6f6f6f" stroke-width="2" stroke-dasharray="11.5 4.5" fill="none"/><path d="M842.0 0.0L721.0 139.4L776.5 184.8L777.7 509.3L892.4 510.3L892.4 489.7L874.8 489.7L874.8 467.6L912.0 467.6L955.0 566.6L927.0 568.0L927.0 547.0L842.9 547.0L827.2 561.4L819.9 588.0L819.9 783.0L776.5 839.0L776.5 878.0" stroke="#6e5e5e" stroke-width="1.6" stroke-dasharray="9 5" fill="none"/></svg></div>
<svg width="2600" height="1238" viewBox="0 0 2600 1238"><defs><clipPath id="mc"><rect x="31" y="332" width="2528" height="868"/></clipPath></defs><g clip-path="url(#mc)"><g font-size="17.6" fill="#fff" text-anchor="middle" stroke="#fff" stroke-width="5" stroke-linejoin="round" opacity="0.92"><text x="1727.0" y="347.5">Iceland</text><text x="1929.0" y="354.0">Sweden</text><text x="1879.0" y="397.0">Norway</text><text x="2367.0" y="382.5">Russia</text><text x="1241.5" y="465.0">Canada</text><text x="168.5" y="524.0">Kazakhstan</text><text x="2216.5" y="524.0">Kazakhstan</text><text x="371.4" y="536.0">Mongolia</text><text x="2419.4" y="536.0">Mongolia</text><text x="1939.0" y="481.5">Poland</text><text x="2016.6" y="510.7">Ukraine</text><text x="1890.5" y="512.7">Germany</text><text x="1846.0" y="543.0">France</text><text x="1901.5" y="564.0">Italy</text><text x="1812.7" y="575.0">Spain</text><text x="2034.8" y="597.5">Türkiye</text><text x="1227.0" y="591.0">United States</text><text x="583.4" y="595.4">Japan</text><text x="374.5" y="607.5">China</text><text x="2422.5" y="607.5">China</text><text x="506.7" y="615.6">South Korea</text><text x="2554.7" y="615.6">South Korea</text><text x="170.6" y="629.8">Afghanistan</text><text x="2218.6" y="629.8">Afghanistan</text><text x="2077.0" y="639.9">Iraq</text><text x="29.0" y="639.9">Iraq</text><text x="92.9" y="648.0">Iran</text><text x="175.6" y="666.0">Pakistan</text><text x="2223.6" y="666.0">Pakistan</text><text x="1842.0" y="671.0">Algeria</text><text x="1931.0" y="678.0">Libya</text><text x="2002.5" y="669.0">Egypt</text><text x="1248.5" y="698.4">Mexico</text><text x="2089.0" y="699.4">Saudi Arabia</text><text x="41.0" y="699.4">Saudi Arabia</text><text x="237.2" y="703.4">India</text><text x="2285.2" y="703.4">India</text><text x="359.3" y="721.6">Thailand</text><text x="2407.3" y="721.6">Thailand</text><text x="1823.0" y="734.7">Mali</text><text x="1889.5" y="734.7">Niger</text><text x="2004.5" y="739.8">Sudan</text><text x="1942.0" y="758.0">Chad</text><text x="1455.4" y="790.2">Venezuela</text><text x="2059.0" y="789.2">Ethiopia</text><text x="1905.6" y="783.0">Nigeria</text><text x="1400.0" y="815.5">Colombia</text><text x="2049.0" y="835.7">Kenya</text><text x="1962.0" y="846.8">DRC</text><text x="445.0" y="861.0">Indonesia</text><text x="2493.0" y="861.0">Indonesia</text><text x="621.7" y="865.0">Papua New</text><text x="621.7" y="883.0">Guinea</text><text x="2044.0" y="874.0">Tanzania</text><text x="1516.0" y="887.0">Brazil</text><text x="1399.0" y="901.3">Peru</text><text x="1926.0" y="909.3">Angola</text><text x="1464.5" y="934.6">Bolivia</text><text x="2105.5" y="961.8">Madagascar</text><text x="57.5" y="961.8">Madagascar</text><text x="1923.0" y="949.7">Namibia</text><text x="1970.0" y="974.0">Botswana</text><text x="548.0" y="985.0">Australia</text><text x="1432.0" y="996.0">Chile</text><text x="1944.0" y="1040.5">South Africa</text><text x="1478.6" y="1079.0">Argentina</text><text x="731.8" y="1081.0">New</text><text x="731.8" y="1098.0">Zealand</text></g><g font-size="17.6" fill="#111" text-anchor="middle" stroke="#111" stroke-width="0.3"><text x="1727.0" y="347.5">Iceland</text><text x="1929.0" y="354.0">Sweden</text><text x="1879.0" y="397.0">Norway</text><text x="2367.0" y="382.5">Russia</text><text x="1241.5" y="465.0">Canada</text><text x="168.5" y="524.0">Kazakhstan</text><text x="2216.5" y="524.0">Kazakhstan</text><text x="371.4" y="536.0">Mongolia</text><text x="2419.4" y="536.0">Mongolia</text><text x="1939.0" y="481.5">Poland</text><text x="2016.6" y="510.7">Ukraine</text><text x="1890.5" y="512.7">Germany</text><text x="1846.0" y="543.0">France</text><text x="1901.5" y="564.0">Italy</text><text x="1812.7" y="575.0">Spain</text><text x="2034.8" y="597.5">Türkiye</text><text x="1227.0" y="591.0">United States</text><text x="583.4" y="595.4">Japan</text><text x="374.5" y="607.5">China</text><text x="2422.5" y="607.5">China</text><text x="506.7" y="615.6">South Korea</text><text x="2554.7" y="615.6">South Korea</text><text x="170.6" y="629.8">Afghanistan</text><text x="2218.6" y="629.8">Afghanistan</text><text x="2077.0" y="639.9">Iraq</text><text x="29.0" y="639.9">Iraq</text><text x="92.9" y="648.0">Iran</text><text x="175.6" y="666.0">Pakistan</text><text x="2223.6" y="666.0">Pakistan</text><text x="1842.0" y="671.0">Algeria</text><text x="1931.0" y="678.0">Libya</text><text x="2002.5" y="669.0">Egypt</text><text x="1248.5" y="698.4">Mexico</text><text x="2089.0" y="699.4">Saudi Arabia</text><text x="41.0" y="699.4">Saudi Arabia</text><text x="237.2" y="703.4">India</text><text x="2285.2" y="703.4">India</text><text x="359.3" y="721.6">Thailand</text><text x="2407.3" y="721.6">Thailand</text><text x="1823.0" y="734.7">Mali</text><text x="1889.5" y="734.7">Niger</text><text x="2004.5" y="739.8">Sudan</text><text x="1942.0" y="758.0">Chad</text><text x="1455.4" y="790.2">Venezuela</text><text x="2059.0" y="789.2">Ethiopia</text><text x="1905.6" y="783.0">Nigeria</text><text x="1400.0" y="815.5">Colombia</text><text x="2049.0" y="835.7">Kenya</text><text x="1962.0" y="846.8">DRC</text><text x="445.0" y="861.0">Indonesia</text><text x="2493.0" y="861.0">Indonesia</text><text x="621.7" y="865.0">Papua New</text><text x="621.7" y="883.0">Guinea</text><text x="2044.0" y="874.0">Tanzania</text><text x="1516.0" y="887.0">Brazil</text><text x="1399.0" y="901.3">Peru</text><text x="1926.0" y="909.3">Angola</text><text x="1464.5" y="934.6">Bolivia</text><text x="2105.5" y="961.8">Madagascar</text><text x="57.5" y="961.8">Madagascar</text><text x="1923.0" y="949.7">Namibia</text><text x="1970.0" y="974.0">Botswana</text><text x="548.0" y="985.0">Australia</text><text x="1432.0" y="996.0">Chile</text><text x="1944.0" y="1040.5">South Africa</text><text x="1478.6" y="1079.0">Argentina</text><text x="731.8" y="1081.0">New</text><text x="731.8" y="1098.0">Zealand</text></g><g font-size="24.6" fill="#157a96" text-anchor="middle" letter-spacing="3.3"><text x="887.1" y="591.8">North</text><text x="887.1" y="617.6">Pacific</text><text x="887.1" y="643.5">Ocean</text><text x="1603.4" y="604.0">North</text><text x="1603.4" y="629.9">Atlantic</text><text x="1603.4" y="655.7">Ocean</text><text x="241.8" y="956.0">Indian</text><text x="241.8" y="981.9">Ocean</text><text x="2289.8" y="956.0">Indian</text><text x="2289.8" y="981.9">Ocean</text><text x="1055.3" y="990.0">South</text><text x="1055.3" y="1015.9">Pacific</text><text x="1055.3" y="1041.7">Ocean</text><text x="1750.6" y="986.0">South</text><text x="1750.6" y="1011.9">Atlantic</text><text x="1750.6" y="1037.7">Ocean</text></g><path d="M1171.0 439.3A19.4 19.4 0 1 1 1204.0 439.3L1187.5 465.7Z" fill="#225e93"/><circle cx="1187.5" cy="429.0" r="8.9" fill="#fff"/><path d="M1803.9 442.7A19.4 19.4 0 1 1 1836.9 442.7L1820.4 469.1Z" fill="#225e93"/><path d="M1874.9 443.7A19.4 19.4 0 1 1 1907.9 443.7L1891.4 470.1Z" fill="#225e93"/><circle cx="1891.4" cy="433.4" r="8.9" fill="#fff"/><path d="M1819.8 448.0A19.4 19.4 0 1 1 1852.8 448.0L1836.3 474.4Z" fill="#225e93"/><path d="M1846.8 449.6A19.4 19.4 0 1 1 1879.8 449.6L1863.3 476.0Z" fill="#225e93"/><circle cx="1863.3" cy="439.3" r="8.9" fill="#fff"/><path d="M1169.0 463.1A19.4 19.4 0 1 1 1202.0 463.1L1185.5 489.5Z" fill="#225e93"/><circle cx="1185.5" cy="452.8" r="8.9" fill="#fff"/><path d="M1812.4 466.0A19.4 19.4 0 1 1 1845.4 466.0L1828.9 492.4Z" fill="#225e93"/><circle cx="1828.9" cy="455.7" r="8.9" fill="#fff"/><path d="M1792.8 469.2A19.4 19.4 0 1 1 1825.8 469.2L1809.3 495.6Z" fill="#225e93"/><circle cx="1809.3" cy="458.9" r="8.9" fill="#fff"/><path d="M1117.2 479.2A19.4 19.4 0 1 1 1150.2 479.2L1133.7 505.6Z" fill="#225e93"/><circle cx="1133.7" cy="468.9" r="8.9" fill="#fff"/><path d="M1830.9 481.3A19.4 19.4 0 1 1 1863.9 481.3L1847.4 507.7Z" fill="#225e93"/><circle cx="1847.4" cy="471.0" r="8.9" fill="#fff"/><path d="M1169.0 499.3A19.4 19.4 0 1 1 1202.0 499.3L1185.5 525.7Z" fill="#225e93"/><circle cx="1185.5" cy="489.0" r="8.9" fill="#fff"/><path d="M1118.7 509.1A19.4 19.4 0 1 1 1151.7 509.1L1135.2 535.5Z" fill="#225e93"/><circle cx="1135.2" cy="498.8" r="8.9" fill="#fff"/><path d="M1154.9 525.3A19.4 19.4 0 1 1 1187.9 525.3L1171.4 551.7Z" fill="#225e93"/><circle cx="1171.4" cy="515.0" r="8.9" fill="#fff"/><path d="M1370.7 530.3A19.4 19.4 0 1 1 1403.7 530.3L1387.2 556.7Z" fill="#225e93"/><circle cx="1387.2" cy="520.0" r="8.9" fill="#fff"/><path d="M1405.0 534.5A19.4 19.4 0 1 1 1438.0 534.5L1421.5 560.9Z" fill="#225e93"/><path d="M1315.9 534.5A19.4 19.4 0 1 1 1348.9 534.5L1332.4 560.9Z" fill="#225e93"/><path d="M1355.3 540.5A19.4 19.4 0 1 1 1388.3 540.5L1371.8 566.9Z" fill="#225e93"/><circle cx="1371.8" cy="530.2" r="8.9" fill="#fff"/><path d="M1307.4 543.1A19.4 19.4 0 1 1 1340.4 543.1L1323.9 569.5Z" fill="#225e93"/><circle cx="1323.9" cy="532.8" r="8.9" fill="#fff"/><path d="M1393.5 545.3A19.4 19.4 0 1 1 1426.5 545.3L1410.0 571.7Z" fill="#225e93"/><path d="M1178.8 547.3A19.4 19.4 0 1 1 1211.8 547.3L1195.3 573.7Z" fill="#225e93"/><circle cx="1195.3" cy="537.0" r="8.9" fill="#fff"/><path d="M1221.5 553.1A19.4 19.4 0 1 1 1254.5 553.1L1238.0 579.5Z" fill="#225e93"/><circle cx="1238.0" cy="542.8" r="8.9" fill="#fff"/><path d="M1136.3 553.1A19.4 19.4 0 1 1 1169.3 553.1L1152.8 579.5Z" fill="#225e93"/><circle cx="1152.8" cy="542.8" r="8.9" fill="#fff"/><path d="M1346.8 553.3A19.4 19.4 0 1 1 1379.8 553.3L1363.3 579.7Z" fill="#225e93"/><circle cx="1363.3" cy="543.0" r="8.9" fill="#fff"/><path d="M1211.1 555.1A19.4 19.4 0 1 1 1244.1 555.1L1227.6 581.5Z" fill="#225e93"/><circle cx="1227.6" cy="544.8" r="8.9" fill="#fff"/><path d="M1324.5 556.8A19.4 19.4 0 1 1 1357.5 556.8L1341.0 583.2Z" fill="#225e93"/><circle cx="1341.0" cy="546.5" r="8.9" fill="#fff"/><path d="M1381.0 559.3A19.4 19.4 0 1 1 1414.0 559.3L1397.5 585.7Z" fill="#225e93"/><circle cx="1397.5" cy="549.0" r="8.9" fill="#fff"/><path d="M1276.5 561.1A19.4 19.4 0 1 1 1309.5 561.1L1293.0 587.5Z" fill="#225e93"/><circle cx="1293.0" cy="550.8" r="8.9" fill="#fff"/><path d="M1303.1 561.1A19.4 19.4 0 1 1 1336.1 561.1L1319.6 587.5Z" fill="#225e93"/><circle cx="1319.6" cy="550.8" r="8.9" fill="#fff"/><path d="M1124.5 569.2A19.4 19.4 0 1 1 1157.5 569.2L1141.0 595.6Z" fill="#225e93"/><circle cx="1141.0" cy="558.9" r="8.9" fill="#fff"/><path d="M1261.2 585.0A19.4 19.4 0 1 1 1294.2 585.0L1277.7 611.4Z" fill="#225e93"/><circle cx="1277.7" cy="574.7" r="8.9" fill="#fff"/><path d="M1358.8 585.9A19.4 19.4 0 1 1 1391.8 585.9L1375.3 612.3Z" fill="#225e93"/><circle cx="1375.3" cy="575.6" r="8.9" fill="#fff"/><path d="M1304.8 589.3A19.4 19.4 0 1 1 1337.8 589.3L1321.3 615.7Z" fill="#225e93"/><circle cx="1321.3" cy="579.0" r="8.9" fill="#fff"/><path d="M1338.2 598.7A19.4 19.4 0 1 1 1371.2 598.7L1354.7 625.1Z" fill="#225e93"/><circle cx="1354.7" cy="588.4" r="8.9" fill="#fff"/><path d="M1149.0 601.1A19.4 19.4 0 1 1 1182.0 601.1L1165.5 627.5Z" fill="#225e93"/><circle cx="1165.5" cy="590.8" r="8.9" fill="#fff"/><path d="M1350.2 615.0A19.4 19.4 0 1 1 1383.2 615.0L1366.7 641.4Z" fill="#225e93"/><circle cx="1366.7" cy="604.7" r="8.9" fill="#fff"/><path d="M1262.9 620.1A19.4 19.4 0 1 1 1295.9 620.1L1279.4 646.5Z" fill="#225e93"/><circle cx="1279.4" cy="609.8" r="8.9" fill="#fff"/><path d="M1273.1 625.3A19.4 19.4 0 1 1 1306.1 625.3L1289.6 651.7Z" fill="#225e93"/><circle cx="1289.6" cy="615.0" r="8.9" fill="#fff"/><path d="M1353.6 630.4A19.4 19.4 0 1 1 1386.6 630.4L1370.1 656.8Z" fill="#225e93"/><circle cx="1370.1" cy="620.1" r="8.9" fill="#fff"/><path d="M1358.8 649.3A19.4 19.4 0 1 1 1391.8 649.3L1375.3 675.7Z" fill="#225e93"/><circle cx="1375.3" cy="639.0" r="8.9" fill="#fff"/><path d="M2130.1 654.7A19.4 19.4 0 1 1 2163.1 654.7L2146.6 681.1Z" fill="#225e93"/><circle cx="2146.6" cy="644.4" r="8.9" fill="#fff"/><path d="M1440.9 695.1A19.4 19.4 0 1 1 1473.9 695.1L1457.4 721.5Z" fill="#225e93"/><circle cx="1457.4" cy="684.8" r="8.9" fill="#fff"/><path d="M456.5 717.1A19.4 19.4 0 1 1 489.5 717.1L473.0 743.5Z" fill="#225e93"/><circle cx="473.0" cy="706.8" r="8.9" fill="#fff"/><path d="M472.3 741.3A19.4 19.4 0 1 1 505.3 741.3L488.8 767.7Z" fill="#225e93"/><circle cx="488.8" cy="731.0" r="8.9" fill="#fff"/><path d="M1551.0 939.4A19.4 19.4 0 1 1 1584.0 939.4L1567.5 965.8Z" fill="#225e93"/><circle cx="1567.5" cy="929.1" r="8.9" fill="#fff"/><path d="M639.2 963.3A19.4 19.4 0 1 1 672.2 963.3L655.7 989.7Z" fill="#225e93"/><circle cx="655.7" cy="953.0" r="8.9" fill="#fff"/><path d="M427.0 994.6A19.4 19.4 0 1 1 460.0 994.6L443.5 1021.0Z" fill="#225e93"/><circle cx="443.5" cy="984.3" r="8.9" fill="#fff"/><path d="M626.9 1007.7A19.4 19.4 0 1 1 659.9 1007.7L643.4 1034.1Z" fill="#225e93"/><circle cx="643.4" cy="997.4" r="8.9" fill="#fff"/><path d="M594.8 1033.7A19.4 19.4 0 1 1 627.8 1033.7L611.3 1060.1Z" fill="#225e93"/><circle cx="611.3" cy="1023.4" r="8.9" fill="#fff"/><circle cx="2495" cy="403.9" r="39.6" fill="#225e93"/><rect x="51.3" y="352.2" width="335.6" height="79.5" rx="4" fill="#fff" style="filter:drop-shadow(0 1px 2px rgba(0,0,0,.3))"/><rect x="187.8" y="352.2" width="2" height="79.5" fill="#ebebeb"/><text x="86" y="406" font-size="37.5" font-weight="bold" fill="#000" textLength="69.8" lengthAdjust="spacingAndGlyphs">Map</text><text x="224.4" y="406" font-size="37.5" fill="#565656" textLength="127.6" lengthAdjust="spacingAndGlyphs">Satellite</text><rect x="2459.2" y="898.3" width="79.6" height="161.7" rx="2" fill="#fff" style="filter:drop-shadow(0 1px 2px rgba(0,0,0,.3))"/><rect x="2469" y="978.2" width="59" height="1.2" fill="#e6e6e6"/><rect x="2481.5" y="933" width="35.4" height="10" fill="#666"/><rect x="2494.2" y="920.7" width="10" height="35.3" fill="#666"/><rect x="2481.5" y="1015.3" width="35.4" height="9" fill="#666"/><rect x="2459.2" y="1100" width="79.6" height="79.7" rx="2" fill="#fff" style="filter:drop-shadow(0 1px 2px rgba(0,0,0,.3))"/><path d="M2482.5 1134V1123.5H2493.5M2504.5 1123.5H2515.5V1134M2515.5 1146V1156.5H2504.5M2493.5 1156.5H2482.5V1146" fill="none" stroke="#666" stroke-width="4"/><rect x="1989" y="1172.4" width="450" height="27.2" fill="#c3e9f1"/><rect x="2183.8" y="1172.4" width="1.5" height="27.2" fill="#eef"/><rect x="2357.8" y="1172.4" width="1.5" height="27.2" fill="#eef"/><g font-size="21.5" fill="#111"><text x="1999" y="1192.7" textLength="172" lengthAdjust="spacingAndGlyphs">Keyboard shortcuts</text><text x="2196" y="1192.7" textLength="149.5" lengthAdjust="spacingAndGlyphs">Map data ©2025</text><text x="2370" y="1192.7" textLength="56" lengthAdjust="spacingAndGlyphs">Terms</text></g><g fill="none" stroke-linecap="butt"><path d="M74.8 1161.8A10.8 10.8 0 1 0 76.2 1170.6H65.5" stroke="#d2eef4" stroke-width="8"/><path d="M89.6 1169A6.3 6.3 0 1 0 89.61 1169Z" stroke="#d2eef4" stroke-width="8"/><path d="M109.2 1169A6.3 6.3 0 1 0 109.21 1169Z" stroke="#d2eef4" stroke-width="8"/><path d="M128.4 1169A6.3 6.3 0 1 0 128.41 1169ZM134.7 1167V1182.5A7 7 0 0 1 122.5 1187" stroke="#d2eef4" stroke-width="8"/><path d="M141.9 1158.5V1183" stroke="#d2eef4" stroke-width="8"/><path d="M149 1179.5L159.5 1172.5A6.3 6.3 0 1 0 159.6 1178.5" stroke="#d2eef4" stroke-width="8"/><path d="M74.8 1161.8A10.8 10.8 0 1 0 76.2 1170.6H65.5" stroke="#4fa7d6" stroke-width="4.2"/><path d="M89.6 1169A6.3 6.3 0 1 0 89.61 1169Z" stroke="#e8473b" stroke-width="4.2"/><path d="M109.2 1169A6.3 6.3 0 1 0 109.21 1169Z" stroke="#f5bd1f" stroke-width="4.2"/><path d="M128.4 1169A6.3 6.3 0 1 0 128.41 1169ZM134.7 1167V1182.5A7 7 0 0 1 122.5 1187" stroke="#4fa7d6" stroke-width="4.2"/><path d="M141.9 1158.5V1183" stroke="#57c12b" stroke-width="4.2"/><path d="M149 1179.5L159.5 1172.5A6.3 6.3 0 1 0 159.6 1178.5" stroke="#e8473b" stroke-width="4.2"/></g></g></svg>
</body></html>
